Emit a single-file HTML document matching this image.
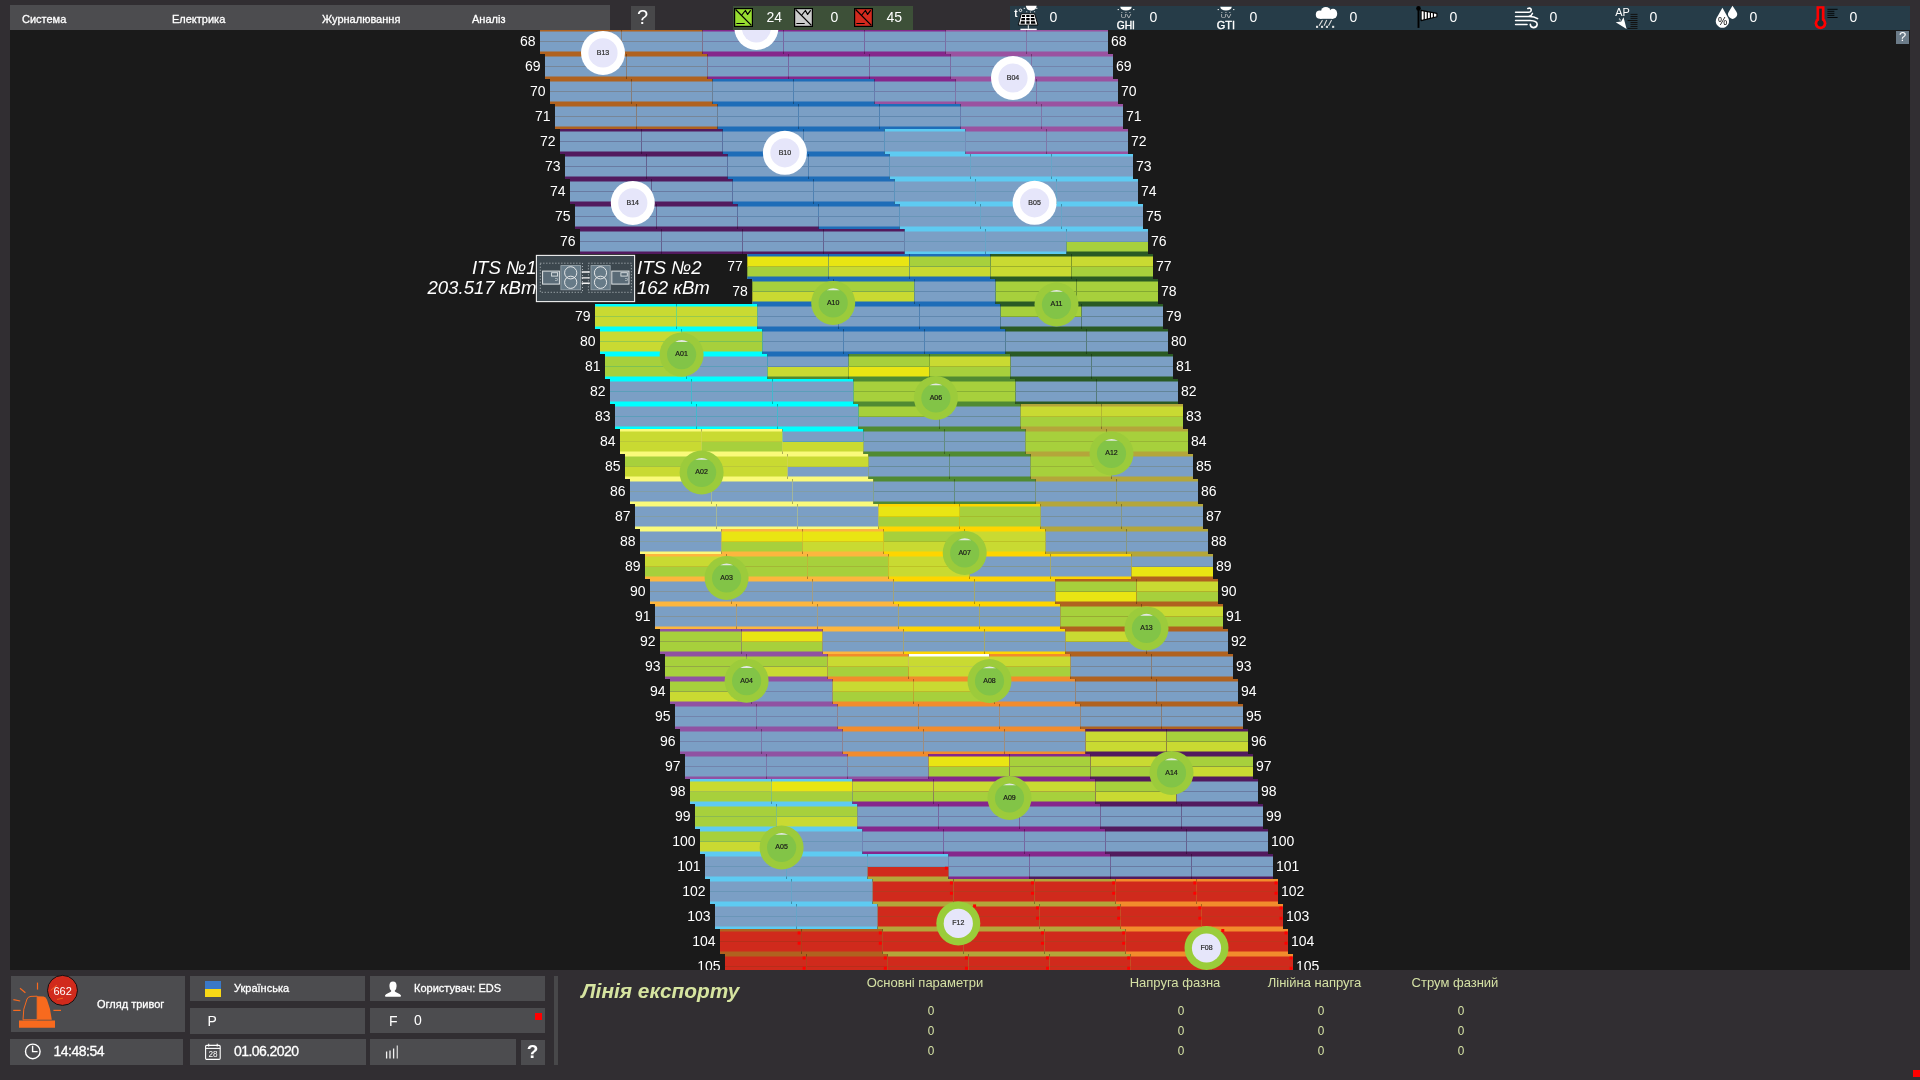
<!DOCTYPE html>
<html><head><meta charset="utf-8"><style>
html,body{margin:0;padding:0}
body{width:1920px;height:1080px;background:#312e32;position:relative;overflow:hidden;font-family:"Liberation Sans", sans-serif}
.s{-webkit-text-stroke:0.3px #fff}
</style></head><body>
<div style="position:absolute;left:0;top:0;width:1920px;height:1080px;will-change:transform">
<div style="position:absolute;left:10px;top:30px;width:1900px;height:940px;background:#1a1a1a"></div>
<svg width="1920" height="1080" style="position:absolute;left:0;top:0;will-change:transform">
<defs><clipPath id="cv"><rect x="10" y="30" width="1900" height="940"/></clipPath></defs>
<g clip-path="url(#cv)">
<rect x="535" y="4" width="81.84" height="12.5" fill="#7b9fc5"/>
<rect x="535" y="16.5" width="81.84" height="12.5" fill="#7b9fc5"/>
<rect x="535" y="16" width="81.84" height="1" fill="#778698"/>
<rect x="535" y="4" width="81.84" height="2.5" fill="#b0621f"/>
<rect x="535" y="26.5" width="81.84" height="2.5" fill="#b0621f"/>
<rect x="616.14" y="4" width="81.84" height="12.5" fill="#7b9fc5"/>
<rect x="616.14" y="16.5" width="81.84" height="12.5" fill="#7b9fc5"/>
<rect x="616.14" y="16" width="81.84" height="1" fill="#778698"/>
<rect x="616.14" y="4" width="81.84" height="2.5" fill="#b0621f"/>
<rect x="616.14" y="26.5" width="81.84" height="2.5" fill="#b0621f"/>
<rect x="697.29" y="4" width="81.84" height="12.5" fill="#7b9fc5"/>
<rect x="697.29" y="16.5" width="81.84" height="12.5" fill="#7b9fc5"/>
<rect x="697.29" y="16" width="81.84" height="1" fill="#707da9"/>
<rect x="697.29" y="4" width="81.84" height="2.5" fill="#85278c"/>
<rect x="697.29" y="26.5" width="81.84" height="2.5" fill="#85278c"/>
<rect x="778.43" y="4" width="81.84" height="12.5" fill="#7b9fc5"/>
<rect x="778.43" y="16.5" width="81.84" height="12.5" fill="#7b9fc5"/>
<rect x="778.43" y="16" width="81.84" height="1" fill="#707da9"/>
<rect x="778.43" y="4" width="81.84" height="2.5" fill="#85278c"/>
<rect x="778.43" y="26.5" width="81.84" height="2.5" fill="#85278c"/>
<rect x="859.57" y="4" width="81.84" height="12.5" fill="#7b9fc5"/>
<rect x="859.57" y="16.5" width="81.84" height="12.5" fill="#7b9fc5"/>
<rect x="859.57" y="16" width="81.84" height="1" fill="#707da9"/>
<rect x="859.57" y="4" width="81.84" height="2.5" fill="#85278c"/>
<rect x="859.57" y="26.5" width="81.84" height="2.5" fill="#85278c"/>
<rect x="940.71" y="4" width="81.84" height="12.5" fill="#7b9fc5"/>
<rect x="940.71" y="16.5" width="81.84" height="12.5" fill="#7b9fc5"/>
<rect x="940.71" y="16" width="81.84" height="1" fill="#7384ac"/>
<rect x="940.71" y="4" width="81.84" height="2.5" fill="#9a52a0"/>
<rect x="940.71" y="26.5" width="81.84" height="2.5" fill="#9a52a0"/>
<rect x="1021.86" y="4" width="81.14" height="12.5" fill="#7b9fc5"/>
<rect x="1021.86" y="16.5" width="81.14" height="12.5" fill="#7b9fc5"/>
<rect x="1021.86" y="16" width="81.14" height="1" fill="#7384ac"/>
<rect x="1021.86" y="4" width="81.14" height="2.5" fill="#9a52a0"/>
<rect x="1021.86" y="26.5" width="81.14" height="2.5" fill="#9a52a0"/>
<rect x="616" y="6.5" width="1" height="10" fill="#877d78"/>
<rect x="616" y="16.5" width="1" height="10" fill="#877d78"/>
<rect x="616" y="4" width="1" height="2.5" fill="#7b4516"/>
<rect x="616" y="26.5" width="1" height="2.5" fill="#7b4516"/>
<rect x="697" y="6.5" width="1" height="10" fill="#7e718d"/>
<rect x="697" y="16.5" width="1" height="10" fill="#7e718d"/>
<rect x="697" y="4" width="1" height="2.5" fill="#6c303c"/>
<rect x="697" y="26.5" width="1" height="2.5" fill="#6c303c"/>
<rect x="778" y="6.5" width="1" height="10" fill="#7666a2"/>
<rect x="778" y="16.5" width="1" height="10" fill="#7666a2"/>
<rect x="778" y="4" width="1" height="2.5" fill="#5d1b62"/>
<rect x="778" y="26.5" width="1" height="2.5" fill="#5d1b62"/>
<rect x="859" y="6.5" width="1" height="10" fill="#7666a2"/>
<rect x="859" y="16.5" width="1" height="10" fill="#7666a2"/>
<rect x="859" y="4" width="1" height="2.5" fill="#5d1b62"/>
<rect x="859" y="26.5" width="1" height="2.5" fill="#5d1b62"/>
<rect x="940" y="6.5" width="1" height="10" fill="#7a6ea5"/>
<rect x="940" y="16.5" width="1" height="10" fill="#7a6ea5"/>
<rect x="940" y="4" width="1" height="2.5" fill="#652a69"/>
<rect x="940" y="26.5" width="1" height="2.5" fill="#652a69"/>
<rect x="1021" y="6.5" width="1" height="10" fill="#7e77a9"/>
<rect x="1021" y="16.5" width="1" height="10" fill="#7e77a9"/>
<rect x="1021" y="4" width="1" height="2.5" fill="#6c3970"/>
<rect x="1021" y="26.5" width="1" height="2.5" fill="#6c3970"/>
<rect x="540" y="29" width="81.84" height="12.5" fill="#7b9fc5"/>
<rect x="540" y="41.5" width="81.84" height="12.5" fill="#7b9fc5"/>
<rect x="540" y="41" width="81.84" height="1" fill="#778698"/>
<rect x="540" y="29" width="81.84" height="2.5" fill="#b0621f"/>
<rect x="540" y="51.5" width="81.84" height="2.5" fill="#b0621f"/>
<rect x="621.14" y="29" width="81.84" height="12.5" fill="#7b9fc5"/>
<rect x="621.14" y="41.5" width="81.84" height="12.5" fill="#7b9fc5"/>
<rect x="621.14" y="41" width="81.84" height="1" fill="#778698"/>
<rect x="621.14" y="29" width="81.84" height="2.5" fill="#b0621f"/>
<rect x="621.14" y="51.5" width="81.84" height="2.5" fill="#b0621f"/>
<rect x="702.29" y="29" width="81.84" height="12.5" fill="#7b9fc5"/>
<rect x="702.29" y="41.5" width="81.84" height="12.5" fill="#7b9fc5"/>
<rect x="702.29" y="41" width="81.84" height="1" fill="#707da9"/>
<rect x="702.29" y="29" width="81.84" height="2.5" fill="#85278c"/>
<rect x="702.29" y="51.5" width="81.84" height="2.5" fill="#85278c"/>
<rect x="783.43" y="29" width="81.84" height="12.5" fill="#7b9fc5"/>
<rect x="783.43" y="41.5" width="81.84" height="12.5" fill="#7b9fc5"/>
<rect x="783.43" y="41" width="81.84" height="1" fill="#707da9"/>
<rect x="783.43" y="29" width="81.84" height="2.5" fill="#85278c"/>
<rect x="783.43" y="51.5" width="81.84" height="2.5" fill="#85278c"/>
<rect x="864.57" y="29" width="81.84" height="12.5" fill="#7b9fc5"/>
<rect x="864.57" y="41.5" width="81.84" height="12.5" fill="#7b9fc5"/>
<rect x="864.57" y="41" width="81.84" height="1" fill="#707da9"/>
<rect x="864.57" y="29" width="81.84" height="2.5" fill="#85278c"/>
<rect x="864.57" y="51.5" width="81.84" height="2.5" fill="#85278c"/>
<rect x="945.71" y="29" width="81.84" height="12.5" fill="#7b9fc5"/>
<rect x="945.71" y="41.5" width="81.84" height="12.5" fill="#7b9fc5"/>
<rect x="945.71" y="41" width="81.84" height="1" fill="#7384ac"/>
<rect x="945.71" y="29" width="81.84" height="2.5" fill="#9a52a0"/>
<rect x="945.71" y="51.5" width="81.84" height="2.5" fill="#9a52a0"/>
<rect x="1026.86" y="29" width="81.14" height="12.5" fill="#7b9fc5"/>
<rect x="1026.86" y="41.5" width="81.14" height="12.5" fill="#7b9fc5"/>
<rect x="1026.86" y="41" width="81.14" height="1" fill="#7384ac"/>
<rect x="1026.86" y="29" width="81.14" height="2.5" fill="#9a52a0"/>
<rect x="1026.86" y="51.5" width="81.14" height="2.5" fill="#9a52a0"/>
<rect x="621" y="31.5" width="1" height="10" fill="#877d78"/>
<rect x="621" y="41.5" width="1" height="10" fill="#877d78"/>
<rect x="621" y="29" width="1" height="2.5" fill="#7b4516"/>
<rect x="621" y="51.5" width="1" height="2.5" fill="#7b4516"/>
<rect x="702" y="31.5" width="1" height="10" fill="#7e718d"/>
<rect x="702" y="41.5" width="1" height="10" fill="#7e718d"/>
<rect x="702" y="29" width="1" height="2.5" fill="#6c303c"/>
<rect x="702" y="51.5" width="1" height="2.5" fill="#6c303c"/>
<rect x="783" y="31.5" width="1" height="10" fill="#7666a2"/>
<rect x="783" y="41.5" width="1" height="10" fill="#7666a2"/>
<rect x="783" y="29" width="1" height="2.5" fill="#5d1b62"/>
<rect x="783" y="51.5" width="1" height="2.5" fill="#5d1b62"/>
<rect x="864" y="31.5" width="1" height="10" fill="#7666a2"/>
<rect x="864" y="41.5" width="1" height="10" fill="#7666a2"/>
<rect x="864" y="29" width="1" height="2.5" fill="#5d1b62"/>
<rect x="864" y="51.5" width="1" height="2.5" fill="#5d1b62"/>
<rect x="945" y="31.5" width="1" height="10" fill="#7a6ea5"/>
<rect x="945" y="41.5" width="1" height="10" fill="#7a6ea5"/>
<rect x="945" y="29" width="1" height="2.5" fill="#652a69"/>
<rect x="945" y="51.5" width="1" height="2.5" fill="#652a69"/>
<rect x="1026" y="31.5" width="1" height="10" fill="#7e77a9"/>
<rect x="1026" y="41.5" width="1" height="10" fill="#7e77a9"/>
<rect x="1026" y="29" width="1" height="2.5" fill="#6c3970"/>
<rect x="1026" y="51.5" width="1" height="2.5" fill="#6c3970"/>
<rect x="545" y="54" width="81.84" height="12.5" fill="#7b9fc5"/>
<rect x="545" y="66.5" width="81.84" height="12.5" fill="#7b9fc5"/>
<rect x="545" y="66" width="81.84" height="1" fill="#778698"/>
<rect x="545" y="54" width="81.84" height="2.5" fill="#b0621f"/>
<rect x="545" y="76.5" width="81.84" height="2.5" fill="#b0621f"/>
<rect x="626.14" y="54" width="81.84" height="12.5" fill="#7b9fc5"/>
<rect x="626.14" y="66.5" width="81.84" height="12.5" fill="#7b9fc5"/>
<rect x="626.14" y="66" width="81.84" height="1" fill="#778698"/>
<rect x="626.14" y="54" width="81.84" height="2.5" fill="#b0621f"/>
<rect x="626.14" y="76.5" width="81.84" height="2.5" fill="#b0621f"/>
<rect x="707.29" y="54" width="81.84" height="12.5" fill="#7b9fc5"/>
<rect x="707.29" y="66.5" width="81.84" height="12.5" fill="#7b9fc5"/>
<rect x="707.29" y="66" width="81.84" height="1" fill="#707da9"/>
<rect x="707.29" y="54" width="81.84" height="2.5" fill="#85278c"/>
<rect x="707.29" y="76.5" width="81.84" height="2.5" fill="#85278c"/>
<rect x="788.43" y="54" width="81.84" height="12.5" fill="#7b9fc5"/>
<rect x="788.43" y="66.5" width="81.84" height="12.5" fill="#7b9fc5"/>
<rect x="788.43" y="66" width="81.84" height="1" fill="#707da9"/>
<rect x="788.43" y="54" width="81.84" height="2.5" fill="#85278c"/>
<rect x="788.43" y="76.5" width="81.84" height="2.5" fill="#85278c"/>
<rect x="869.57" y="54" width="81.84" height="12.5" fill="#7b9fc5"/>
<rect x="869.57" y="66.5" width="81.84" height="12.5" fill="#7b9fc5"/>
<rect x="869.57" y="66" width="81.84" height="1" fill="#707da9"/>
<rect x="869.57" y="54" width="81.84" height="2.5" fill="#85278c"/>
<rect x="869.57" y="76.5" width="81.84" height="2.5" fill="#85278c"/>
<rect x="950.71" y="54" width="81.84" height="12.5" fill="#7b9fc5"/>
<rect x="950.71" y="66.5" width="81.84" height="12.5" fill="#7b9fc5"/>
<rect x="950.71" y="66" width="81.84" height="1" fill="#7384ac"/>
<rect x="950.71" y="54" width="81.84" height="2.5" fill="#9a52a0"/>
<rect x="950.71" y="76.5" width="81.84" height="2.5" fill="#9a52a0"/>
<rect x="1031.86" y="54" width="81.14" height="12.5" fill="#7b9fc5"/>
<rect x="1031.86" y="66.5" width="81.14" height="12.5" fill="#7b9fc5"/>
<rect x="1031.86" y="66" width="81.14" height="1" fill="#7384ac"/>
<rect x="1031.86" y="54" width="81.14" height="2.5" fill="#9a52a0"/>
<rect x="1031.86" y="76.5" width="81.14" height="2.5" fill="#9a52a0"/>
<rect x="626" y="56.5" width="1" height="10" fill="#877d78"/>
<rect x="626" y="66.5" width="1" height="10" fill="#877d78"/>
<rect x="626" y="54" width="1" height="2.5" fill="#7b4516"/>
<rect x="626" y="76.5" width="1" height="2.5" fill="#7b4516"/>
<rect x="707" y="56.5" width="1" height="10" fill="#7e718d"/>
<rect x="707" y="66.5" width="1" height="10" fill="#7e718d"/>
<rect x="707" y="54" width="1" height="2.5" fill="#6c303c"/>
<rect x="707" y="76.5" width="1" height="2.5" fill="#6c303c"/>
<rect x="788" y="56.5" width="1" height="10" fill="#7666a2"/>
<rect x="788" y="66.5" width="1" height="10" fill="#7666a2"/>
<rect x="788" y="54" width="1" height="2.5" fill="#5d1b62"/>
<rect x="788" y="76.5" width="1" height="2.5" fill="#5d1b62"/>
<rect x="869" y="56.5" width="1" height="10" fill="#7666a2"/>
<rect x="869" y="66.5" width="1" height="10" fill="#7666a2"/>
<rect x="869" y="54" width="1" height="2.5" fill="#5d1b62"/>
<rect x="869" y="76.5" width="1" height="2.5" fill="#5d1b62"/>
<rect x="950" y="56.5" width="1" height="10" fill="#7a6ea5"/>
<rect x="950" y="66.5" width="1" height="10" fill="#7a6ea5"/>
<rect x="950" y="54" width="1" height="2.5" fill="#652a69"/>
<rect x="950" y="76.5" width="1" height="2.5" fill="#652a69"/>
<rect x="1031" y="56.5" width="1" height="10" fill="#7e77a9"/>
<rect x="1031" y="66.5" width="1" height="10" fill="#7e77a9"/>
<rect x="1031" y="54" width="1" height="2.5" fill="#6c3970"/>
<rect x="1031" y="76.5" width="1" height="2.5" fill="#6c3970"/>
<rect x="550" y="79" width="81.84" height="12.5" fill="#7b9fc5"/>
<rect x="550" y="91.5" width="81.84" height="12.5" fill="#7b9fc5"/>
<rect x="550" y="91" width="81.84" height="1" fill="#778698"/>
<rect x="550" y="79" width="81.84" height="2.5" fill="#b0621f"/>
<rect x="550" y="101.5" width="81.84" height="2.5" fill="#b0621f"/>
<rect x="631.14" y="79" width="81.84" height="12.5" fill="#7b9fc5"/>
<rect x="631.14" y="91.5" width="81.84" height="12.5" fill="#7b9fc5"/>
<rect x="631.14" y="91" width="81.84" height="1" fill="#778698"/>
<rect x="631.14" y="79" width="81.84" height="2.5" fill="#b0621f"/>
<rect x="631.14" y="101.5" width="81.84" height="2.5" fill="#b0621f"/>
<rect x="712.29" y="79" width="81.84" height="12.5" fill="#7b9fc5"/>
<rect x="712.29" y="91.5" width="81.84" height="12.5" fill="#7b9fc5"/>
<rect x="712.29" y="91" width="81.84" height="1" fill="#6188af"/>
<rect x="712.29" y="79" width="81.84" height="2.5" fill="#1e6db8"/>
<rect x="712.29" y="101.5" width="81.84" height="2.5" fill="#1e6db8"/>
<rect x="793.43" y="79" width="81.84" height="12.5" fill="#7b9fc5"/>
<rect x="793.43" y="91.5" width="81.84" height="12.5" fill="#7b9fc5"/>
<rect x="793.43" y="91" width="81.84" height="1" fill="#6188af"/>
<rect x="793.43" y="79" width="81.84" height="2.5" fill="#1e6db8"/>
<rect x="793.43" y="101.5" width="81.84" height="2.5" fill="#1e6db8"/>
<rect x="874.57" y="79" width="81.84" height="12.5" fill="#7b9fc5"/>
<rect x="874.57" y="91.5" width="81.84" height="12.5" fill="#7b9fc5"/>
<rect x="874.57" y="91" width="81.84" height="1" fill="#707da9"/>
<rect x="874.57" y="79" width="81.84" height="2.5" fill="#85278c"/>
<rect x="874.57" y="101.5" width="81.84" height="2.5" fill="#9a52a0"/>
<rect x="955.71" y="79" width="81.84" height="12.5" fill="#7b9fc5"/>
<rect x="955.71" y="91.5" width="81.84" height="12.5" fill="#7b9fc5"/>
<rect x="955.71" y="91" width="81.84" height="1" fill="#7384ac"/>
<rect x="955.71" y="79" width="81.84" height="2.5" fill="#9a52a0"/>
<rect x="955.71" y="101.5" width="81.84" height="2.5" fill="#9a52a0"/>
<rect x="1036.86" y="79" width="81.14" height="12.5" fill="#7b9fc5"/>
<rect x="1036.86" y="91.5" width="81.14" height="12.5" fill="#7b9fc5"/>
<rect x="1036.86" y="91" width="81.14" height="1" fill="#7384ac"/>
<rect x="1036.86" y="79" width="81.14" height="2.5" fill="#9a52a0"/>
<rect x="1036.86" y="101.5" width="81.14" height="2.5" fill="#9a52a0"/>
<rect x="631" y="81.5" width="1" height="10" fill="#877d78"/>
<rect x="631" y="91.5" width="1" height="10" fill="#877d78"/>
<rect x="631" y="79" width="1" height="2.5" fill="#7b4516"/>
<rect x="631" y="101.5" width="1" height="2.5" fill="#7b4516"/>
<rect x="712" y="81.5" width="1" height="10" fill="#6b7f95"/>
<rect x="712" y="91.5" width="1" height="10" fill="#6b7f95"/>
<rect x="712" y="79" width="1" height="2.5" fill="#48494c"/>
<rect x="712" y="101.5" width="1" height="2.5" fill="#48494c"/>
<rect x="793" y="81.5" width="1" height="10" fill="#4f81b2"/>
<rect x="793" y="91.5" width="1" height="10" fill="#4f81b2"/>
<rect x="793" y="79" width="1" height="2.5" fill="#154c81"/>
<rect x="793" y="101.5" width="1" height="2.5" fill="#154c81"/>
<rect x="874" y="81.5" width="1" height="10" fill="#6374aa"/>
<rect x="874" y="91.5" width="1" height="10" fill="#677cae"/>
<rect x="874" y="79" width="1" height="2.5" fill="#393471"/>
<rect x="874" y="101.5" width="1" height="2.5" fill="#404378"/>
<rect x="955" y="81.5" width="1" height="10" fill="#7a6ea5"/>
<rect x="955" y="91.5" width="1" height="10" fill="#7e77a9"/>
<rect x="955" y="79" width="1" height="2.5" fill="#652a69"/>
<rect x="955" y="101.5" width="1" height="2.5" fill="#6c3970"/>
<rect x="1036" y="81.5" width="1" height="10" fill="#7e77a9"/>
<rect x="1036" y="91.5" width="1" height="10" fill="#7e77a9"/>
<rect x="1036" y="79" width="1" height="2.5" fill="#6c3970"/>
<rect x="1036" y="101.5" width="1" height="2.5" fill="#6c3970"/>
<rect x="555" y="104" width="81.84" height="12.5" fill="#7b9fc5"/>
<rect x="555" y="116.5" width="81.84" height="12.5" fill="#7b9fc5"/>
<rect x="555" y="116" width="81.84" height="1" fill="#778698"/>
<rect x="555" y="104" width="81.84" height="2.5" fill="#b0621f"/>
<rect x="555" y="126.5" width="81.84" height="2.5" fill="#b0621f"/>
<rect x="636.14" y="104" width="81.84" height="12.5" fill="#7b9fc5"/>
<rect x="636.14" y="116.5" width="81.84" height="12.5" fill="#7b9fc5"/>
<rect x="636.14" y="116" width="81.84" height="1" fill="#778698"/>
<rect x="636.14" y="104" width="81.84" height="2.5" fill="#b0621f"/>
<rect x="636.14" y="126.5" width="81.84" height="2.5" fill="#b0621f"/>
<rect x="717.29" y="104" width="81.84" height="12.5" fill="#7b9fc5"/>
<rect x="717.29" y="116.5" width="81.84" height="12.5" fill="#7b9fc5"/>
<rect x="717.29" y="116" width="81.84" height="1" fill="#6188af"/>
<rect x="717.29" y="104" width="81.84" height="2.5" fill="#1e6db8"/>
<rect x="717.29" y="126.5" width="81.84" height="2.5" fill="#1e6db8"/>
<rect x="798.43" y="104" width="81.84" height="12.5" fill="#7b9fc5"/>
<rect x="798.43" y="116.5" width="81.84" height="12.5" fill="#7b9fc5"/>
<rect x="798.43" y="116" width="81.84" height="1" fill="#6188af"/>
<rect x="798.43" y="104" width="81.84" height="2.5" fill="#1e6db8"/>
<rect x="798.43" y="126.5" width="81.84" height="2.5" fill="#1e6db8"/>
<rect x="879.57" y="104" width="81.84" height="12.5" fill="#7b9fc5"/>
<rect x="879.57" y="116.5" width="81.84" height="12.5" fill="#7b9fc5"/>
<rect x="879.57" y="116" width="81.84" height="1" fill="#6188af"/>
<rect x="879.57" y="104" width="81.84" height="2.5" fill="#1e6db8"/>
<rect x="879.57" y="126.5" width="81.84" height="2.5" fill="#1e6db8"/>
<rect x="960.71" y="104" width="81.84" height="12.5" fill="#7b9fc5"/>
<rect x="960.71" y="116.5" width="81.84" height="12.5" fill="#7b9fc5"/>
<rect x="960.71" y="116" width="81.84" height="1" fill="#7384ac"/>
<rect x="960.71" y="104" width="81.84" height="2.5" fill="#9a52a0"/>
<rect x="960.71" y="126.5" width="81.84" height="2.5" fill="#9a52a0"/>
<rect x="1041.86" y="104" width="81.14" height="12.5" fill="#7b9fc5"/>
<rect x="1041.86" y="116.5" width="81.14" height="12.5" fill="#7b9fc5"/>
<rect x="1041.86" y="116" width="81.14" height="1" fill="#7384ac"/>
<rect x="1041.86" y="104" width="81.14" height="2.5" fill="#9a52a0"/>
<rect x="1041.86" y="126.5" width="81.14" height="2.5" fill="#9a52a0"/>
<rect x="636" y="106.5" width="1" height="10" fill="#877d78"/>
<rect x="636" y="116.5" width="1" height="10" fill="#877d78"/>
<rect x="636" y="104" width="1" height="2.5" fill="#7b4516"/>
<rect x="636" y="126.5" width="1" height="2.5" fill="#7b4516"/>
<rect x="717" y="106.5" width="1" height="10" fill="#6b7f95"/>
<rect x="717" y="116.5" width="1" height="10" fill="#6b7f95"/>
<rect x="717" y="104" width="1" height="2.5" fill="#48494c"/>
<rect x="717" y="126.5" width="1" height="2.5" fill="#48494c"/>
<rect x="798" y="106.5" width="1" height="10" fill="#4f81b2"/>
<rect x="798" y="116.5" width="1" height="10" fill="#4f81b2"/>
<rect x="798" y="104" width="1" height="2.5" fill="#154c81"/>
<rect x="798" y="126.5" width="1" height="2.5" fill="#154c81"/>
<rect x="879" y="106.5" width="1" height="10" fill="#4f81b2"/>
<rect x="879" y="116.5" width="1" height="10" fill="#4f81b2"/>
<rect x="879" y="104" width="1" height="2.5" fill="#154c81"/>
<rect x="879" y="126.5" width="1" height="2.5" fill="#154c81"/>
<rect x="960" y="106.5" width="1" height="10" fill="#677cae"/>
<rect x="960" y="116.5" width="1" height="10" fill="#677cae"/>
<rect x="960" y="104" width="1" height="2.5" fill="#404378"/>
<rect x="960" y="126.5" width="1" height="2.5" fill="#404378"/>
<rect x="1041" y="106.5" width="1" height="10" fill="#7e77a9"/>
<rect x="1041" y="116.5" width="1" height="10" fill="#7e77a9"/>
<rect x="1041" y="104" width="1" height="2.5" fill="#6c3970"/>
<rect x="1041" y="126.5" width="1" height="2.5" fill="#6c3970"/>
<rect x="560" y="129" width="81.84" height="12.5" fill="#7b9fc5"/>
<rect x="560" y="141.5" width="81.84" height="12.5" fill="#7b9fc5"/>
<rect x="560" y="141" width="81.84" height="1" fill="#697ba2"/>
<rect x="560" y="129" width="81.84" height="2.5" fill="#521a5e"/>
<rect x="560" y="151.5" width="81.84" height="2.5" fill="#521a5e"/>
<rect x="641.14" y="129" width="81.84" height="12.5" fill="#7b9fc5"/>
<rect x="641.14" y="141.5" width="81.84" height="12.5" fill="#7b9fc5"/>
<rect x="641.14" y="141" width="81.84" height="1" fill="#697ba2"/>
<rect x="641.14" y="129" width="81.84" height="2.5" fill="#521a5e"/>
<rect x="641.14" y="151.5" width="81.84" height="2.5" fill="#521a5e"/>
<rect x="722.29" y="129" width="81.84" height="12.5" fill="#7b9fc5"/>
<rect x="722.29" y="141.5" width="81.84" height="12.5" fill="#7b9fc5"/>
<rect x="722.29" y="141" width="81.84" height="1" fill="#6188af"/>
<rect x="722.29" y="129" width="81.84" height="2.5" fill="#1e6db8"/>
<rect x="722.29" y="151.5" width="81.84" height="2.5" fill="#1e6db8"/>
<rect x="803.43" y="129" width="81.84" height="12.5" fill="#7b9fc5"/>
<rect x="803.43" y="141.5" width="81.84" height="12.5" fill="#7b9fc5"/>
<rect x="803.43" y="141" width="81.84" height="1" fill="#6188af"/>
<rect x="803.43" y="129" width="81.84" height="2.5" fill="#1e6db8"/>
<rect x="803.43" y="151.5" width="81.84" height="2.5" fill="#1e6db8"/>
<rect x="884.57" y="129" width="81.84" height="12.5" fill="#7b9fc5"/>
<rect x="884.57" y="141.5" width="81.84" height="12.5" fill="#7b9fc5"/>
<rect x="884.57" y="141" width="81.84" height="1" fill="#6a96b8"/>
<rect x="884.57" y="129" width="81.84" height="2.5" fill="#5ecbf2"/>
<rect x="884.57" y="151.5" width="81.84" height="2.5" fill="#5ecbf2"/>
<rect x="965.71" y="129" width="81.84" height="12.5" fill="#7b9fc5"/>
<rect x="965.71" y="141.5" width="81.84" height="12.5" fill="#7b9fc5"/>
<rect x="965.71" y="141" width="81.84" height="1" fill="#7384ac"/>
<rect x="965.71" y="129" width="81.84" height="2.5" fill="#9a52a0"/>
<rect x="965.71" y="151.5" width="81.84" height="2.5" fill="#9a52a0"/>
<rect x="1046.86" y="129" width="81.14" height="12.5" fill="#7b9fc5"/>
<rect x="1046.86" y="141.5" width="81.14" height="12.5" fill="#7b9fc5"/>
<rect x="1046.86" y="141" width="81.14" height="1" fill="#7384ac"/>
<rect x="1046.86" y="129" width="81.14" height="2.5" fill="#9a52a0"/>
<rect x="1046.86" y="151.5" width="81.14" height="2.5" fill="#9a52a0"/>
<rect x="641" y="131.5" width="1" height="10" fill="#636190"/>
<rect x="641" y="141.5" width="1" height="10" fill="#636190"/>
<rect x="641" y="129" width="1" height="2.5" fill="#391242"/>
<rect x="641" y="151.5" width="1" height="2.5" fill="#391242"/>
<rect x="722" y="131.5" width="1" height="10" fill="#5971a1"/>
<rect x="722" y="141.5" width="1" height="10" fill="#5971a1"/>
<rect x="722" y="129" width="1" height="2.5" fill="#273061"/>
<rect x="722" y="151.5" width="1" height="2.5" fill="#273061"/>
<rect x="803" y="131.5" width="1" height="10" fill="#4f81b2"/>
<rect x="803" y="141.5" width="1" height="10" fill="#4f81b2"/>
<rect x="803" y="129" width="1" height="2.5" fill="#154c81"/>
<rect x="803" y="151.5" width="1" height="2.5" fill="#154c81"/>
<rect x="884" y="131.5" width="1" height="10" fill="#5b93bd"/>
<rect x="884" y="141.5" width="1" height="10" fill="#5b93bd"/>
<rect x="884" y="129" width="1" height="2.5" fill="#2b6d95"/>
<rect x="884" y="151.5" width="1" height="2.5" fill="#2b6d95"/>
<rect x="965" y="131.5" width="1" height="10" fill="#738db9"/>
<rect x="965" y="141.5" width="1" height="10" fill="#738db9"/>
<rect x="965" y="129" width="1" height="2.5" fill="#57638d"/>
<rect x="965" y="151.5" width="1" height="2.5" fill="#57638d"/>
<rect x="1046" y="131.5" width="1" height="10" fill="#7e77a9"/>
<rect x="1046" y="141.5" width="1" height="10" fill="#7e77a9"/>
<rect x="1046" y="129" width="1" height="2.5" fill="#6c3970"/>
<rect x="1046" y="151.5" width="1" height="2.5" fill="#6c3970"/>
<rect x="565" y="154" width="81.84" height="12.5" fill="#7b9fc5"/>
<rect x="565" y="166.5" width="81.84" height="12.5" fill="#7b9fc5"/>
<rect x="565" y="166" width="81.84" height="1" fill="#697ba2"/>
<rect x="565" y="154" width="81.84" height="2.5" fill="#521a5e"/>
<rect x="565" y="176.5" width="81.84" height="2.5" fill="#521a5e"/>
<rect x="646.14" y="154" width="81.84" height="12.5" fill="#7b9fc5"/>
<rect x="646.14" y="166.5" width="81.84" height="12.5" fill="#7b9fc5"/>
<rect x="646.14" y="166" width="81.84" height="1" fill="#697ba2"/>
<rect x="646.14" y="154" width="81.84" height="2.5" fill="#521a5e"/>
<rect x="646.14" y="176.5" width="81.84" height="2.5" fill="#521a5e"/>
<rect x="727.29" y="154" width="81.84" height="12.5" fill="#7b9fc5"/>
<rect x="727.29" y="166.5" width="81.84" height="12.5" fill="#7b9fc5"/>
<rect x="727.29" y="166" width="81.84" height="1" fill="#6188af"/>
<rect x="727.29" y="154" width="81.84" height="2.5" fill="#1e6db8"/>
<rect x="727.29" y="176.5" width="81.84" height="2.5" fill="#1e6db8"/>
<rect x="808.43" y="154" width="81.84" height="12.5" fill="#7b9fc5"/>
<rect x="808.43" y="166.5" width="81.84" height="12.5" fill="#7b9fc5"/>
<rect x="808.43" y="166" width="81.84" height="1" fill="#6188af"/>
<rect x="808.43" y="154" width="81.84" height="2.5" fill="#1e6db8"/>
<rect x="808.43" y="176.5" width="81.84" height="2.5" fill="#1e6db8"/>
<rect x="889.57" y="154" width="81.84" height="12.5" fill="#7b9fc5"/>
<rect x="889.57" y="166.5" width="81.84" height="12.5" fill="#7b9fc5"/>
<rect x="889.57" y="166" width="81.84" height="1" fill="#6a96b8"/>
<rect x="889.57" y="154" width="81.84" height="2.5" fill="#5ecbf2"/>
<rect x="889.57" y="176.5" width="81.84" height="2.5" fill="#5ecbf2"/>
<rect x="970.71" y="154" width="81.84" height="12.5" fill="#7b9fc5"/>
<rect x="970.71" y="166.5" width="81.84" height="12.5" fill="#7b9fc5"/>
<rect x="970.71" y="166" width="81.84" height="1" fill="#6a96b8"/>
<rect x="970.71" y="154" width="81.84" height="2.5" fill="#5ecbf2"/>
<rect x="970.71" y="176.5" width="81.84" height="2.5" fill="#5ecbf2"/>
<rect x="1051.86" y="154" width="81.14" height="12.5" fill="#7b9fc5"/>
<rect x="1051.86" y="166.5" width="81.14" height="12.5" fill="#7b9fc5"/>
<rect x="1051.86" y="166" width="81.14" height="1" fill="#6a96b8"/>
<rect x="1051.86" y="154" width="81.14" height="2.5" fill="#5ecbf2"/>
<rect x="1051.86" y="176.5" width="81.14" height="2.5" fill="#5ecbf2"/>
<rect x="646" y="156.5" width="1" height="10" fill="#636190"/>
<rect x="646" y="166.5" width="1" height="10" fill="#636190"/>
<rect x="646" y="154" width="1" height="2.5" fill="#391242"/>
<rect x="646" y="176.5" width="1" height="2.5" fill="#391242"/>
<rect x="727" y="156.5" width="1" height="10" fill="#5971a1"/>
<rect x="727" y="166.5" width="1" height="10" fill="#5971a1"/>
<rect x="727" y="154" width="1" height="2.5" fill="#273061"/>
<rect x="727" y="176.5" width="1" height="2.5" fill="#273061"/>
<rect x="808" y="156.5" width="1" height="10" fill="#4f81b2"/>
<rect x="808" y="166.5" width="1" height="10" fill="#4f81b2"/>
<rect x="808" y="154" width="1" height="2.5" fill="#154c81"/>
<rect x="808" y="176.5" width="1" height="2.5" fill="#154c81"/>
<rect x="889" y="156.5" width="1" height="10" fill="#5b93bd"/>
<rect x="889" y="166.5" width="1" height="10" fill="#5b93bd"/>
<rect x="889" y="154" width="1" height="2.5" fill="#2b6d95"/>
<rect x="889" y="176.5" width="1" height="2.5" fill="#2b6d95"/>
<rect x="970" y="156.5" width="1" height="10" fill="#67a5c8"/>
<rect x="970" y="166.5" width="1" height="10" fill="#67a5c8"/>
<rect x="970" y="154" width="1" height="2.5" fill="#428ea9"/>
<rect x="970" y="176.5" width="1" height="2.5" fill="#428ea9"/>
<rect x="1051" y="156.5" width="1" height="10" fill="#67a5c8"/>
<rect x="1051" y="166.5" width="1" height="10" fill="#67a5c8"/>
<rect x="1051" y="154" width="1" height="2.5" fill="#428ea9"/>
<rect x="1051" y="176.5" width="1" height="2.5" fill="#428ea9"/>
<rect x="570" y="179" width="81.84" height="12.5" fill="#7b9fc5"/>
<rect x="570" y="191.5" width="81.84" height="12.5" fill="#7b9fc5"/>
<rect x="570" y="191" width="81.84" height="1" fill="#697ba2"/>
<rect x="570" y="179" width="81.84" height="2.5" fill="#521a5e"/>
<rect x="570" y="201.5" width="81.84" height="2.5" fill="#521a5e"/>
<rect x="651.14" y="179" width="81.84" height="12.5" fill="#7b9fc5"/>
<rect x="651.14" y="191.5" width="81.84" height="12.5" fill="#7b9fc5"/>
<rect x="651.14" y="191" width="81.84" height="1" fill="#697ba2"/>
<rect x="651.14" y="179" width="81.84" height="2.5" fill="#521a5e"/>
<rect x="651.14" y="201.5" width="81.84" height="2.5" fill="#521a5e"/>
<rect x="732.29" y="179" width="81.84" height="12.5" fill="#7b9fc5"/>
<rect x="732.29" y="191.5" width="81.84" height="12.5" fill="#7b9fc5"/>
<rect x="732.29" y="191" width="81.84" height="1" fill="#6188af"/>
<rect x="732.29" y="179" width="81.84" height="2.5" fill="#1e6db8"/>
<rect x="732.29" y="201.5" width="81.84" height="2.5" fill="#1e6db8"/>
<rect x="813.43" y="179" width="81.84" height="12.5" fill="#7b9fc5"/>
<rect x="813.43" y="191.5" width="81.84" height="12.5" fill="#7b9fc5"/>
<rect x="813.43" y="191" width="81.84" height="1" fill="#6188af"/>
<rect x="813.43" y="179" width="81.84" height="2.5" fill="#1e6db8"/>
<rect x="813.43" y="201.5" width="81.84" height="2.5" fill="#1e6db8"/>
<rect x="894.57" y="179" width="81.84" height="12.5" fill="#7b9fc5"/>
<rect x="894.57" y="191.5" width="81.84" height="12.5" fill="#7b9fc5"/>
<rect x="894.57" y="191" width="81.84" height="1" fill="#6a96b8"/>
<rect x="894.57" y="179" width="81.84" height="2.5" fill="#5ecbf2"/>
<rect x="894.57" y="201.5" width="81.84" height="2.5" fill="#5ecbf2"/>
<rect x="975.71" y="179" width="81.84" height="12.5" fill="#7b9fc5"/>
<rect x="975.71" y="191.5" width="81.84" height="12.5" fill="#7b9fc5"/>
<rect x="975.71" y="191" width="81.84" height="1" fill="#6a96b8"/>
<rect x="975.71" y="179" width="81.84" height="2.5" fill="#5ecbf2"/>
<rect x="975.71" y="201.5" width="81.84" height="2.5" fill="#5ecbf2"/>
<rect x="1056.86" y="179" width="81.14" height="12.5" fill="#7b9fc5"/>
<rect x="1056.86" y="191.5" width="81.14" height="12.5" fill="#7b9fc5"/>
<rect x="1056.86" y="191" width="81.14" height="1" fill="#6a96b8"/>
<rect x="1056.86" y="179" width="81.14" height="2.5" fill="#5ecbf2"/>
<rect x="1056.86" y="201.5" width="81.14" height="2.5" fill="#5ecbf2"/>
<rect x="651" y="181.5" width="1" height="10" fill="#636190"/>
<rect x="651" y="191.5" width="1" height="10" fill="#636190"/>
<rect x="651" y="179" width="1" height="2.5" fill="#391242"/>
<rect x="651" y="201.5" width="1" height="2.5" fill="#391242"/>
<rect x="732" y="181.5" width="1" height="10" fill="#5971a1"/>
<rect x="732" y="191.5" width="1" height="10" fill="#5971a1"/>
<rect x="732" y="179" width="1" height="2.5" fill="#273061"/>
<rect x="732" y="201.5" width="1" height="2.5" fill="#273061"/>
<rect x="813" y="181.5" width="1" height="10" fill="#4f81b2"/>
<rect x="813" y="191.5" width="1" height="10" fill="#4f81b2"/>
<rect x="813" y="179" width="1" height="2.5" fill="#154c81"/>
<rect x="813" y="201.5" width="1" height="2.5" fill="#154c81"/>
<rect x="894" y="181.5" width="1" height="10" fill="#5b93bd"/>
<rect x="894" y="191.5" width="1" height="10" fill="#5b93bd"/>
<rect x="894" y="179" width="1" height="2.5" fill="#2b6d95"/>
<rect x="894" y="201.5" width="1" height="2.5" fill="#2b6d95"/>
<rect x="975" y="181.5" width="1" height="10" fill="#67a5c8"/>
<rect x="975" y="191.5" width="1" height="10" fill="#67a5c8"/>
<rect x="975" y="179" width="1" height="2.5" fill="#428ea9"/>
<rect x="975" y="201.5" width="1" height="2.5" fill="#428ea9"/>
<rect x="1056" y="181.5" width="1" height="10" fill="#67a5c8"/>
<rect x="1056" y="191.5" width="1" height="10" fill="#67a5c8"/>
<rect x="1056" y="179" width="1" height="2.5" fill="#428ea9"/>
<rect x="1056" y="201.5" width="1" height="2.5" fill="#428ea9"/>
<rect x="575" y="204" width="81.84" height="12.5" fill="#7b9fc5"/>
<rect x="575" y="216.5" width="81.84" height="12.5" fill="#7b9fc5"/>
<rect x="575" y="216" width="81.84" height="1" fill="#697ba2"/>
<rect x="575" y="204" width="81.84" height="2.5" fill="#521a5e"/>
<rect x="575" y="226.5" width="81.84" height="2.5" fill="#521a5e"/>
<rect x="656.14" y="204" width="81.84" height="12.5" fill="#7b9fc5"/>
<rect x="656.14" y="216.5" width="81.84" height="12.5" fill="#7b9fc5"/>
<rect x="656.14" y="216" width="81.84" height="1" fill="#697ba2"/>
<rect x="656.14" y="204" width="81.84" height="2.5" fill="#521a5e"/>
<rect x="656.14" y="226.5" width="81.84" height="2.5" fill="#521a5e"/>
<rect x="737.29" y="204" width="81.84" height="12.5" fill="#7b9fc5"/>
<rect x="737.29" y="216.5" width="81.84" height="12.5" fill="#7b9fc5"/>
<rect x="737.29" y="216" width="81.84" height="1" fill="#6188af"/>
<rect x="737.29" y="204" width="81.84" height="2.5" fill="#1e6db8"/>
<rect x="737.29" y="226.5" width="81.84" height="2.5" fill="#521a5e"/>
<rect x="818.43" y="204" width="81.84" height="12.5" fill="#7b9fc5"/>
<rect x="818.43" y="216.5" width="81.84" height="12.5" fill="#7b9fc5"/>
<rect x="818.43" y="216" width="81.84" height="1" fill="#6188af"/>
<rect x="818.43" y="204" width="81.84" height="2.5" fill="#1e6db8"/>
<rect x="818.43" y="226.5" width="81.84" height="2.5" fill="#1e6db8"/>
<rect x="899.57" y="204" width="81.84" height="12.5" fill="#7b9fc5"/>
<rect x="899.57" y="216.5" width="81.84" height="12.5" fill="#7b9fc5"/>
<rect x="899.57" y="216" width="81.84" height="1" fill="#6a96b8"/>
<rect x="899.57" y="204" width="81.84" height="2.5" fill="#5ecbf2"/>
<rect x="899.57" y="226.5" width="81.84" height="2.5" fill="#5ecbf2"/>
<rect x="980.71" y="204" width="81.84" height="12.5" fill="#7b9fc5"/>
<rect x="980.71" y="216.5" width="81.84" height="12.5" fill="#7b9fc5"/>
<rect x="980.71" y="216" width="81.84" height="1" fill="#6a96b8"/>
<rect x="980.71" y="204" width="81.84" height="2.5" fill="#5ecbf2"/>
<rect x="980.71" y="226.5" width="81.84" height="2.5" fill="#5ecbf2"/>
<rect x="1061.86" y="204" width="81.14" height="12.5" fill="#7b9fc5"/>
<rect x="1061.86" y="216.5" width="81.14" height="12.5" fill="#7b9fc5"/>
<rect x="1061.86" y="216" width="81.14" height="1" fill="#6a96b8"/>
<rect x="1061.86" y="204" width="81.14" height="2.5" fill="#5ecbf2"/>
<rect x="1061.86" y="226.5" width="81.14" height="2.5" fill="#5ecbf2"/>
<rect x="656" y="206.5" width="1" height="10" fill="#636190"/>
<rect x="656" y="216.5" width="1" height="10" fill="#636190"/>
<rect x="656" y="204" width="1" height="2.5" fill="#391242"/>
<rect x="656" y="226.5" width="1" height="2.5" fill="#391242"/>
<rect x="737" y="206.5" width="1" height="10" fill="#5971a1"/>
<rect x="737" y="216.5" width="1" height="10" fill="#636190"/>
<rect x="737" y="204" width="1" height="2.5" fill="#273061"/>
<rect x="737" y="226.5" width="1" height="2.5" fill="#391242"/>
<rect x="818" y="206.5" width="1" height="10" fill="#4f81b2"/>
<rect x="818" y="216.5" width="1" height="10" fill="#5971a1"/>
<rect x="818" y="204" width="1" height="2.5" fill="#154c81"/>
<rect x="818" y="226.5" width="1" height="2.5" fill="#273061"/>
<rect x="899" y="206.5" width="1" height="10" fill="#5b93bd"/>
<rect x="899" y="216.5" width="1" height="10" fill="#5b93bd"/>
<rect x="899" y="204" width="1" height="2.5" fill="#2b6d95"/>
<rect x="899" y="226.5" width="1" height="2.5" fill="#2b6d95"/>
<rect x="980" y="206.5" width="1" height="10" fill="#67a5c8"/>
<rect x="980" y="216.5" width="1" height="10" fill="#67a5c8"/>
<rect x="980" y="204" width="1" height="2.5" fill="#428ea9"/>
<rect x="980" y="226.5" width="1" height="2.5" fill="#428ea9"/>
<rect x="1061" y="206.5" width="1" height="10" fill="#67a5c8"/>
<rect x="1061" y="216.5" width="1" height="10" fill="#67a5c8"/>
<rect x="1061" y="204" width="1" height="2.5" fill="#428ea9"/>
<rect x="1061" y="226.5" width="1" height="2.5" fill="#428ea9"/>
<rect x="580" y="229" width="81.84" height="12.5" fill="#7b9fc5"/>
<rect x="580" y="241.5" width="81.84" height="12.5" fill="#7b9fc5"/>
<rect x="580" y="241" width="81.84" height="1" fill="#697ba2"/>
<rect x="580" y="229" width="81.84" height="2.5" fill="#521a5e"/>
<rect x="580" y="251.5" width="81.84" height="2.5" fill="#521a5e"/>
<rect x="661.14" y="229" width="81.84" height="12.5" fill="#7b9fc5"/>
<rect x="661.14" y="241.5" width="81.84" height="12.5" fill="#7b9fc5"/>
<rect x="661.14" y="241" width="81.84" height="1" fill="#697ba2"/>
<rect x="661.14" y="229" width="81.84" height="2.5" fill="#521a5e"/>
<rect x="661.14" y="251.5" width="81.84" height="2.5" fill="#521a5e"/>
<rect x="742.29" y="229" width="81.84" height="12.5" fill="#7b9fc5"/>
<rect x="742.29" y="241.5" width="81.84" height="12.5" fill="#7b9fc5"/>
<rect x="742.29" y="241" width="81.84" height="1" fill="#697ba2"/>
<rect x="742.29" y="229" width="81.84" height="2.5" fill="#521a5e"/>
<rect x="742.29" y="251.5" width="81.84" height="2.5" fill="#521a5e"/>
<rect x="823.43" y="229" width="81.84" height="12.5" fill="#7b9fc5"/>
<rect x="823.43" y="241.5" width="81.84" height="12.5" fill="#7b9fc5"/>
<rect x="823.43" y="241" width="81.84" height="1" fill="#697ba2"/>
<rect x="823.43" y="229" width="81.84" height="2.5" fill="#521a5e"/>
<rect x="823.43" y="251.5" width="81.84" height="2.5" fill="#521a5e"/>
<rect x="904.57" y="229" width="81.84" height="12.5" fill="#7b9fc5"/>
<rect x="904.57" y="241.5" width="81.84" height="12.5" fill="#7b9fc5"/>
<rect x="904.57" y="241" width="81.84" height="1" fill="#6a96b8"/>
<rect x="904.57" y="229" width="81.84" height="2.5" fill="#5ecbf2"/>
<rect x="904.57" y="251.5" width="81.84" height="2.5" fill="#5ecbf2"/>
<rect x="985.71" y="229" width="81.84" height="12.5" fill="#7b9fc5"/>
<rect x="985.71" y="241.5" width="81.84" height="12.5" fill="#7b9fc5"/>
<rect x="985.71" y="241" width="81.84" height="1" fill="#6a96b8"/>
<rect x="985.71" y="229" width="81.84" height="2.5" fill="#5ecbf2"/>
<rect x="985.71" y="251.5" width="81.84" height="2.5" fill="#5ecbf2"/>
<rect x="1066.86" y="229" width="81.14" height="12.5" fill="#7b9fc5"/>
<rect x="1066.86" y="241.5" width="81.14" height="12.5" fill="#a7d03c"/>
<rect x="1066.86" y="241" width="81.14" height="1" fill="#6a96b8"/>
<rect x="1066.86" y="229" width="81.14" height="2.5" fill="#5ecbf2"/>
<rect x="1066.86" y="251.5" width="81.14" height="2.5" fill="#2a5a24"/>
<rect x="661" y="231.5" width="1" height="10" fill="#636190"/>
<rect x="661" y="241.5" width="1" height="10" fill="#636190"/>
<rect x="661" y="229" width="1" height="2.5" fill="#391242"/>
<rect x="661" y="251.5" width="1" height="2.5" fill="#391242"/>
<rect x="742" y="231.5" width="1" height="10" fill="#636190"/>
<rect x="742" y="241.5" width="1" height="10" fill="#636190"/>
<rect x="742" y="229" width="1" height="2.5" fill="#391242"/>
<rect x="742" y="251.5" width="1" height="2.5" fill="#391242"/>
<rect x="823" y="231.5" width="1" height="10" fill="#636190"/>
<rect x="823" y="241.5" width="1" height="10" fill="#636190"/>
<rect x="823" y="229" width="1" height="2.5" fill="#391242"/>
<rect x="823" y="251.5" width="1" height="2.5" fill="#391242"/>
<rect x="904" y="231.5" width="1" height="10" fill="#6583ac"/>
<rect x="904" y="241.5" width="1" height="10" fill="#6583ac"/>
<rect x="904" y="229" width="1" height="2.5" fill="#3e5076"/>
<rect x="904" y="251.5" width="1" height="2.5" fill="#3e5076"/>
<rect x="985" y="231.5" width="1" height="10" fill="#67a5c8"/>
<rect x="985" y="241.5" width="1" height="10" fill="#67a5c8"/>
<rect x="985" y="229" width="1" height="2.5" fill="#428ea9"/>
<rect x="985" y="251.5" width="1" height="2.5" fill="#428ea9"/>
<rect x="1066" y="231.5" width="1" height="10" fill="#67a5c8"/>
<rect x="1066" y="241.5" width="1" height="10" fill="#6a9d7b"/>
<rect x="1066" y="229" width="1" height="2.5" fill="#428ea9"/>
<rect x="1066" y="251.5" width="1" height="2.5" fill="#306661"/>
<rect x="747.29" y="254" width="81.84" height="12.5" fill="#e9e513"/>
<rect x="747.29" y="266.5" width="81.84" height="12.5" fill="#a7d03c"/>
<rect x="747.29" y="266" width="81.84" height="1" fill="#b3bc2a"/>
<rect x="747.29" y="254" width="81.84" height="2.5" fill="#1e6db8"/>
<rect x="747.29" y="276.5" width="81.84" height="2.5" fill="#1e6db8"/>
<rect x="828.43" y="254" width="81.84" height="12.5" fill="#e9e513"/>
<rect x="828.43" y="266.5" width="81.84" height="12.5" fill="#c9da32"/>
<rect x="828.43" y="266" width="81.84" height="1" fill="#b3bc2a"/>
<rect x="828.43" y="254" width="81.84" height="2.5" fill="#1e6db8"/>
<rect x="828.43" y="276.5" width="81.84" height="2.5" fill="#1e6db8"/>
<rect x="909.57" y="254" width="81.84" height="12.5" fill="#a7d03c"/>
<rect x="909.57" y="266.5" width="81.84" height="12.5" fill="#c9da32"/>
<rect x="909.57" y="266" width="81.84" height="1" fill="#82ac49"/>
<rect x="909.57" y="254" width="81.84" height="2.5" fill="#1e6db8"/>
<rect x="909.57" y="276.5" width="81.84" height="2.5" fill="#1e6db8"/>
<rect x="990.71" y="254" width="81.84" height="12.5" fill="#c9da32"/>
<rect x="990.71" y="266.5" width="81.84" height="12.5" fill="#c9da32"/>
<rect x="990.71" y="266" width="81.84" height="1" fill="#9db12b"/>
<rect x="990.71" y="254" width="81.84" height="2.5" fill="#2a5a24"/>
<rect x="990.71" y="276.5" width="81.84" height="2.5" fill="#2a5a24"/>
<rect x="1071.86" y="254" width="81.14" height="12.5" fill="#c9da32"/>
<rect x="1071.86" y="266.5" width="81.14" height="12.5" fill="#a7d03c"/>
<rect x="1071.86" y="266" width="81.14" height="1" fill="#9db12b"/>
<rect x="1071.86" y="254" width="81.14" height="2.5" fill="#2a5a24"/>
<rect x="1071.86" y="276.5" width="81.14" height="2.5" fill="#2a5a24"/>
<rect x="828" y="256.5" width="1" height="10" fill="#8ca750"/>
<rect x="828" y="266.5" width="1" height="10" fill="#719f64"/>
<rect x="828" y="254" width="1" height="2.5" fill="#154c81"/>
<rect x="828" y="276.5" width="1" height="2.5" fill="#154c81"/>
<rect x="909" y="256.5" width="1" height="10" fill="#79a15c"/>
<rect x="909" y="266.5" width="1" height="10" fill="#7aa161"/>
<rect x="909" y="254" width="1" height="2.5" fill="#154c81"/>
<rect x="909" y="276.5" width="1" height="2.5" fill="#154c81"/>
<rect x="990" y="256.5" width="1" height="10" fill="#739b48"/>
<rect x="990" y="266.5" width="1" height="10" fill="#7c9e45"/>
<rect x="990" y="254" width="1" height="2.5" fill="#19464d"/>
<rect x="990" y="276.5" width="1" height="2.5" fill="#19464d"/>
<rect x="1071" y="256.5" width="1" height="10" fill="#7f9a29"/>
<rect x="1071" y="266.5" width="1" height="10" fill="#75972c"/>
<rect x="1071" y="254" width="1" height="2.5" fill="#1d3f19"/>
<rect x="1071" y="276.5" width="1" height="2.5" fill="#1d3f19"/>
<rect x="752.29" y="279" width="81.84" height="12.5" fill="#a7d03c"/>
<rect x="752.29" y="291.5" width="81.84" height="12.5" fill="#c9da32"/>
<rect x="752.29" y="291" width="81.84" height="1" fill="#82ac49"/>
<rect x="752.29" y="279" width="81.84" height="2.5" fill="#1e6db8"/>
<rect x="752.29" y="301.5" width="81.84" height="2.5" fill="#1e6db8"/>
<rect x="833.43" y="279" width="81.84" height="12.5" fill="#a7d03c"/>
<rect x="833.43" y="291.5" width="81.84" height="12.5" fill="#c9da32"/>
<rect x="833.43" y="291" width="81.84" height="1" fill="#82ac49"/>
<rect x="833.43" y="279" width="81.84" height="2.5" fill="#1e6db8"/>
<rect x="833.43" y="301.5" width="81.84" height="2.5" fill="#1e6db8"/>
<rect x="914.57" y="279" width="81.84" height="12.5" fill="#7b9fc5"/>
<rect x="914.57" y="291.5" width="81.84" height="12.5" fill="#7b9fc5"/>
<rect x="914.57" y="291" width="81.84" height="1" fill="#6188af"/>
<rect x="914.57" y="279" width="81.84" height="2.5" fill="#1e6db8"/>
<rect x="914.57" y="301.5" width="81.84" height="2.5" fill="#1e6db8"/>
<rect x="995.71" y="279" width="81.84" height="12.5" fill="#a7d03c"/>
<rect x="995.71" y="291.5" width="81.84" height="12.5" fill="#a7d03c"/>
<rect x="995.71" y="291" width="81.84" height="1" fill="#84aa32"/>
<rect x="995.71" y="279" width="81.84" height="2.5" fill="#2a5a24"/>
<rect x="995.71" y="301.5" width="81.84" height="2.5" fill="#2a5a24"/>
<rect x="1076.86" y="279" width="81.14" height="12.5" fill="#a7d03c"/>
<rect x="1076.86" y="291.5" width="81.14" height="12.5" fill="#a7d03c"/>
<rect x="1076.86" y="291" width="81.14" height="1" fill="#84aa32"/>
<rect x="1076.86" y="279" width="81.14" height="2.5" fill="#2a5a24"/>
<rect x="1076.86" y="301.5" width="81.14" height="2.5" fill="#2a5a24"/>
<rect x="833" y="281.5" width="1" height="10" fill="#679c67"/>
<rect x="833" y="291.5" width="1" height="10" fill="#7aa161"/>
<rect x="833" y="279" width="1" height="2.5" fill="#154c81"/>
<rect x="833" y="301.5" width="1" height="2.5" fill="#154c81"/>
<rect x="914" y="281.5" width="1" height="10" fill="#5b8f8c"/>
<rect x="914" y="291.5" width="1" height="10" fill="#65918a"/>
<rect x="914" y="279" width="1" height="2.5" fill="#154c81"/>
<rect x="914" y="301.5" width="1" height="2.5" fill="#154c81"/>
<rect x="995" y="281.5" width="1" height="10" fill="#5d8b70"/>
<rect x="995" y="291.5" width="1" height="10" fill="#5d8b70"/>
<rect x="995" y="279" width="1" height="2.5" fill="#19464d"/>
<rect x="995" y="301.5" width="1" height="2.5" fill="#19464d"/>
<rect x="1076" y="281.5" width="1" height="10" fill="#6c952f"/>
<rect x="1076" y="291.5" width="1" height="10" fill="#6c952f"/>
<rect x="1076" y="279" width="1" height="2.5" fill="#1d3f19"/>
<rect x="1076" y="301.5" width="1" height="2.5" fill="#1d3f19"/>
<rect x="595" y="304" width="81.84" height="12.5" fill="#c9da32"/>
<rect x="595" y="316.5" width="81.84" height="12.5" fill="#c9da32"/>
<rect x="595" y="316" width="81.84" height="1" fill="#97ca4c"/>
<rect x="595" y="304" width="81.84" height="2.5" fill="#00ffff"/>
<rect x="595" y="326.5" width="81.84" height="2.5" fill="#00ffff"/>
<rect x="676.14" y="304" width="81.84" height="12.5" fill="#c9da32"/>
<rect x="676.14" y="316.5" width="81.84" height="12.5" fill="#c9da32"/>
<rect x="676.14" y="316" width="81.84" height="1" fill="#97ca4c"/>
<rect x="676.14" y="304" width="81.84" height="2.5" fill="#00ffff"/>
<rect x="676.14" y="326.5" width="81.84" height="2.5" fill="#00ffff"/>
<rect x="757.29" y="304" width="81.84" height="12.5" fill="#7b9fc5"/>
<rect x="757.29" y="316.5" width="81.84" height="12.5" fill="#7b9fc5"/>
<rect x="757.29" y="316" width="81.84" height="1" fill="#6188af"/>
<rect x="757.29" y="304" width="81.84" height="2.5" fill="#1e6db8"/>
<rect x="757.29" y="326.5" width="81.84" height="2.5" fill="#1e6db8"/>
<rect x="838.43" y="304" width="81.84" height="12.5" fill="#7b9fc5"/>
<rect x="838.43" y="316.5" width="81.84" height="12.5" fill="#7b9fc5"/>
<rect x="838.43" y="316" width="81.84" height="1" fill="#6188af"/>
<rect x="838.43" y="304" width="81.84" height="2.5" fill="#1e6db8"/>
<rect x="838.43" y="326.5" width="81.84" height="2.5" fill="#1e6db8"/>
<rect x="919.57" y="304" width="81.84" height="12.5" fill="#7b9fc5"/>
<rect x="919.57" y="316.5" width="81.84" height="12.5" fill="#7b9fc5"/>
<rect x="919.57" y="316" width="81.84" height="1" fill="#6188af"/>
<rect x="919.57" y="304" width="81.84" height="2.5" fill="#1e6db8"/>
<rect x="919.57" y="326.5" width="81.84" height="2.5" fill="#1e6db8"/>
<rect x="1000.71" y="304" width="81.84" height="12.5" fill="#a7d03c"/>
<rect x="1000.71" y="316.5" width="81.84" height="12.5" fill="#7b9fc5"/>
<rect x="1000.71" y="316" width="81.84" height="1" fill="#84aa32"/>
<rect x="1000.71" y="304" width="81.84" height="2.5" fill="#2a5a24"/>
<rect x="1000.71" y="326.5" width="81.84" height="2.5" fill="#2a5a24"/>
<rect x="1081.86" y="304" width="81.14" height="12.5" fill="#7b9fc5"/>
<rect x="1081.86" y="316.5" width="81.14" height="12.5" fill="#7b9fc5"/>
<rect x="1081.86" y="316" width="81.14" height="1" fill="#638599"/>
<rect x="1081.86" y="304" width="81.14" height="2.5" fill="#2a5a24"/>
<rect x="1081.86" y="326.5" width="81.14" height="2.5" fill="#2a5a24"/>
<rect x="676" y="306.5" width="1" height="10" fill="#6fd97c"/>
<rect x="676" y="316.5" width="1" height="10" fill="#6fd97c"/>
<rect x="676" y="304" width="1" height="2.5" fill="#00b2b2"/>
<rect x="676" y="326.5" width="1" height="2.5" fill="#00b2b2"/>
<rect x="757" y="306.5" width="1" height="10" fill="#5fad98"/>
<rect x="757" y="316.5" width="1" height="10" fill="#5fad98"/>
<rect x="757" y="304" width="1" height="2.5" fill="#0a7f9a"/>
<rect x="757" y="326.5" width="1" height="2.5" fill="#0a7f9a"/>
<rect x="838" y="306.5" width="1" height="10" fill="#4f81b2"/>
<rect x="838" y="316.5" width="1" height="10" fill="#4f81b2"/>
<rect x="838" y="304" width="1" height="2.5" fill="#154c81"/>
<rect x="838" y="326.5" width="1" height="2.5" fill="#154c81"/>
<rect x="919" y="306.5" width="1" height="10" fill="#4f81b2"/>
<rect x="919" y="316.5" width="1" height="10" fill="#4f81b2"/>
<rect x="919" y="304" width="1" height="2.5" fill="#154c81"/>
<rect x="919" y="326.5" width="1" height="2.5" fill="#154c81"/>
<rect x="1000" y="306.5" width="1" height="10" fill="#5d8b70"/>
<rect x="1000" y="316.5" width="1" height="10" fill="#517d96"/>
<rect x="1000" y="304" width="1" height="2.5" fill="#19464d"/>
<rect x="1000" y="326.5" width="1" height="2.5" fill="#19464d"/>
<rect x="1081" y="306.5" width="1" height="10" fill="#608754"/>
<rect x="1081" y="316.5" width="1" height="10" fill="#547a7a"/>
<rect x="1081" y="304" width="1" height="2.5" fill="#1d3f19"/>
<rect x="1081" y="326.5" width="1" height="2.5" fill="#1d3f19"/>
<rect x="600" y="329" width="81.84" height="12.5" fill="#c9da32"/>
<rect x="600" y="341.5" width="81.84" height="12.5" fill="#c9da32"/>
<rect x="600" y="341" width="81.84" height="1" fill="#97ca4c"/>
<rect x="600" y="329" width="81.84" height="2.5" fill="#00ffff"/>
<rect x="600" y="351.5" width="81.84" height="2.5" fill="#00ffff"/>
<rect x="681.14" y="329" width="81.84" height="12.5" fill="#a7d03c"/>
<rect x="681.14" y="341.5" width="81.84" height="12.5" fill="#a7d03c"/>
<rect x="681.14" y="341" width="81.84" height="1" fill="#7dc253"/>
<rect x="681.14" y="329" width="81.84" height="2.5" fill="#00ffff"/>
<rect x="681.14" y="351.5" width="81.84" height="2.5" fill="#00ffff"/>
<rect x="762.29" y="329" width="81.84" height="12.5" fill="#7b9fc5"/>
<rect x="762.29" y="341.5" width="81.84" height="12.5" fill="#7b9fc5"/>
<rect x="762.29" y="341" width="81.84" height="1" fill="#6188af"/>
<rect x="762.29" y="329" width="81.84" height="2.5" fill="#1e6db8"/>
<rect x="762.29" y="351.5" width="81.84" height="2.5" fill="#1e6db8"/>
<rect x="843.43" y="329" width="81.84" height="12.5" fill="#7b9fc5"/>
<rect x="843.43" y="341.5" width="81.84" height="12.5" fill="#7b9fc5"/>
<rect x="843.43" y="341" width="81.84" height="1" fill="#6188af"/>
<rect x="843.43" y="329" width="81.84" height="2.5" fill="#1e6db8"/>
<rect x="843.43" y="351.5" width="81.84" height="2.5" fill="#1e6db8"/>
<rect x="924.57" y="329" width="81.84" height="12.5" fill="#7b9fc5"/>
<rect x="924.57" y="341.5" width="81.84" height="12.5" fill="#7b9fc5"/>
<rect x="924.57" y="341" width="81.84" height="1" fill="#6188af"/>
<rect x="924.57" y="329" width="81.84" height="2.5" fill="#1e6db8"/>
<rect x="924.57" y="351.5" width="81.84" height="2.5" fill="#1e6db8"/>
<rect x="1005.71" y="329" width="81.84" height="12.5" fill="#7b9fc5"/>
<rect x="1005.71" y="341.5" width="81.84" height="12.5" fill="#7b9fc5"/>
<rect x="1005.71" y="341" width="81.84" height="1" fill="#638599"/>
<rect x="1005.71" y="329" width="81.84" height="2.5" fill="#2a5a24"/>
<rect x="1005.71" y="351.5" width="81.84" height="2.5" fill="#2a5a24"/>
<rect x="1086.86" y="329" width="81.14" height="12.5" fill="#7b9fc5"/>
<rect x="1086.86" y="341.5" width="81.14" height="12.5" fill="#7b9fc5"/>
<rect x="1086.86" y="341" width="81.14" height="1" fill="#638599"/>
<rect x="1086.86" y="329" width="81.14" height="2.5" fill="#2a5a24"/>
<rect x="1086.86" y="351.5" width="81.14" height="2.5" fill="#2a5a24"/>
<rect x="681" y="331.5" width="1" height="10" fill="#65d67f"/>
<rect x="681" y="341.5" width="1" height="10" fill="#65d67f"/>
<rect x="681" y="329" width="1" height="2.5" fill="#00b2b2"/>
<rect x="681" y="351.5" width="1" height="2.5" fill="#00b2b2"/>
<rect x="762" y="331.5" width="1" height="10" fill="#55aa9a"/>
<rect x="762" y="341.5" width="1" height="10" fill="#55aa9a"/>
<rect x="762" y="329" width="1" height="2.5" fill="#0a7f9a"/>
<rect x="762" y="351.5" width="1" height="2.5" fill="#0a7f9a"/>
<rect x="843" y="331.5" width="1" height="10" fill="#4f81b2"/>
<rect x="843" y="341.5" width="1" height="10" fill="#4f81b2"/>
<rect x="843" y="329" width="1" height="2.5" fill="#154c81"/>
<rect x="843" y="351.5" width="1" height="2.5" fill="#154c81"/>
<rect x="924" y="331.5" width="1" height="10" fill="#4f81b2"/>
<rect x="924" y="341.5" width="1" height="10" fill="#4f81b2"/>
<rect x="924" y="329" width="1" height="2.5" fill="#154c81"/>
<rect x="924" y="351.5" width="1" height="2.5" fill="#154c81"/>
<rect x="1005" y="331.5" width="1" height="10" fill="#517d96"/>
<rect x="1005" y="341.5" width="1" height="10" fill="#517d96"/>
<rect x="1005" y="329" width="1" height="2.5" fill="#19464d"/>
<rect x="1005" y="351.5" width="1" height="2.5" fill="#19464d"/>
<rect x="1086" y="331.5" width="1" height="10" fill="#547a7a"/>
<rect x="1086" y="341.5" width="1" height="10" fill="#547a7a"/>
<rect x="1086" y="329" width="1" height="2.5" fill="#1d3f19"/>
<rect x="1086" y="351.5" width="1" height="2.5" fill="#1d3f19"/>
<rect x="605" y="354" width="81.84" height="12.5" fill="#a7d03c"/>
<rect x="605" y="366.5" width="81.84" height="12.5" fill="#a7d03c"/>
<rect x="605" y="366" width="81.84" height="1" fill="#7dc253"/>
<rect x="605" y="354" width="81.84" height="2.5" fill="#00ffff"/>
<rect x="605" y="376.5" width="81.84" height="2.5" fill="#00ffff"/>
<rect x="686.14" y="354" width="81.84" height="12.5" fill="#7b9fc5"/>
<rect x="686.14" y="366.5" width="81.84" height="12.5" fill="#7b9fc5"/>
<rect x="686.14" y="366" width="81.84" height="1" fill="#5c9eba"/>
<rect x="686.14" y="354" width="81.84" height="2.5" fill="#00ffff"/>
<rect x="686.14" y="376.5" width="81.84" height="2.5" fill="#00ffff"/>
<rect x="767.29" y="354" width="81.84" height="12.5" fill="#7b9fc5"/>
<rect x="767.29" y="366.5" width="81.84" height="12.5" fill="#c9da32"/>
<rect x="767.29" y="366" width="81.84" height="1" fill="#6188af"/>
<rect x="767.29" y="354" width="81.84" height="2.5" fill="#1e6db8"/>
<rect x="767.29" y="376.5" width="81.84" height="2.5" fill="#508a32"/>
<rect x="848.43" y="354" width="81.84" height="12.5" fill="#a7d03c"/>
<rect x="848.43" y="366.5" width="81.84" height="12.5" fill="#e9e513"/>
<rect x="848.43" y="366" width="81.84" height="1" fill="#89b134"/>
<rect x="848.43" y="354" width="81.84" height="2.5" fill="#508a32"/>
<rect x="848.43" y="376.5" width="81.84" height="2.5" fill="#508a32"/>
<rect x="929.57" y="354" width="81.84" height="12.5" fill="#c9da32"/>
<rect x="929.57" y="366.5" width="81.84" height="12.5" fill="#a7d03c"/>
<rect x="929.57" y="366" width="81.84" height="1" fill="#a3b82d"/>
<rect x="929.57" y="354" width="81.84" height="2.5" fill="#508a32"/>
<rect x="929.57" y="376.5" width="81.84" height="2.5" fill="#508a32"/>
<rect x="1010.71" y="354" width="81.84" height="12.5" fill="#7b9fc5"/>
<rect x="1010.71" y="366.5" width="81.84" height="12.5" fill="#7b9fc5"/>
<rect x="1010.71" y="366" width="81.84" height="1" fill="#638599"/>
<rect x="1010.71" y="354" width="81.84" height="2.5" fill="#2a5a24"/>
<rect x="1010.71" y="376.5" width="81.84" height="2.5" fill="#2a5a24"/>
<rect x="1091.86" y="354" width="81.14" height="12.5" fill="#7b9fc5"/>
<rect x="1091.86" y="366.5" width="81.14" height="12.5" fill="#7b9fc5"/>
<rect x="1091.86" y="366" width="81.14" height="1" fill="#638599"/>
<rect x="1091.86" y="354" width="81.14" height="2.5" fill="#2a5a24"/>
<rect x="1091.86" y="376.5" width="81.14" height="2.5" fill="#2a5a24"/>
<rect x="686" y="356.5" width="1" height="10" fill="#50c6a7"/>
<rect x="686" y="366.5" width="1" height="10" fill="#50c6a7"/>
<rect x="686" y="354" width="1" height="2.5" fill="#00b2b2"/>
<rect x="686" y="376.5" width="1" height="2.5" fill="#00b2b2"/>
<rect x="767" y="356.5" width="1" height="10" fill="#499dc0"/>
<rect x="767" y="366.5" width="1" height="10" fill="#68b27e"/>
<rect x="767" y="354" width="1" height="2.5" fill="#0a7f9a"/>
<rect x="767" y="376.5" width="1" height="2.5" fill="#1c896a"/>
<rect x="848" y="356.5" width="1" height="10" fill="#659473"/>
<rect x="848" y="366.5" width="1" height="10" fill="#96b026"/>
<rect x="848" y="354" width="1" height="2.5" fill="#265752"/>
<rect x="848" y="376.5" width="1" height="2.5" fill="#386123"/>
<rect x="929" y="356.5" width="1" height="10" fill="#84aa31"/>
<rect x="929" y="366.5" width="1" height="10" fill="#8cac29"/>
<rect x="929" y="354" width="1" height="2.5" fill="#386123"/>
<rect x="929" y="376.5" width="1" height="2.5" fill="#386123"/>
<rect x="1010" y="356.5" width="1" height="10" fill="#709355"/>
<rect x="1010" y="366.5" width="1" height="10" fill="#679157"/>
<rect x="1010" y="354" width="1" height="2.5" fill="#2b501e"/>
<rect x="1010" y="376.5" width="1" height="2.5" fill="#2b501e"/>
<rect x="1091" y="356.5" width="1" height="10" fill="#547a7a"/>
<rect x="1091" y="366.5" width="1" height="10" fill="#547a7a"/>
<rect x="1091" y="354" width="1" height="2.5" fill="#1d3f19"/>
<rect x="1091" y="376.5" width="1" height="2.5" fill="#1d3f19"/>
<rect x="610" y="379" width="81.84" height="12.5" fill="#7b9fc5"/>
<rect x="610" y="391.5" width="81.84" height="12.5" fill="#7b9fc5"/>
<rect x="610" y="391" width="81.84" height="1" fill="#5c9eba"/>
<rect x="610" y="379" width="81.84" height="2.5" fill="#00ffff"/>
<rect x="610" y="401.5" width="81.84" height="2.5" fill="#00ffff"/>
<rect x="691.14" y="379" width="81.84" height="12.5" fill="#7b9fc5"/>
<rect x="691.14" y="391.5" width="81.84" height="12.5" fill="#7b9fc5"/>
<rect x="691.14" y="391" width="81.84" height="1" fill="#5c9eba"/>
<rect x="691.14" y="379" width="81.84" height="2.5" fill="#00ffff"/>
<rect x="691.14" y="401.5" width="81.84" height="2.5" fill="#00ffff"/>
<rect x="772.29" y="379" width="81.84" height="12.5" fill="#7b9fc5"/>
<rect x="772.29" y="391.5" width="81.84" height="12.5" fill="#7b9fc5"/>
<rect x="772.29" y="391" width="81.84" height="1" fill="#5c9eba"/>
<rect x="772.29" y="379" width="81.84" height="2.5" fill="#00ffff"/>
<rect x="772.29" y="401.5" width="81.84" height="2.5" fill="#00ffff"/>
<rect x="853.43" y="379" width="81.84" height="12.5" fill="#a7d03c"/>
<rect x="853.43" y="391.5" width="81.84" height="12.5" fill="#a7d03c"/>
<rect x="853.43" y="391" width="81.84" height="1" fill="#89b134"/>
<rect x="853.43" y="379" width="81.84" height="2.5" fill="#508a32"/>
<rect x="853.43" y="401.5" width="81.84" height="2.5" fill="#508a32"/>
<rect x="934.57" y="379" width="81.84" height="12.5" fill="#a7d03c"/>
<rect x="934.57" y="391.5" width="81.84" height="12.5" fill="#a7d03c"/>
<rect x="934.57" y="391" width="81.84" height="1" fill="#89b134"/>
<rect x="934.57" y="379" width="81.84" height="2.5" fill="#508a32"/>
<rect x="934.57" y="401.5" width="81.84" height="2.5" fill="#508a32"/>
<rect x="1015.71" y="379" width="81.84" height="12.5" fill="#7b9fc5"/>
<rect x="1015.71" y="391.5" width="81.84" height="12.5" fill="#7b9fc5"/>
<rect x="1015.71" y="391" width="81.84" height="1" fill="#638599"/>
<rect x="1015.71" y="379" width="81.84" height="2.5" fill="#2a5a24"/>
<rect x="1015.71" y="401.5" width="81.84" height="2.5" fill="#2a5a24"/>
<rect x="1096.86" y="379" width="81.14" height="12.5" fill="#7b9fc5"/>
<rect x="1096.86" y="391.5" width="81.14" height="12.5" fill="#7b9fc5"/>
<rect x="1096.86" y="391" width="81.14" height="1" fill="#638599"/>
<rect x="1096.86" y="379" width="81.14" height="2.5" fill="#2a5a24"/>
<rect x="1096.86" y="401.5" width="81.14" height="2.5" fill="#2a5a24"/>
<rect x="691" y="381.5" width="1" height="10" fill="#44b8cd"/>
<rect x="691" y="391.5" width="1" height="10" fill="#44b8cd"/>
<rect x="691" y="379" width="1" height="2.5" fill="#00b2b2"/>
<rect x="691" y="401.5" width="1" height="2.5" fill="#00b2b2"/>
<rect x="772" y="381.5" width="1" height="10" fill="#44b8cd"/>
<rect x="772" y="391.5" width="1" height="10" fill="#44b8cd"/>
<rect x="772" y="379" width="1" height="2.5" fill="#00b2b2"/>
<rect x="772" y="401.5" width="1" height="2.5" fill="#00b2b2"/>
<rect x="853" y="381.5" width="1" height="10" fill="#5fb080"/>
<rect x="853" y="391.5" width="1" height="10" fill="#5fb080"/>
<rect x="853" y="379" width="1" height="2.5" fill="#1c896a"/>
<rect x="853" y="401.5" width="1" height="2.5" fill="#1c896a"/>
<rect x="934" y="381.5" width="1" height="10" fill="#7aa734"/>
<rect x="934" y="391.5" width="1" height="10" fill="#7aa734"/>
<rect x="934" y="379" width="1" height="2.5" fill="#386123"/>
<rect x="934" y="401.5" width="1" height="2.5" fill="#386123"/>
<rect x="1015" y="381.5" width="1" height="10" fill="#679157"/>
<rect x="1015" y="391.5" width="1" height="10" fill="#679157"/>
<rect x="1015" y="379" width="1" height="2.5" fill="#2b501e"/>
<rect x="1015" y="401.5" width="1" height="2.5" fill="#2b501e"/>
<rect x="1096" y="381.5" width="1" height="10" fill="#547a7a"/>
<rect x="1096" y="391.5" width="1" height="10" fill="#547a7a"/>
<rect x="1096" y="379" width="1" height="2.5" fill="#1d3f19"/>
<rect x="1096" y="401.5" width="1" height="2.5" fill="#1d3f19"/>
<rect x="615" y="404" width="81.84" height="12.5" fill="#7b9fc5"/>
<rect x="615" y="416.5" width="81.84" height="12.5" fill="#7b9fc5"/>
<rect x="615" y="416" width="81.84" height="1" fill="#5c9eba"/>
<rect x="615" y="404" width="81.84" height="2.5" fill="#00ffff"/>
<rect x="615" y="426.5" width="81.84" height="2.5" fill="#00ffff"/>
<rect x="696.14" y="404" width="81.84" height="12.5" fill="#7b9fc5"/>
<rect x="696.14" y="416.5" width="81.84" height="12.5" fill="#7b9fc5"/>
<rect x="696.14" y="416" width="81.84" height="1" fill="#5c9eba"/>
<rect x="696.14" y="404" width="81.84" height="2.5" fill="#00ffff"/>
<rect x="696.14" y="426.5" width="81.84" height="2.5" fill="#00ffff"/>
<rect x="777.29" y="404" width="81.84" height="12.5" fill="#7b9fc5"/>
<rect x="777.29" y="416.5" width="81.84" height="12.5" fill="#7b9fc5"/>
<rect x="777.29" y="416" width="81.84" height="1" fill="#5c9eba"/>
<rect x="777.29" y="404" width="81.84" height="2.5" fill="#00ffff"/>
<rect x="777.29" y="426.5" width="81.84" height="2.5" fill="#00ffff"/>
<rect x="858.43" y="404" width="81.84" height="12.5" fill="#a7d03c"/>
<rect x="858.43" y="416.5" width="81.84" height="12.5" fill="#7b9fc5"/>
<rect x="858.43" y="416" width="81.84" height="1" fill="#89b134"/>
<rect x="858.43" y="404" width="81.84" height="2.5" fill="#508a32"/>
<rect x="858.43" y="426.5" width="81.84" height="2.5" fill="#508a32"/>
<rect x="939.57" y="404" width="81.84" height="12.5" fill="#7b9fc5"/>
<rect x="939.57" y="416.5" width="81.84" height="12.5" fill="#7b9fc5"/>
<rect x="939.57" y="416" width="81.84" height="1" fill="#688c9b"/>
<rect x="939.57" y="404" width="81.84" height="2.5" fill="#508a32"/>
<rect x="939.57" y="426.5" width="81.84" height="2.5" fill="#508a32"/>
<rect x="1020.71" y="404" width="81.84" height="12.5" fill="#c9da32"/>
<rect x="1020.71" y="416.5" width="81.84" height="12.5" fill="#a7d03c"/>
<rect x="1020.71" y="416" width="81.84" height="1" fill="#b2bc2e"/>
<rect x="1020.71" y="404" width="81.84" height="2.5" fill="#b4a63a"/>
<rect x="1020.71" y="426.5" width="81.84" height="2.5" fill="#b4a63a"/>
<rect x="1101.86" y="404" width="81.14" height="12.5" fill="#c9da32"/>
<rect x="1101.86" y="416.5" width="81.14" height="12.5" fill="#a7d03c"/>
<rect x="1101.86" y="416" width="81.14" height="1" fill="#b2bc2e"/>
<rect x="1101.86" y="404" width="81.14" height="2.5" fill="#b4a63a"/>
<rect x="1101.86" y="426.5" width="81.14" height="2.5" fill="#b4a63a"/>
<rect x="696" y="406.5" width="1" height="10" fill="#44b8cd"/>
<rect x="696" y="416.5" width="1" height="10" fill="#44b8cd"/>
<rect x="696" y="404" width="1" height="2.5" fill="#00b2b2"/>
<rect x="696" y="426.5" width="1" height="2.5" fill="#00b2b2"/>
<rect x="777" y="406.5" width="1" height="10" fill="#44b8cd"/>
<rect x="777" y="416.5" width="1" height="10" fill="#44b8cd"/>
<rect x="777" y="404" width="1" height="2.5" fill="#00b2b2"/>
<rect x="777" y="426.5" width="1" height="2.5" fill="#00b2b2"/>
<rect x="858" y="406.5" width="1" height="10" fill="#5fb080"/>
<rect x="858" y="416.5" width="1" height="10" fill="#53a2a6"/>
<rect x="858" y="404" width="1" height="2.5" fill="#1c896a"/>
<rect x="858" y="426.5" width="1" height="2.5" fill="#1c896a"/>
<rect x="939" y="406.5" width="1" height="10" fill="#6e9a59"/>
<rect x="939" y="416.5" width="1" height="10" fill="#628c7f"/>
<rect x="939" y="404" width="1" height="2.5" fill="#386123"/>
<rect x="939" y="426.5" width="1" height="2.5" fill="#386123"/>
<rect x="1020" y="406.5" width="1" height="10" fill="#8aa159"/>
<rect x="1020" y="416.5" width="1" height="10" fill="#819f5b"/>
<rect x="1020" y="404" width="1" height="2.5" fill="#5b6a26"/>
<rect x="1020" y="426.5" width="1" height="2.5" fill="#5b6a26"/>
<rect x="1101" y="406.5" width="1" height="10" fill="#b3b732"/>
<rect x="1101" y="416.5" width="1" height="10" fill="#a0b137"/>
<rect x="1101" y="404" width="1" height="2.5" fill="#7e7429"/>
<rect x="1101" y="426.5" width="1" height="2.5" fill="#7e7429"/>
<rect x="620" y="429" width="81.84" height="12.5" fill="#c9da32"/>
<rect x="620" y="441.5" width="81.84" height="12.5" fill="#c9da32"/>
<rect x="620" y="441" width="81.84" height="1" fill="#bcc938"/>
<rect x="620" y="429" width="81.84" height="2.5" fill="#fafa7a"/>
<rect x="620" y="451.5" width="81.84" height="2.5" fill="#fafa7a"/>
<rect x="701.14" y="429" width="81.84" height="12.5" fill="#c9da32"/>
<rect x="701.14" y="441.5" width="81.84" height="12.5" fill="#a7d03c"/>
<rect x="701.14" y="441" width="81.84" height="1" fill="#bcc938"/>
<rect x="701.14" y="429" width="81.84" height="2.5" fill="#fafa7a"/>
<rect x="701.14" y="451.5" width="81.84" height="2.5" fill="#fafa7a"/>
<rect x="782.29" y="429" width="81.84" height="12.5" fill="#7b9fc5"/>
<rect x="782.29" y="441.5" width="81.84" height="12.5" fill="#c9da32"/>
<rect x="782.29" y="441" width="81.84" height="1" fill="#5c9eba"/>
<rect x="782.29" y="429" width="81.84" height="2.5" fill="#00ffff"/>
<rect x="782.29" y="451.5" width="81.84" height="2.5" fill="#fafa7a"/>
<rect x="863.43" y="429" width="81.84" height="12.5" fill="#7b9fc5"/>
<rect x="863.43" y="441.5" width="81.84" height="12.5" fill="#7b9fc5"/>
<rect x="863.43" y="441" width="81.84" height="1" fill="#688c9b"/>
<rect x="863.43" y="429" width="81.84" height="2.5" fill="#508a32"/>
<rect x="863.43" y="451.5" width="81.84" height="2.5" fill="#508a32"/>
<rect x="944.57" y="429" width="81.84" height="12.5" fill="#7b9fc5"/>
<rect x="944.57" y="441.5" width="81.84" height="12.5" fill="#7b9fc5"/>
<rect x="944.57" y="441" width="81.84" height="1" fill="#688c9b"/>
<rect x="944.57" y="429" width="81.84" height="2.5" fill="#508a32"/>
<rect x="944.57" y="451.5" width="81.84" height="2.5" fill="#508a32"/>
<rect x="1025.71" y="429" width="81.84" height="12.5" fill="#a7d03c"/>
<rect x="1025.71" y="441.5" width="81.84" height="12.5" fill="#a7d03c"/>
<rect x="1025.71" y="441" width="81.84" height="1" fill="#98b536"/>
<rect x="1025.71" y="429" width="81.84" height="2.5" fill="#b4a63a"/>
<rect x="1025.71" y="451.5" width="81.84" height="2.5" fill="#b4a63a"/>
<rect x="1106.86" y="429" width="81.14" height="12.5" fill="#a7d03c"/>
<rect x="1106.86" y="441.5" width="81.14" height="12.5" fill="#a7d03c"/>
<rect x="1106.86" y="441" width="81.14" height="1" fill="#98b536"/>
<rect x="1106.86" y="429" width="81.14" height="2.5" fill="#b4a63a"/>
<rect x="1106.86" y="451.5" width="81.14" height="2.5" fill="#b4a63a"/>
<rect x="701" y="431.5" width="1" height="10" fill="#ced74a"/>
<rect x="701" y="441.5" width="1" height="10" fill="#c4d44d"/>
<rect x="701" y="429" width="1" height="2.5" fill="#afaf55"/>
<rect x="701" y="451.5" width="1" height="2.5" fill="#afaf55"/>
<rect x="782" y="431.5" width="1" height="10" fill="#89c78c"/>
<rect x="782" y="441.5" width="1" height="10" fill="#c4d44d"/>
<rect x="782" y="429" width="1" height="2.5" fill="#58b084"/>
<rect x="782" y="451.5" width="1" height="2.5" fill="#afaf55"/>
<rect x="863" y="431.5" width="1" height="10" fill="#53a2a6"/>
<rect x="863" y="441.5" width="1" height="10" fill="#98b165"/>
<rect x="863" y="429" width="1" height="2.5" fill="#1c896a"/>
<rect x="863" y="451.5" width="1" height="2.5" fill="#73883c"/>
<rect x="944" y="431.5" width="1" height="10" fill="#628c7f"/>
<rect x="944" y="441.5" width="1" height="10" fill="#628c7f"/>
<rect x="944" y="429" width="1" height="2.5" fill="#386123"/>
<rect x="944" y="451.5" width="1" height="2.5" fill="#386123"/>
<rect x="1025" y="431.5" width="1" height="10" fill="#819f5b"/>
<rect x="1025" y="441.5" width="1" height="10" fill="#819f5b"/>
<rect x="1025" y="429" width="1" height="2.5" fill="#5b6a26"/>
<rect x="1025" y="451.5" width="1" height="2.5" fill="#5b6a26"/>
<rect x="1106" y="431.5" width="1" height="10" fill="#a0b137"/>
<rect x="1106" y="441.5" width="1" height="10" fill="#a0b137"/>
<rect x="1106" y="429" width="1" height="2.5" fill="#7e7429"/>
<rect x="1106" y="451.5" width="1" height="2.5" fill="#7e7429"/>
<rect x="625" y="454" width="81.84" height="12.5" fill="#a7d03c"/>
<rect x="625" y="466.5" width="81.84" height="12.5" fill="#c9da32"/>
<rect x="625" y="466" width="81.84" height="1" fill="#a3c23f"/>
<rect x="625" y="454" width="81.84" height="2.5" fill="#fafa7a"/>
<rect x="625" y="476.5" width="81.84" height="2.5" fill="#fafa7a"/>
<rect x="706.14" y="454" width="81.84" height="12.5" fill="#c9da32"/>
<rect x="706.14" y="466.5" width="81.84" height="12.5" fill="#c9da32"/>
<rect x="706.14" y="466" width="81.84" height="1" fill="#bcc938"/>
<rect x="706.14" y="454" width="81.84" height="2.5" fill="#fafa7a"/>
<rect x="706.14" y="476.5" width="81.84" height="2.5" fill="#fafa7a"/>
<rect x="787.29" y="454" width="81.84" height="12.5" fill="#c9da32"/>
<rect x="787.29" y="466.5" width="81.84" height="12.5" fill="#7b9fc5"/>
<rect x="787.29" y="466" width="81.84" height="1" fill="#bcc938"/>
<rect x="787.29" y="454" width="81.84" height="2.5" fill="#fafa7a"/>
<rect x="787.29" y="476.5" width="81.84" height="2.5" fill="#fafa7a"/>
<rect x="868.43" y="454" width="81.84" height="12.5" fill="#7b9fc5"/>
<rect x="868.43" y="466.5" width="81.84" height="12.5" fill="#7b9fc5"/>
<rect x="868.43" y="466" width="81.84" height="1" fill="#688c9b"/>
<rect x="868.43" y="454" width="81.84" height="2.5" fill="#508a32"/>
<rect x="868.43" y="476.5" width="81.84" height="2.5" fill="#508a32"/>
<rect x="949.57" y="454" width="81.84" height="12.5" fill="#7b9fc5"/>
<rect x="949.57" y="466.5" width="81.84" height="12.5" fill="#7b9fc5"/>
<rect x="949.57" y="466" width="81.84" height="1" fill="#688c9b"/>
<rect x="949.57" y="454" width="81.84" height="2.5" fill="#508a32"/>
<rect x="949.57" y="476.5" width="81.84" height="2.5" fill="#508a32"/>
<rect x="1030.71" y="454" width="81.84" height="12.5" fill="#a7d03c"/>
<rect x="1030.71" y="466.5" width="81.84" height="12.5" fill="#a7d03c"/>
<rect x="1030.71" y="466" width="81.84" height="1" fill="#98b536"/>
<rect x="1030.71" y="454" width="81.84" height="2.5" fill="#b4a63a"/>
<rect x="1030.71" y="476.5" width="81.84" height="2.5" fill="#b4a63a"/>
<rect x="1111.86" y="454" width="81.14" height="12.5" fill="#7b9fc5"/>
<rect x="1111.86" y="466.5" width="81.14" height="12.5" fill="#7b9fc5"/>
<rect x="1111.86" y="466" width="81.14" height="1" fill="#77909c"/>
<rect x="1111.86" y="454" width="81.14" height="2.5" fill="#b4a63a"/>
<rect x="1111.86" y="476.5" width="81.14" height="2.5" fill="#b4a63a"/>
<rect x="706" y="456.5" width="1" height="10" fill="#c4d44d"/>
<rect x="706" y="466.5" width="1" height="10" fill="#ced74a"/>
<rect x="706" y="454" width="1" height="2.5" fill="#afaf55"/>
<rect x="706" y="476.5" width="1" height="2.5" fill="#afaf55"/>
<rect x="787" y="456.5" width="1" height="10" fill="#ced74a"/>
<rect x="787" y="466.5" width="1" height="10" fill="#b8c673"/>
<rect x="787" y="454" width="1" height="2.5" fill="#afaf55"/>
<rect x="787" y="476.5" width="1" height="2.5" fill="#afaf55"/>
<rect x="868" y="456.5" width="1" height="10" fill="#98b165"/>
<rect x="868" y="466.5" width="1" height="10" fill="#82a18d"/>
<rect x="868" y="454" width="1" height="2.5" fill="#73883c"/>
<rect x="868" y="476.5" width="1" height="2.5" fill="#73883c"/>
<rect x="949" y="456.5" width="1" height="10" fill="#628c7f"/>
<rect x="949" y="466.5" width="1" height="10" fill="#628c7f"/>
<rect x="949" y="454" width="1" height="2.5" fill="#386123"/>
<rect x="949" y="476.5" width="1" height="2.5" fill="#386123"/>
<rect x="1030" y="456.5" width="1" height="10" fill="#819f5b"/>
<rect x="1030" y="466.5" width="1" height="10" fill="#819f5b"/>
<rect x="1030" y="454" width="1" height="2.5" fill="#5b6a26"/>
<rect x="1030" y="476.5" width="1" height="2.5" fill="#5b6a26"/>
<rect x="1111" y="456.5" width="1" height="10" fill="#94a45c"/>
<rect x="1111" y="466.5" width="1" height="10" fill="#94a45c"/>
<rect x="1111" y="454" width="1" height="2.5" fill="#7e7429"/>
<rect x="1111" y="476.5" width="1" height="2.5" fill="#7e7429"/>
<rect x="630" y="479" width="81.84" height="12.5" fill="#7b9fc5"/>
<rect x="630" y="491.5" width="81.84" height="12.5" fill="#7b9fc5"/>
<rect x="630" y="491" width="81.84" height="1" fill="#829da6"/>
<rect x="630" y="479" width="81.84" height="2.5" fill="#fafa7a"/>
<rect x="630" y="501.5" width="81.84" height="2.5" fill="#fafa7a"/>
<rect x="711.14" y="479" width="81.84" height="12.5" fill="#7b9fc5"/>
<rect x="711.14" y="491.5" width="81.84" height="12.5" fill="#7b9fc5"/>
<rect x="711.14" y="491" width="81.84" height="1" fill="#829da6"/>
<rect x="711.14" y="479" width="81.84" height="2.5" fill="#fafa7a"/>
<rect x="711.14" y="501.5" width="81.84" height="2.5" fill="#fafa7a"/>
<rect x="792.29" y="479" width="81.84" height="12.5" fill="#7b9fc5"/>
<rect x="792.29" y="491.5" width="81.84" height="12.5" fill="#7b9fc5"/>
<rect x="792.29" y="491" width="81.84" height="1" fill="#829da6"/>
<rect x="792.29" y="479" width="81.84" height="2.5" fill="#fafa7a"/>
<rect x="792.29" y="501.5" width="81.84" height="2.5" fill="#fafa7a"/>
<rect x="873.43" y="479" width="81.84" height="12.5" fill="#7b9fc5"/>
<rect x="873.43" y="491.5" width="81.84" height="12.5" fill="#7b9fc5"/>
<rect x="873.43" y="491" width="81.84" height="1" fill="#688c9b"/>
<rect x="873.43" y="479" width="81.84" height="2.5" fill="#508a32"/>
<rect x="873.43" y="501.5" width="81.84" height="2.5" fill="#508a32"/>
<rect x="954.57" y="479" width="81.84" height="12.5" fill="#7b9fc5"/>
<rect x="954.57" y="491.5" width="81.84" height="12.5" fill="#7b9fc5"/>
<rect x="954.57" y="491" width="81.84" height="1" fill="#688c9b"/>
<rect x="954.57" y="479" width="81.84" height="2.5" fill="#508a32"/>
<rect x="954.57" y="501.5" width="81.84" height="2.5" fill="#508a32"/>
<rect x="1035.71" y="479" width="81.84" height="12.5" fill="#7b9fc5"/>
<rect x="1035.71" y="491.5" width="81.84" height="12.5" fill="#7b9fc5"/>
<rect x="1035.71" y="491" width="81.84" height="1" fill="#77909c"/>
<rect x="1035.71" y="479" width="81.84" height="2.5" fill="#b4a63a"/>
<rect x="1035.71" y="501.5" width="81.84" height="2.5" fill="#b4a63a"/>
<rect x="1116.86" y="479" width="81.14" height="12.5" fill="#7b9fc5"/>
<rect x="1116.86" y="491.5" width="81.14" height="12.5" fill="#7b9fc5"/>
<rect x="1116.86" y="491" width="81.14" height="1" fill="#77909c"/>
<rect x="1116.86" y="479" width="81.14" height="2.5" fill="#b4a63a"/>
<rect x="1116.86" y="501.5" width="81.14" height="2.5" fill="#b4a63a"/>
<rect x="711" y="481.5" width="1" height="10" fill="#a3b69b"/>
<rect x="711" y="491.5" width="1" height="10" fill="#a3b69b"/>
<rect x="711" y="479" width="1" height="2.5" fill="#afaf55"/>
<rect x="711" y="501.5" width="1" height="2.5" fill="#afaf55"/>
<rect x="792" y="481.5" width="1" height="10" fill="#a3b69b"/>
<rect x="792" y="491.5" width="1" height="10" fill="#a3b69b"/>
<rect x="792" y="479" width="1" height="2.5" fill="#afaf55"/>
<rect x="792" y="501.5" width="1" height="2.5" fill="#afaf55"/>
<rect x="873" y="481.5" width="1" height="10" fill="#82a18d"/>
<rect x="873" y="491.5" width="1" height="10" fill="#82a18d"/>
<rect x="873" y="479" width="1" height="2.5" fill="#73883c"/>
<rect x="873" y="501.5" width="1" height="2.5" fill="#73883c"/>
<rect x="954" y="481.5" width="1" height="10" fill="#628c7f"/>
<rect x="954" y="491.5" width="1" height="10" fill="#628c7f"/>
<rect x="954" y="479" width="1" height="2.5" fill="#386123"/>
<rect x="954" y="501.5" width="1" height="2.5" fill="#386123"/>
<rect x="1035" y="481.5" width="1" height="10" fill="#759181"/>
<rect x="1035" y="491.5" width="1" height="10" fill="#759181"/>
<rect x="1035" y="479" width="1" height="2.5" fill="#5b6a26"/>
<rect x="1035" y="501.5" width="1" height="2.5" fill="#5b6a26"/>
<rect x="1116" y="481.5" width="1" height="10" fill="#889782"/>
<rect x="1116" y="491.5" width="1" height="10" fill="#889782"/>
<rect x="1116" y="479" width="1" height="2.5" fill="#7e7429"/>
<rect x="1116" y="501.5" width="1" height="2.5" fill="#7e7429"/>
<rect x="635" y="504" width="81.84" height="12.5" fill="#7b9fc5"/>
<rect x="635" y="516.5" width="81.84" height="12.5" fill="#7b9fc5"/>
<rect x="635" y="516" width="81.84" height="1" fill="#829da6"/>
<rect x="635" y="504" width="81.84" height="2.5" fill="#fafa7a"/>
<rect x="635" y="526.5" width="81.84" height="2.5" fill="#fafa7a"/>
<rect x="716.14" y="504" width="81.84" height="12.5" fill="#7b9fc5"/>
<rect x="716.14" y="516.5" width="81.84" height="12.5" fill="#7b9fc5"/>
<rect x="716.14" y="516" width="81.84" height="1" fill="#829da6"/>
<rect x="716.14" y="504" width="81.84" height="2.5" fill="#fafa7a"/>
<rect x="716.14" y="526.5" width="81.84" height="2.5" fill="#fafa7a"/>
<rect x="797.29" y="504" width="81.84" height="12.5" fill="#7b9fc5"/>
<rect x="797.29" y="516.5" width="81.84" height="12.5" fill="#7b9fc5"/>
<rect x="797.29" y="516" width="81.84" height="1" fill="#829da6"/>
<rect x="797.29" y="504" width="81.84" height="2.5" fill="#fafa7a"/>
<rect x="797.29" y="526.5" width="81.84" height="2.5" fill="#fafa7a"/>
<rect x="878.43" y="504" width="81.84" height="12.5" fill="#e9e513"/>
<rect x="878.43" y="516.5" width="81.84" height="12.5" fill="#a7d03c"/>
<rect x="878.43" y="516" width="81.84" height="1" fill="#d5cc0e"/>
<rect x="878.43" y="504" width="81.84" height="2.5" fill="#ffd500"/>
<rect x="878.43" y="526.5" width="81.84" height="2.5" fill="#ffd500"/>
<rect x="959.57" y="504" width="81.84" height="12.5" fill="#a7d03c"/>
<rect x="959.57" y="516.5" width="81.84" height="12.5" fill="#a7d03c"/>
<rect x="959.57" y="516" width="81.84" height="1" fill="#a4bc2d"/>
<rect x="959.57" y="504" width="81.84" height="2.5" fill="#ffd500"/>
<rect x="959.57" y="526.5" width="81.84" height="2.5" fill="#ffd500"/>
<rect x="1040.71" y="504" width="81.84" height="12.5" fill="#7b9fc5"/>
<rect x="1040.71" y="516.5" width="81.84" height="12.5" fill="#7b9fc5"/>
<rect x="1040.71" y="516" width="81.84" height="1" fill="#77909c"/>
<rect x="1040.71" y="504" width="81.84" height="2.5" fill="#b4a63a"/>
<rect x="1040.71" y="526.5" width="81.84" height="2.5" fill="#b4a63a"/>
<rect x="1121.86" y="504" width="81.14" height="12.5" fill="#7b9fc5"/>
<rect x="1121.86" y="516.5" width="81.14" height="12.5" fill="#7b9fc5"/>
<rect x="1121.86" y="516" width="81.14" height="1" fill="#77909c"/>
<rect x="1121.86" y="504" width="81.14" height="2.5" fill="#b4a63a"/>
<rect x="1121.86" y="526.5" width="81.14" height="2.5" fill="#b4a63a"/>
<rect x="716" y="506.5" width="1" height="10" fill="#a3b69b"/>
<rect x="716" y="516.5" width="1" height="10" fill="#a3b69b"/>
<rect x="716" y="504" width="1" height="2.5" fill="#afaf55"/>
<rect x="716" y="526.5" width="1" height="2.5" fill="#afaf55"/>
<rect x="797" y="506.5" width="1" height="10" fill="#a3b69b"/>
<rect x="797" y="516.5" width="1" height="10" fill="#a3b69b"/>
<rect x="797" y="504" width="1" height="2.5" fill="#afaf55"/>
<rect x="797" y="526.5" width="1" height="2.5" fill="#afaf55"/>
<rect x="878" y="506.5" width="1" height="10" fill="#c2c353"/>
<rect x="878" y="516.5" width="1" height="10" fill="#b0bd5e"/>
<rect x="878" y="504" width="1" height="2.5" fill="#b0a22b"/>
<rect x="878" y="526.5" width="1" height="2.5" fill="#b0a22b"/>
<rect x="959" y="506.5" width="1" height="10" fill="#cfc916"/>
<rect x="959" y="516.5" width="1" height="10" fill="#bdc321"/>
<rect x="959" y="504" width="1" height="2.5" fill="#b29500"/>
<rect x="959" y="526.5" width="1" height="2.5" fill="#b29500"/>
<rect x="1040" y="506.5" width="1" height="10" fill="#a3ad51"/>
<rect x="1040" y="516.5" width="1" height="10" fill="#a3ad51"/>
<rect x="1040" y="504" width="1" height="2.5" fill="#998514"/>
<rect x="1040" y="526.5" width="1" height="2.5" fill="#998514"/>
<rect x="1121" y="506.5" width="1" height="10" fill="#889782"/>
<rect x="1121" y="516.5" width="1" height="10" fill="#889782"/>
<rect x="1121" y="504" width="1" height="2.5" fill="#7e7429"/>
<rect x="1121" y="526.5" width="1" height="2.5" fill="#7e7429"/>
<rect x="640" y="529" width="81.84" height="12.5" fill="#7b9fc5"/>
<rect x="640" y="541.5" width="81.84" height="12.5" fill="#7b9fc5"/>
<rect x="640" y="541" width="81.84" height="1" fill="#829da6"/>
<rect x="640" y="529" width="81.84" height="2.5" fill="#fafa7a"/>
<rect x="640" y="551.5" width="81.84" height="2.5" fill="#fafa7a"/>
<rect x="721.14" y="529" width="81.84" height="12.5" fill="#e9e513"/>
<rect x="721.14" y="541.5" width="81.84" height="12.5" fill="#a7d03c"/>
<rect x="721.14" y="541" width="81.84" height="1" fill="#d5c718"/>
<rect x="721.14" y="529" width="81.84" height="2.5" fill="#fdb63e"/>
<rect x="721.14" y="551.5" width="81.84" height="2.5" fill="#fdb63e"/>
<rect x="802.29" y="529" width="81.84" height="12.5" fill="#e9e513"/>
<rect x="802.29" y="541.5" width="81.84" height="12.5" fill="#c9da32"/>
<rect x="802.29" y="541" width="81.84" height="1" fill="#d5c718"/>
<rect x="802.29" y="529" width="81.84" height="2.5" fill="#fdb63e"/>
<rect x="802.29" y="551.5" width="81.84" height="2.5" fill="#fdb63e"/>
<rect x="883.43" y="529" width="81.84" height="12.5" fill="#a7d03c"/>
<rect x="883.43" y="541.5" width="81.84" height="12.5" fill="#c9da32"/>
<rect x="883.43" y="541" width="81.84" height="1" fill="#a4bc2d"/>
<rect x="883.43" y="529" width="81.84" height="2.5" fill="#ffd500"/>
<rect x="883.43" y="551.5" width="81.84" height="2.5" fill="#ffd500"/>
<rect x="964.57" y="529" width="81.84" height="12.5" fill="#c9da32"/>
<rect x="964.57" y="541.5" width="81.84" height="12.5" fill="#c9da32"/>
<rect x="964.57" y="541" width="81.84" height="1" fill="#bdc326"/>
<rect x="964.57" y="529" width="81.84" height="2.5" fill="#ffd500"/>
<rect x="964.57" y="551.5" width="81.84" height="2.5" fill="#ffd500"/>
<rect x="1045.71" y="529" width="81.84" height="12.5" fill="#7b9fc5"/>
<rect x="1045.71" y="541.5" width="81.84" height="12.5" fill="#7b9fc5"/>
<rect x="1045.71" y="541" width="81.84" height="1" fill="#77909c"/>
<rect x="1045.71" y="529" width="81.84" height="2.5" fill="#b4a63a"/>
<rect x="1045.71" y="551.5" width="81.84" height="2.5" fill="#b4a63a"/>
<rect x="1126.86" y="529" width="81.14" height="12.5" fill="#7b9fc5"/>
<rect x="1126.86" y="541.5" width="81.14" height="12.5" fill="#7b9fc5"/>
<rect x="1126.86" y="541" width="81.14" height="1" fill="#77909c"/>
<rect x="1126.86" y="529" width="81.14" height="2.5" fill="#b4a63a"/>
<rect x="1126.86" y="551.5" width="81.14" height="2.5" fill="#b4a63a"/>
<rect x="721" y="531.5" width="1" height="10" fill="#c2bd5e"/>
<rect x="721" y="541.5" width="1" height="10" fill="#b0b769"/>
<rect x="721" y="529" width="1" height="2.5" fill="#b09740"/>
<rect x="721" y="551.5" width="1" height="2.5" fill="#b09740"/>
<rect x="802" y="531.5" width="1" height="10" fill="#e0c322"/>
<rect x="802" y="541.5" width="1" height="10" fill="#c5ba36"/>
<rect x="802" y="529" width="1" height="2.5" fill="#b17f2b"/>
<rect x="802" y="551.5" width="1" height="2.5" fill="#b17f2b"/>
<rect x="883" y="531.5" width="1" height="10" fill="#cfc322"/>
<rect x="883" y="541.5" width="1" height="10" fill="#cfc327"/>
<rect x="883" y="529" width="1" height="2.5" fill="#b28b16"/>
<rect x="883" y="551.5" width="1" height="2.5" fill="#b28b16"/>
<rect x="964" y="531.5" width="1" height="10" fill="#c6c61e"/>
<rect x="964" y="541.5" width="1" height="10" fill="#cfc91c"/>
<rect x="964" y="529" width="1" height="2.5" fill="#b29500"/>
<rect x="964" y="551.5" width="1" height="2.5" fill="#b29500"/>
<rect x="1045" y="531.5" width="1" height="10" fill="#acb04f"/>
<rect x="1045" y="541.5" width="1" height="10" fill="#acb04f"/>
<rect x="1045" y="529" width="1" height="2.5" fill="#998514"/>
<rect x="1045" y="551.5" width="1" height="2.5" fill="#998514"/>
<rect x="1126" y="531.5" width="1" height="10" fill="#889782"/>
<rect x="1126" y="541.5" width="1" height="10" fill="#889782"/>
<rect x="1126" y="529" width="1" height="2.5" fill="#7e7429"/>
<rect x="1126" y="551.5" width="1" height="2.5" fill="#7e7429"/>
<rect x="645" y="554" width="81.84" height="12.5" fill="#c9da32"/>
<rect x="645" y="566.5" width="81.84" height="12.5" fill="#a7d03c"/>
<rect x="645" y="566" width="81.84" height="1" fill="#bdbf2f"/>
<rect x="645" y="554" width="81.84" height="2.5" fill="#fdb63e"/>
<rect x="645" y="576.5" width="81.84" height="2.5" fill="#fdb63e"/>
<rect x="726.14" y="554" width="81.84" height="12.5" fill="#a7d03c"/>
<rect x="726.14" y="566.5" width="81.84" height="12.5" fill="#a7d03c"/>
<rect x="726.14" y="566" width="81.84" height="1" fill="#a3b736"/>
<rect x="726.14" y="554" width="81.84" height="2.5" fill="#fdb63e"/>
<rect x="726.14" y="576.5" width="81.84" height="2.5" fill="#fdb63e"/>
<rect x="807.29" y="554" width="81.84" height="12.5" fill="#a7d03c"/>
<rect x="807.29" y="566.5" width="81.84" height="12.5" fill="#a7d03c"/>
<rect x="807.29" y="566" width="81.84" height="1" fill="#a3b736"/>
<rect x="807.29" y="554" width="81.84" height="2.5" fill="#fdb63e"/>
<rect x="807.29" y="576.5" width="81.84" height="2.5" fill="#fdb63e"/>
<rect x="888.43" y="554" width="81.84" height="12.5" fill="#c9da32"/>
<rect x="888.43" y="566.5" width="81.84" height="12.5" fill="#c9da32"/>
<rect x="888.43" y="566" width="81.84" height="1" fill="#bdc326"/>
<rect x="888.43" y="554" width="81.84" height="2.5" fill="#ffd500"/>
<rect x="888.43" y="576.5" width="81.84" height="2.5" fill="#ffd500"/>
<rect x="969.57" y="554" width="81.84" height="12.5" fill="#7b9fc5"/>
<rect x="969.57" y="566.5" width="81.84" height="12.5" fill="#7b9fc5"/>
<rect x="969.57" y="566" width="81.84" height="1" fill="#829794"/>
<rect x="969.57" y="554" width="81.84" height="2.5" fill="#ffd500"/>
<rect x="969.57" y="576.5" width="81.84" height="2.5" fill="#ffd500"/>
<rect x="1050.71" y="554" width="81.84" height="12.5" fill="#7b9fc5"/>
<rect x="1050.71" y="566.5" width="81.84" height="12.5" fill="#7b9fc5"/>
<rect x="1050.71" y="566" width="81.84" height="1" fill="#829794"/>
<rect x="1050.71" y="554" width="81.84" height="2.5" fill="#ffd500"/>
<rect x="1050.71" y="576.5" width="81.84" height="2.5" fill="#ffd500"/>
<rect x="1131.86" y="554" width="81.14" height="12.5" fill="#7b9fc5"/>
<rect x="1131.86" y="566.5" width="81.14" height="12.5" fill="#e9e513"/>
<rect x="1131.86" y="566" width="81.14" height="1" fill="#77909c"/>
<rect x="1131.86" y="554" width="81.14" height="2.5" fill="#b4a63a"/>
<rect x="1131.86" y="576.5" width="81.14" height="2.5" fill="#b0621f"/>
<rect x="726" y="556.5" width="1" height="10" fill="#c5ba36"/>
<rect x="726" y="566.5" width="1" height="10" fill="#bcb839"/>
<rect x="726" y="554" width="1" height="2.5" fill="#b17f2b"/>
<rect x="726" y="576.5" width="1" height="2.5" fill="#b17f2b"/>
<rect x="807" y="556.5" width="1" height="10" fill="#bcb839"/>
<rect x="807" y="566.5" width="1" height="10" fill="#bcb839"/>
<rect x="807" y="554" width="1" height="2.5" fill="#b17f2b"/>
<rect x="807" y="576.5" width="1" height="2.5" fill="#b17f2b"/>
<rect x="888" y="556.5" width="1" height="10" fill="#c6c02a"/>
<rect x="888" y="566.5" width="1" height="10" fill="#c6c02a"/>
<rect x="888" y="554" width="1" height="2.5" fill="#b28b16"/>
<rect x="888" y="576.5" width="1" height="2.5" fill="#b28b16"/>
<rect x="969" y="556.5" width="1" height="10" fill="#bab844"/>
<rect x="969" y="566.5" width="1" height="10" fill="#bab844"/>
<rect x="969" y="554" width="1" height="2.5" fill="#b29500"/>
<rect x="969" y="576.5" width="1" height="2.5" fill="#b29500"/>
<rect x="1050" y="556.5" width="1" height="10" fill="#a5a86c"/>
<rect x="1050" y="566.5" width="1" height="10" fill="#a5a86c"/>
<rect x="1050" y="554" width="1" height="2.5" fill="#b29500"/>
<rect x="1050" y="576.5" width="1" height="2.5" fill="#b29500"/>
<rect x="1131" y="556.5" width="1" height="10" fill="#96a077"/>
<rect x="1131" y="566.5" width="1" height="10" fill="#b4a641"/>
<rect x="1131" y="554" width="1" height="2.5" fill="#998514"/>
<rect x="1131" y="576.5" width="1" height="2.5" fill="#976d0b"/>
<rect x="650" y="579" width="81.84" height="12.5" fill="#7b9fc5"/>
<rect x="650" y="591.5" width="81.84" height="12.5" fill="#7b9fc5"/>
<rect x="650" y="591" width="81.84" height="1" fill="#82939d"/>
<rect x="650" y="579" width="81.84" height="2.5" fill="#fdb63e"/>
<rect x="650" y="601.5" width="81.84" height="2.5" fill="#fdb63e"/>
<rect x="731.14" y="579" width="81.84" height="12.5" fill="#7b9fc5"/>
<rect x="731.14" y="591.5" width="81.84" height="12.5" fill="#7b9fc5"/>
<rect x="731.14" y="591" width="81.84" height="1" fill="#82939d"/>
<rect x="731.14" y="579" width="81.84" height="2.5" fill="#fdb63e"/>
<rect x="731.14" y="601.5" width="81.84" height="2.5" fill="#fdb63e"/>
<rect x="812.29" y="579" width="81.84" height="12.5" fill="#7b9fc5"/>
<rect x="812.29" y="591.5" width="81.84" height="12.5" fill="#7b9fc5"/>
<rect x="812.29" y="591" width="81.84" height="1" fill="#82939d"/>
<rect x="812.29" y="579" width="81.84" height="2.5" fill="#fdb63e"/>
<rect x="812.29" y="601.5" width="81.84" height="2.5" fill="#fdb63e"/>
<rect x="893.43" y="579" width="81.84" height="12.5" fill="#7b9fc5"/>
<rect x="893.43" y="591.5" width="81.84" height="12.5" fill="#7b9fc5"/>
<rect x="893.43" y="591" width="81.84" height="1" fill="#829794"/>
<rect x="893.43" y="579" width="81.84" height="2.5" fill="#ffd500"/>
<rect x="893.43" y="601.5" width="81.84" height="2.5" fill="#ffd500"/>
<rect x="974.57" y="579" width="81.84" height="12.5" fill="#7b9fc5"/>
<rect x="974.57" y="591.5" width="81.84" height="12.5" fill="#7b9fc5"/>
<rect x="974.57" y="591" width="81.84" height="1" fill="#829794"/>
<rect x="974.57" y="579" width="81.84" height="2.5" fill="#ffd500"/>
<rect x="974.57" y="601.5" width="81.84" height="2.5" fill="#ffd500"/>
<rect x="1055.71" y="579" width="81.84" height="12.5" fill="#a7d03c"/>
<rect x="1055.71" y="591.5" width="81.84" height="12.5" fill="#e9e513"/>
<rect x="1055.71" y="591" width="81.84" height="1" fill="#98ab32"/>
<rect x="1055.71" y="579" width="81.84" height="2.5" fill="#b0621f"/>
<rect x="1055.71" y="601.5" width="81.84" height="2.5" fill="#b0621f"/>
<rect x="1136.86" y="579" width="81.14" height="12.5" fill="#c9da32"/>
<rect x="1136.86" y="591.5" width="81.14" height="12.5" fill="#a7d03c"/>
<rect x="1136.86" y="591" width="81.14" height="1" fill="#b1b22a"/>
<rect x="1136.86" y="579" width="81.14" height="2.5" fill="#b0621f"/>
<rect x="1136.86" y="601.5" width="81.14" height="2.5" fill="#b0621f"/>
<rect x="731" y="581.5" width="1" height="10" fill="#a49d84"/>
<rect x="731" y="591.5" width="1" height="10" fill="#a49d84"/>
<rect x="731" y="579" width="1" height="2.5" fill="#b17f2b"/>
<rect x="731" y="601.5" width="1" height="2.5" fill="#b17f2b"/>
<rect x="812" y="581.5" width="1" height="10" fill="#a49d84"/>
<rect x="812" y="591.5" width="1" height="10" fill="#a49d84"/>
<rect x="812" y="579" width="1" height="2.5" fill="#b17f2b"/>
<rect x="812" y="601.5" width="1" height="2.5" fill="#b17f2b"/>
<rect x="893" y="581.5" width="1" height="10" fill="#a4a378"/>
<rect x="893" y="591.5" width="1" height="10" fill="#a4a378"/>
<rect x="893" y="579" width="1" height="2.5" fill="#b28b16"/>
<rect x="893" y="601.5" width="1" height="2.5" fill="#b28b16"/>
<rect x="974" y="581.5" width="1" height="10" fill="#a5a86c"/>
<rect x="974" y="591.5" width="1" height="10" fill="#a5a86c"/>
<rect x="974" y="579" width="1" height="2.5" fill="#b29500"/>
<rect x="974" y="601.5" width="1" height="2.5" fill="#b29500"/>
<rect x="1055" y="581.5" width="1" height="10" fill="#a2a04c"/>
<rect x="1055" y="591.5" width="1" height="10" fill="#b4a641"/>
<rect x="1055" y="579" width="1" height="2.5" fill="#976d0b"/>
<rect x="1055" y="601.5" width="1" height="2.5" fill="#976d0b"/>
<rect x="1136" y="581.5" width="1" height="10" fill="#a89a2a"/>
<rect x="1136" y="591.5" width="1" height="10" fill="#b19d22"/>
<rect x="1136" y="579" width="1" height="2.5" fill="#7b4516"/>
<rect x="1136" y="601.5" width="1" height="2.5" fill="#7b4516"/>
<rect x="655" y="604" width="81.84" height="12.5" fill="#7b9fc5"/>
<rect x="655" y="616.5" width="81.84" height="12.5" fill="#7b9fc5"/>
<rect x="655" y="616" width="81.84" height="1" fill="#82939d"/>
<rect x="655" y="604" width="81.84" height="2.5" fill="#fdb63e"/>
<rect x="655" y="626.5" width="81.84" height="2.5" fill="#fdb63e"/>
<rect x="736.14" y="604" width="81.84" height="12.5" fill="#7b9fc5"/>
<rect x="736.14" y="616.5" width="81.84" height="12.5" fill="#7b9fc5"/>
<rect x="736.14" y="616" width="81.84" height="1" fill="#82939d"/>
<rect x="736.14" y="604" width="81.84" height="2.5" fill="#fdb63e"/>
<rect x="736.14" y="626.5" width="81.84" height="2.5" fill="#fdb63e"/>
<rect x="817.29" y="604" width="81.84" height="12.5" fill="#7b9fc5"/>
<rect x="817.29" y="616.5" width="81.84" height="12.5" fill="#7b9fc5"/>
<rect x="817.29" y="616" width="81.84" height="1" fill="#82939d"/>
<rect x="817.29" y="604" width="81.84" height="2.5" fill="#fdb63e"/>
<rect x="817.29" y="626.5" width="81.84" height="2.5" fill="#fdb63e"/>
<rect x="898.43" y="604" width="81.84" height="12.5" fill="#7b9fc5"/>
<rect x="898.43" y="616.5" width="81.84" height="12.5" fill="#7b9fc5"/>
<rect x="898.43" y="616" width="81.84" height="1" fill="#829794"/>
<rect x="898.43" y="604" width="81.84" height="2.5" fill="#ffd500"/>
<rect x="898.43" y="626.5" width="81.84" height="2.5" fill="#ffd500"/>
<rect x="979.57" y="604" width="81.84" height="12.5" fill="#7b9fc5"/>
<rect x="979.57" y="616.5" width="81.84" height="12.5" fill="#7b9fc5"/>
<rect x="979.57" y="616" width="81.84" height="1" fill="#829794"/>
<rect x="979.57" y="604" width="81.84" height="2.5" fill="#ffd500"/>
<rect x="979.57" y="626.5" width="81.84" height="2.5" fill="#ffd500"/>
<rect x="1060.71" y="604" width="81.84" height="12.5" fill="#a7d03c"/>
<rect x="1060.71" y="616.5" width="81.84" height="12.5" fill="#a7d03c"/>
<rect x="1060.71" y="616" width="81.84" height="1" fill="#98ab32"/>
<rect x="1060.71" y="604" width="81.84" height="2.5" fill="#b0621f"/>
<rect x="1060.71" y="626.5" width="81.84" height="2.5" fill="#b0621f"/>
<rect x="1141.86" y="604" width="81.14" height="12.5" fill="#c9da32"/>
<rect x="1141.86" y="616.5" width="81.14" height="12.5" fill="#a7d03c"/>
<rect x="1141.86" y="616" width="81.14" height="1" fill="#b1b22a"/>
<rect x="1141.86" y="604" width="81.14" height="2.5" fill="#b0621f"/>
<rect x="1141.86" y="626.5" width="81.14" height="2.5" fill="#b0621f"/>
<rect x="736" y="606.5" width="1" height="10" fill="#a49d84"/>
<rect x="736" y="616.5" width="1" height="10" fill="#a49d84"/>
<rect x="736" y="604" width="1" height="2.5" fill="#b17f2b"/>
<rect x="736" y="626.5" width="1" height="2.5" fill="#b17f2b"/>
<rect x="817" y="606.5" width="1" height="10" fill="#a49d84"/>
<rect x="817" y="616.5" width="1" height="10" fill="#a49d84"/>
<rect x="817" y="604" width="1" height="2.5" fill="#b17f2b"/>
<rect x="817" y="626.5" width="1" height="2.5" fill="#b17f2b"/>
<rect x="898" y="606.5" width="1" height="10" fill="#a4a378"/>
<rect x="898" y="616.5" width="1" height="10" fill="#a4a378"/>
<rect x="898" y="604" width="1" height="2.5" fill="#b28b16"/>
<rect x="898" y="626.5" width="1" height="2.5" fill="#b28b16"/>
<rect x="979" y="606.5" width="1" height="10" fill="#a5a86c"/>
<rect x="979" y="616.5" width="1" height="10" fill="#a5a86c"/>
<rect x="979" y="604" width="1" height="2.5" fill="#b29500"/>
<rect x="979" y="626.5" width="1" height="2.5" fill="#b29500"/>
<rect x="1060" y="606.5" width="1" height="10" fill="#a2a04c"/>
<rect x="1060" y="616.5" width="1" height="10" fill="#a2a04c"/>
<rect x="1060" y="604" width="1" height="2.5" fill="#976d0b"/>
<rect x="1060" y="626.5" width="1" height="2.5" fill="#976d0b"/>
<rect x="1141" y="606.5" width="1" height="10" fill="#a89a2a"/>
<rect x="1141" y="616.5" width="1" height="10" fill="#9f982d"/>
<rect x="1141" y="604" width="1" height="2.5" fill="#7b4516"/>
<rect x="1141" y="626.5" width="1" height="2.5" fill="#7b4516"/>
<rect x="660" y="629" width="81.84" height="12.5" fill="#a7d03c"/>
<rect x="660" y="641.5" width="81.84" height="12.5" fill="#a7d03c"/>
<rect x="660" y="641" width="81.84" height="1" fill="#93a845"/>
<rect x="660" y="629" width="81.84" height="2.5" fill="#9052a2"/>
<rect x="660" y="651.5" width="81.84" height="2.5" fill="#9052a2"/>
<rect x="741.14" y="629" width="81.84" height="12.5" fill="#e9e513"/>
<rect x="741.14" y="641.5" width="81.84" height="12.5" fill="#a7d03c"/>
<rect x="741.14" y="641" width="81.84" height="1" fill="#c4b827"/>
<rect x="741.14" y="629" width="81.84" height="2.5" fill="#9052a2"/>
<rect x="741.14" y="651.5" width="81.84" height="2.5" fill="#9052a2"/>
<rect x="822.29" y="629" width="81.84" height="12.5" fill="#7b9fc5"/>
<rect x="822.29" y="641.5" width="81.84" height="12.5" fill="#7b9fc5"/>
<rect x="822.29" y="641" width="81.84" height="1" fill="#82939d"/>
<rect x="822.29" y="629" width="81.84" height="2.5" fill="#fdb63e"/>
<rect x="822.29" y="651.5" width="81.84" height="2.5" fill="#fdb63e"/>
<rect x="903.43" y="629" width="81.84" height="12.5" fill="#7b9fc5"/>
<rect x="903.43" y="641.5" width="81.84" height="12.5" fill="#7b9fc5"/>
<rect x="903.43" y="641" width="81.84" height="1" fill="#829794"/>
<rect x="903.43" y="629" width="81.84" height="2.5" fill="#ffd500"/>
<rect x="903.43" y="651.5" width="81.84" height="2.5" fill="#ffd500"/>
<rect x="984.57" y="629" width="81.84" height="12.5" fill="#7b9fc5"/>
<rect x="984.57" y="641.5" width="81.84" height="12.5" fill="#7b9fc5"/>
<rect x="984.57" y="641" width="81.84" height="1" fill="#829794"/>
<rect x="984.57" y="629" width="81.84" height="2.5" fill="#ffd500"/>
<rect x="984.57" y="651.5" width="81.84" height="2.5" fill="#ffd500"/>
<rect x="1065.71" y="629" width="81.84" height="12.5" fill="#c9da32"/>
<rect x="1065.71" y="641.5" width="81.84" height="12.5" fill="#7b9fc5"/>
<rect x="1065.71" y="641" width="81.84" height="1" fill="#b1b22a"/>
<rect x="1065.71" y="629" width="81.84" height="2.5" fill="#b0621f"/>
<rect x="1065.71" y="651.5" width="81.84" height="2.5" fill="#b0621f"/>
<rect x="1146.86" y="629" width="81.14" height="12.5" fill="#7b9fc5"/>
<rect x="1146.86" y="641.5" width="81.14" height="12.5" fill="#7b9fc5"/>
<rect x="1146.86" y="641" width="81.14" height="1" fill="#778698"/>
<rect x="1146.86" y="629" width="81.14" height="2.5" fill="#b0621f"/>
<rect x="1146.86" y="651.5" width="81.14" height="2.5" fill="#b0621f"/>
<rect x="741" y="631.5" width="1" height="10" fill="#a59754"/>
<rect x="741" y="641.5" width="1" height="10" fill="#93925f"/>
<rect x="741" y="629" width="1" height="2.5" fill="#653971"/>
<rect x="741" y="651.5" width="1" height="2.5" fill="#653971"/>
<rect x="822" y="631.5" width="1" height="10" fill="#ad9d66"/>
<rect x="822" y="641.5" width="1" height="10" fill="#9b9771"/>
<rect x="822" y="629" width="1" height="2.5" fill="#8b5c4e"/>
<rect x="822" y="651.5" width="1" height="2.5" fill="#8b5c4e"/>
<rect x="903" y="631.5" width="1" height="10" fill="#a4a378"/>
<rect x="903" y="641.5" width="1" height="10" fill="#a4a378"/>
<rect x="903" y="629" width="1" height="2.5" fill="#b28b16"/>
<rect x="903" y="651.5" width="1" height="2.5" fill="#b28b16"/>
<rect x="984" y="631.5" width="1" height="10" fill="#a5a86c"/>
<rect x="984" y="641.5" width="1" height="10" fill="#a5a86c"/>
<rect x="984" y="629" width="1" height="2.5" fill="#b29500"/>
<rect x="984" y="651.5" width="1" height="2.5" fill="#b29500"/>
<rect x="1065" y="631.5" width="1" height="10" fill="#aba34a"/>
<rect x="1065" y="641.5" width="1" height="10" fill="#969372"/>
<rect x="1065" y="629" width="1" height="2.5" fill="#976d0b"/>
<rect x="1065" y="651.5" width="1" height="2.5" fill="#976d0b"/>
<rect x="1146" y="631.5" width="1" height="10" fill="#9c8d50"/>
<rect x="1146" y="641.5" width="1" height="10" fill="#877d78"/>
<rect x="1146" y="629" width="1" height="2.5" fill="#7b4516"/>
<rect x="1146" y="651.5" width="1" height="2.5" fill="#7b4516"/>
<rect x="665" y="654" width="81.84" height="12.5" fill="#a7d03c"/>
<rect x="665" y="666.5" width="81.84" height="12.5" fill="#a7d03c"/>
<rect x="665" y="666" width="81.84" height="1" fill="#93a845"/>
<rect x="665" y="654" width="81.84" height="2.5" fill="#9052a2"/>
<rect x="665" y="676.5" width="81.84" height="2.5" fill="#9052a2"/>
<rect x="746.14" y="654" width="81.84" height="12.5" fill="#a7d03c"/>
<rect x="746.14" y="666.5" width="81.84" height="12.5" fill="#c9da32"/>
<rect x="746.14" y="666" width="81.84" height="1" fill="#93a845"/>
<rect x="746.14" y="654" width="81.84" height="2.5" fill="#9052a2"/>
<rect x="746.14" y="676.5" width="81.84" height="2.5" fill="#9052a2"/>
<rect x="827.29" y="654" width="81.84" height="12.5" fill="#c9da32"/>
<rect x="827.29" y="666.5" width="81.84" height="12.5" fill="#a7d03c"/>
<rect x="827.29" y="666" width="81.84" height="1" fill="#bbb82c"/>
<rect x="827.29" y="654" width="81.84" height="2.5" fill="#f28c2c"/>
<rect x="827.29" y="676.5" width="81.84" height="2.5" fill="#f28c2c"/>
<rect x="908.43" y="654" width="81.84" height="12.5" fill="#c9da32"/>
<rect x="908.43" y="666.5" width="81.84" height="12.5" fill="#c9da32"/>
<rect x="908.43" y="666" width="81.84" height="1" fill="#bdca4c"/>
<rect x="908.43" y="654" width="81.84" height="2.5" fill="#ffffff"/>
<rect x="908.43" y="676.5" width="81.84" height="2.5" fill="#f28c2c"/>
<rect x="989.57" y="654" width="81.84" height="12.5" fill="#c9da32"/>
<rect x="989.57" y="666.5" width="81.84" height="12.5" fill="#a7d03c"/>
<rect x="989.57" y="666" width="81.84" height="1" fill="#bbb82c"/>
<rect x="989.57" y="654" width="81.84" height="2.5" fill="#f28c2c"/>
<rect x="989.57" y="676.5" width="81.84" height="2.5" fill="#f28c2c"/>
<rect x="1070.71" y="654" width="81.84" height="12.5" fill="#7b9fc5"/>
<rect x="1070.71" y="666.5" width="81.84" height="12.5" fill="#7b9fc5"/>
<rect x="1070.71" y="666" width="81.84" height="1" fill="#778698"/>
<rect x="1070.71" y="654" width="81.84" height="2.5" fill="#b0621f"/>
<rect x="1070.71" y="676.5" width="81.84" height="2.5" fill="#b0621f"/>
<rect x="1151.86" y="654" width="81.14" height="12.5" fill="#7b9fc5"/>
<rect x="1151.86" y="666.5" width="81.14" height="12.5" fill="#7b9fc5"/>
<rect x="1151.86" y="666" width="81.14" height="1" fill="#778698"/>
<rect x="1151.86" y="654" width="81.14" height="2.5" fill="#b0621f"/>
<rect x="1151.86" y="676.5" width="81.14" height="2.5" fill="#b0621f"/>
<rect x="746" y="656.5" width="1" height="10" fill="#93925f"/>
<rect x="746" y="666.5" width="1" height="10" fill="#9c945c"/>
<rect x="746" y="654" width="1" height="2.5" fill="#653971"/>
<rect x="746" y="676.5" width="1" height="2.5" fill="#653971"/>
<rect x="827" y="656.5" width="1" height="10" fill="#af9f45"/>
<rect x="827" y="666.5" width="1" height="10" fill="#af9f45"/>
<rect x="827" y="654" width="1" height="2.5" fill="#874e48"/>
<rect x="827" y="676.5" width="1" height="2.5" fill="#874e48"/>
<rect x="908" y="656.5" width="1" height="10" fill="#cdc354"/>
<rect x="908" y="666.5" width="1" height="10" fill="#c1aa2f"/>
<rect x="908" y="654" width="1" height="2.5" fill="#ae8b69"/>
<rect x="908" y="676.5" width="1" height="2.5" fill="#a9621f"/>
<rect x="989" y="656.5" width="1" height="10" fill="#cdc354"/>
<rect x="989" y="666.5" width="1" height="10" fill="#c1aa2f"/>
<rect x="989" y="654" width="1" height="2.5" fill="#ae8b69"/>
<rect x="989" y="676.5" width="1" height="2.5" fill="#a9621f"/>
<rect x="1070" y="656.5" width="1" height="10" fill="#a99553"/>
<rect x="1070" y="666.5" width="1" height="10" fill="#9f9255"/>
<rect x="1070" y="654" width="1" height="2.5" fill="#92531b"/>
<rect x="1070" y="676.5" width="1" height="2.5" fill="#92531b"/>
<rect x="1151" y="656.5" width="1" height="10" fill="#877d78"/>
<rect x="1151" y="666.5" width="1" height="10" fill="#877d78"/>
<rect x="1151" y="654" width="1" height="2.5" fill="#7b4516"/>
<rect x="1151" y="676.5" width="1" height="2.5" fill="#7b4516"/>
<rect x="670" y="679" width="81.84" height="12.5" fill="#a7d03c"/>
<rect x="670" y="691.5" width="81.84" height="12.5" fill="#c9da32"/>
<rect x="670" y="691" width="81.84" height="1" fill="#93a845"/>
<rect x="670" y="679" width="81.84" height="2.5" fill="#9052a2"/>
<rect x="670" y="701.5" width="81.84" height="2.5" fill="#9052a2"/>
<rect x="751.14" y="679" width="81.84" height="12.5" fill="#7b9fc5"/>
<rect x="751.14" y="691.5" width="81.84" height="12.5" fill="#7b9fc5"/>
<rect x="751.14" y="691" width="81.84" height="1" fill="#7284ac"/>
<rect x="751.14" y="679" width="81.84" height="2.5" fill="#9052a2"/>
<rect x="751.14" y="701.5" width="81.84" height="2.5" fill="#9052a2"/>
<rect x="832.29" y="679" width="81.84" height="12.5" fill="#c9da32"/>
<rect x="832.29" y="691.5" width="81.84" height="12.5" fill="#a7d03c"/>
<rect x="832.29" y="691" width="81.84" height="1" fill="#bbb82c"/>
<rect x="832.29" y="679" width="81.84" height="2.5" fill="#f28c2c"/>
<rect x="832.29" y="701.5" width="81.84" height="2.5" fill="#f28c2c"/>
<rect x="913.43" y="679" width="81.84" height="12.5" fill="#c9da32"/>
<rect x="913.43" y="691.5" width="81.84" height="12.5" fill="#a7d03c"/>
<rect x="913.43" y="691" width="81.84" height="1" fill="#bbb82c"/>
<rect x="913.43" y="679" width="81.84" height="2.5" fill="#f28c2c"/>
<rect x="913.43" y="701.5" width="81.84" height="2.5" fill="#f28c2c"/>
<rect x="994.57" y="679" width="81.84" height="12.5" fill="#7b9fc5"/>
<rect x="994.57" y="691.5" width="81.84" height="12.5" fill="#7b9fc5"/>
<rect x="994.57" y="691" width="81.84" height="1" fill="#818c9a"/>
<rect x="994.57" y="679" width="81.84" height="2.5" fill="#f28c2c"/>
<rect x="994.57" y="701.5" width="81.84" height="2.5" fill="#f28c2c"/>
<rect x="1075.71" y="679" width="81.84" height="12.5" fill="#7b9fc5"/>
<rect x="1075.71" y="691.5" width="81.84" height="12.5" fill="#7b9fc5"/>
<rect x="1075.71" y="691" width="81.84" height="1" fill="#778698"/>
<rect x="1075.71" y="679" width="81.84" height="2.5" fill="#b0621f"/>
<rect x="1075.71" y="701.5" width="81.84" height="2.5" fill="#b0621f"/>
<rect x="1156.86" y="679" width="81.14" height="12.5" fill="#7b9fc5"/>
<rect x="1156.86" y="691.5" width="81.14" height="12.5" fill="#7b9fc5"/>
<rect x="1156.86" y="691" width="81.14" height="1" fill="#778698"/>
<rect x="1156.86" y="679" width="81.14" height="2.5" fill="#b0621f"/>
<rect x="1156.86" y="701.5" width="81.14" height="2.5" fill="#b0621f"/>
<rect x="751" y="681.5" width="1" height="10" fill="#868484"/>
<rect x="751" y="691.5" width="1" height="10" fill="#908782"/>
<rect x="751" y="679" width="1" height="2.5" fill="#653971"/>
<rect x="751" y="701.5" width="1" height="2.5" fill="#653971"/>
<rect x="832" y="681.5" width="1" height="10" fill="#a2926b"/>
<rect x="832" y="691.5" width="1" height="10" fill="#998f6e"/>
<rect x="832" y="679" width="1" height="2.5" fill="#874e48"/>
<rect x="832" y="701.5" width="1" height="2.5" fill="#874e48"/>
<rect x="913" y="681.5" width="1" height="10" fill="#cbad2c"/>
<rect x="913" y="691.5" width="1" height="10" fill="#b8a832"/>
<rect x="913" y="679" width="1" height="2.5" fill="#a9621f"/>
<rect x="913" y="701.5" width="1" height="2.5" fill="#a9621f"/>
<rect x="994" y="681.5" width="1" height="10" fill="#b59d55"/>
<rect x="994" y="691.5" width="1" height="10" fill="#ac9a57"/>
<rect x="994" y="679" width="1" height="2.5" fill="#a9621f"/>
<rect x="994" y="701.5" width="1" height="2.5" fill="#a9621f"/>
<rect x="1075" y="681.5" width="1" height="10" fill="#93857b"/>
<rect x="1075" y="691.5" width="1" height="10" fill="#93857b"/>
<rect x="1075" y="679" width="1" height="2.5" fill="#92531b"/>
<rect x="1075" y="701.5" width="1" height="2.5" fill="#92531b"/>
<rect x="1156" y="681.5" width="1" height="10" fill="#877d78"/>
<rect x="1156" y="691.5" width="1" height="10" fill="#877d78"/>
<rect x="1156" y="679" width="1" height="2.5" fill="#7b4516"/>
<rect x="1156" y="701.5" width="1" height="2.5" fill="#7b4516"/>
<rect x="675" y="704" width="81.84" height="12.5" fill="#7b9fc5"/>
<rect x="675" y="716.5" width="81.84" height="12.5" fill="#7b9fc5"/>
<rect x="675" y="716" width="81.84" height="1" fill="#7284ac"/>
<rect x="675" y="704" width="81.84" height="2.5" fill="#9052a2"/>
<rect x="675" y="726.5" width="81.84" height="2.5" fill="#9052a2"/>
<rect x="756.14" y="704" width="81.84" height="12.5" fill="#7b9fc5"/>
<rect x="756.14" y="716.5" width="81.84" height="12.5" fill="#7b9fc5"/>
<rect x="756.14" y="716" width="81.84" height="1" fill="#7284ac"/>
<rect x="756.14" y="704" width="81.84" height="2.5" fill="#9052a2"/>
<rect x="756.14" y="726.5" width="81.84" height="2.5" fill="#9052a2"/>
<rect x="837.29" y="704" width="81.84" height="12.5" fill="#7b9fc5"/>
<rect x="837.29" y="716.5" width="81.84" height="12.5" fill="#7b9fc5"/>
<rect x="837.29" y="716" width="81.84" height="1" fill="#818c9a"/>
<rect x="837.29" y="704" width="81.84" height="2.5" fill="#f28c2c"/>
<rect x="837.29" y="726.5" width="81.84" height="2.5" fill="#f28c2c"/>
<rect x="918.43" y="704" width="81.84" height="12.5" fill="#7b9fc5"/>
<rect x="918.43" y="716.5" width="81.84" height="12.5" fill="#7b9fc5"/>
<rect x="918.43" y="716" width="81.84" height="1" fill="#818c9a"/>
<rect x="918.43" y="704" width="81.84" height="2.5" fill="#f28c2c"/>
<rect x="918.43" y="726.5" width="81.84" height="2.5" fill="#f28c2c"/>
<rect x="999.57" y="704" width="81.84" height="12.5" fill="#7b9fc5"/>
<rect x="999.57" y="716.5" width="81.84" height="12.5" fill="#7b9fc5"/>
<rect x="999.57" y="716" width="81.84" height="1" fill="#818c9a"/>
<rect x="999.57" y="704" width="81.84" height="2.5" fill="#f28c2c"/>
<rect x="999.57" y="726.5" width="81.84" height="2.5" fill="#f28c2c"/>
<rect x="1080.71" y="704" width="81.84" height="12.5" fill="#7b9fc5"/>
<rect x="1080.71" y="716.5" width="81.84" height="12.5" fill="#7b9fc5"/>
<rect x="1080.71" y="716" width="81.84" height="1" fill="#778698"/>
<rect x="1080.71" y="704" width="81.84" height="2.5" fill="#b0621f"/>
<rect x="1080.71" y="726.5" width="81.84" height="2.5" fill="#b0621f"/>
<rect x="1161.86" y="704" width="81.14" height="12.5" fill="#7b9fc5"/>
<rect x="1161.86" y="716.5" width="81.14" height="12.5" fill="#7b9fc5"/>
<rect x="1161.86" y="716" width="81.14" height="1" fill="#778698"/>
<rect x="1161.86" y="704" width="81.14" height="2.5" fill="#b0621f"/>
<rect x="1161.86" y="726.5" width="81.14" height="2.5" fill="#b0621f"/>
<rect x="756" y="706.5" width="1" height="10" fill="#7a77aa"/>
<rect x="756" y="716.5" width="1" height="10" fill="#7a77aa"/>
<rect x="756" y="704" width="1" height="2.5" fill="#653971"/>
<rect x="756" y="726.5" width="1" height="2.5" fill="#653971"/>
<rect x="837" y="706.5" width="1" height="10" fill="#8d8293"/>
<rect x="837" y="716.5" width="1" height="10" fill="#8d8293"/>
<rect x="837" y="704" width="1" height="2.5" fill="#874e48"/>
<rect x="837" y="726.5" width="1" height="2.5" fill="#874e48"/>
<rect x="918" y="706.5" width="1" height="10" fill="#a08d7d"/>
<rect x="918" y="716.5" width="1" height="10" fill="#a08d7d"/>
<rect x="918" y="704" width="1" height="2.5" fill="#a9621f"/>
<rect x="918" y="726.5" width="1" height="2.5" fill="#a9621f"/>
<rect x="999" y="706.5" width="1" height="10" fill="#a08d7d"/>
<rect x="999" y="716.5" width="1" height="10" fill="#a08d7d"/>
<rect x="999" y="704" width="1" height="2.5" fill="#a9621f"/>
<rect x="999" y="726.5" width="1" height="2.5" fill="#a9621f"/>
<rect x="1080" y="706.5" width="1" height="10" fill="#93857b"/>
<rect x="1080" y="716.5" width="1" height="10" fill="#93857b"/>
<rect x="1080" y="704" width="1" height="2.5" fill="#92531b"/>
<rect x="1080" y="726.5" width="1" height="2.5" fill="#92531b"/>
<rect x="1161" y="706.5" width="1" height="10" fill="#877d78"/>
<rect x="1161" y="716.5" width="1" height="10" fill="#877d78"/>
<rect x="1161" y="704" width="1" height="2.5" fill="#7b4516"/>
<rect x="1161" y="726.5" width="1" height="2.5" fill="#7b4516"/>
<rect x="680" y="729" width="81.84" height="12.5" fill="#7b9fc5"/>
<rect x="680" y="741.5" width="81.84" height="12.5" fill="#7b9fc5"/>
<rect x="680" y="741" width="81.84" height="1" fill="#7284ac"/>
<rect x="680" y="729" width="81.84" height="2.5" fill="#9052a2"/>
<rect x="680" y="751.5" width="81.84" height="2.5" fill="#9052a2"/>
<rect x="761.14" y="729" width="81.84" height="12.5" fill="#7b9fc5"/>
<rect x="761.14" y="741.5" width="81.84" height="12.5" fill="#7b9fc5"/>
<rect x="761.14" y="741" width="81.84" height="1" fill="#7284ac"/>
<rect x="761.14" y="729" width="81.84" height="2.5" fill="#9052a2"/>
<rect x="761.14" y="751.5" width="81.84" height="2.5" fill="#9052a2"/>
<rect x="842.29" y="729" width="81.84" height="12.5" fill="#7b9fc5"/>
<rect x="842.29" y="741.5" width="81.84" height="12.5" fill="#7b9fc5"/>
<rect x="842.29" y="741" width="81.84" height="1" fill="#818c9a"/>
<rect x="842.29" y="729" width="81.84" height="2.5" fill="#f28c2c"/>
<rect x="842.29" y="751.5" width="81.84" height="2.5" fill="#f28c2c"/>
<rect x="923.43" y="729" width="81.84" height="12.5" fill="#7b9fc5"/>
<rect x="923.43" y="741.5" width="81.84" height="12.5" fill="#7b9fc5"/>
<rect x="923.43" y="741" width="81.84" height="1" fill="#818c9a"/>
<rect x="923.43" y="729" width="81.84" height="2.5" fill="#f28c2c"/>
<rect x="923.43" y="751.5" width="81.84" height="2.5" fill="#f28c2c"/>
<rect x="1004.57" y="729" width="81.84" height="12.5" fill="#7b9fc5"/>
<rect x="1004.57" y="741.5" width="81.84" height="12.5" fill="#7b9fc5"/>
<rect x="1004.57" y="741" width="81.84" height="1" fill="#818c9a"/>
<rect x="1004.57" y="729" width="81.84" height="2.5" fill="#f28c2c"/>
<rect x="1004.57" y="751.5" width="81.84" height="2.5" fill="#f28c2c"/>
<rect x="1085.71" y="729" width="81.84" height="12.5" fill="#c9da32"/>
<rect x="1085.71" y="741.5" width="81.84" height="12.5" fill="#c9da32"/>
<rect x="1085.71" y="741" width="81.84" height="1" fill="#a3a734"/>
<rect x="1085.71" y="729" width="81.84" height="2.5" fill="#521a5e"/>
<rect x="1085.71" y="751.5" width="81.84" height="2.5" fill="#521a5e"/>
<rect x="1166.86" y="729" width="81.14" height="12.5" fill="#a7d03c"/>
<rect x="1166.86" y="741.5" width="81.14" height="12.5" fill="#c9da32"/>
<rect x="1166.86" y="741" width="81.14" height="1" fill="#8aa03b"/>
<rect x="1166.86" y="729" width="81.14" height="2.5" fill="#521a5e"/>
<rect x="1166.86" y="751.5" width="81.14" height="2.5" fill="#521a5e"/>
<rect x="761" y="731.5" width="1" height="10" fill="#7a77aa"/>
<rect x="761" y="741.5" width="1" height="10" fill="#7a77aa"/>
<rect x="761" y="729" width="1" height="2.5" fill="#653971"/>
<rect x="761" y="751.5" width="1" height="2.5" fill="#653971"/>
<rect x="842" y="731.5" width="1" height="10" fill="#8d8293"/>
<rect x="842" y="741.5" width="1" height="10" fill="#8d8293"/>
<rect x="842" y="729" width="1" height="2.5" fill="#874e48"/>
<rect x="842" y="751.5" width="1" height="2.5" fill="#874e48"/>
<rect x="923" y="731.5" width="1" height="10" fill="#a08d7d"/>
<rect x="923" y="741.5" width="1" height="10" fill="#a08d7d"/>
<rect x="923" y="729" width="1" height="2.5" fill="#a9621f"/>
<rect x="923" y="751.5" width="1" height="2.5" fill="#a9621f"/>
<rect x="1004" y="731.5" width="1" height="10" fill="#a08d7d"/>
<rect x="1004" y="741.5" width="1" height="10" fill="#a08d7d"/>
<rect x="1004" y="729" width="1" height="2.5" fill="#a9621f"/>
<rect x="1004" y="751.5" width="1" height="2.5" fill="#a9621f"/>
<rect x="1085" y="731.5" width="1" height="10" fill="#97875e"/>
<rect x="1085" y="741.5" width="1" height="10" fill="#97875e"/>
<rect x="1085" y="729" width="1" height="2.5" fill="#713a30"/>
<rect x="1085" y="751.5" width="1" height="2.5" fill="#713a30"/>
<rect x="1166" y="731.5" width="1" height="10" fill="#847f42"/>
<rect x="1166" y="741.5" width="1" height="10" fill="#8e823f"/>
<rect x="1166" y="729" width="1" height="2.5" fill="#391242"/>
<rect x="1166" y="751.5" width="1" height="2.5" fill="#391242"/>
<rect x="685" y="754" width="81.84" height="12.5" fill="#7b9fc5"/>
<rect x="685" y="766.5" width="81.84" height="12.5" fill="#7b9fc5"/>
<rect x="685" y="766" width="81.84" height="1" fill="#7284ac"/>
<rect x="685" y="754" width="81.84" height="2.5" fill="#9052a2"/>
<rect x="685" y="776.5" width="81.84" height="2.5" fill="#9052a2"/>
<rect x="766.14" y="754" width="81.84" height="12.5" fill="#7b9fc5"/>
<rect x="766.14" y="766.5" width="81.84" height="12.5" fill="#7b9fc5"/>
<rect x="766.14" y="766" width="81.84" height="1" fill="#7284ac"/>
<rect x="766.14" y="754" width="81.84" height="2.5" fill="#9052a2"/>
<rect x="766.14" y="776.5" width="81.84" height="2.5" fill="#9052a2"/>
<rect x="847.29" y="754" width="81.84" height="12.5" fill="#7b9fc5"/>
<rect x="847.29" y="766.5" width="81.84" height="12.5" fill="#7b9fc5"/>
<rect x="847.29" y="766" width="81.84" height="1" fill="#818c9a"/>
<rect x="847.29" y="754" width="81.84" height="2.5" fill="#f28c2c"/>
<rect x="847.29" y="776.5" width="81.84" height="2.5" fill="#9052a2"/>
<rect x="928.43" y="754" width="81.84" height="12.5" fill="#e9e513"/>
<rect x="928.43" y="766.5" width="81.84" height="12.5" fill="#a7d03c"/>
<rect x="928.43" y="766" width="81.84" height="1" fill="#c3b223"/>
<rect x="928.43" y="754" width="81.84" height="2.5" fill="#85278c"/>
<rect x="928.43" y="776.5" width="81.84" height="2.5" fill="#85278c"/>
<rect x="1009.57" y="754" width="81.84" height="12.5" fill="#a7d03c"/>
<rect x="1009.57" y="766.5" width="81.84" height="12.5" fill="#a7d03c"/>
<rect x="1009.57" y="766" width="81.84" height="1" fill="#91a242"/>
<rect x="1009.57" y="754" width="81.84" height="2.5" fill="#85278c"/>
<rect x="1009.57" y="776.5" width="81.84" height="2.5" fill="#85278c"/>
<rect x="1090.71" y="754" width="81.84" height="12.5" fill="#c9da32"/>
<rect x="1090.71" y="766.5" width="81.84" height="12.5" fill="#a7d03c"/>
<rect x="1090.71" y="766" width="81.84" height="1" fill="#a3a734"/>
<rect x="1090.71" y="754" width="81.84" height="2.5" fill="#521a5e"/>
<rect x="1090.71" y="776.5" width="81.84" height="2.5" fill="#521a5e"/>
<rect x="1171.86" y="754" width="81.14" height="12.5" fill="#a7d03c"/>
<rect x="1171.86" y="766.5" width="81.14" height="12.5" fill="#c9da32"/>
<rect x="1171.86" y="766" width="81.14" height="1" fill="#8aa03b"/>
<rect x="1171.86" y="754" width="81.14" height="2.5" fill="#521a5e"/>
<rect x="1171.86" y="776.5" width="81.14" height="2.5" fill="#521a5e"/>
<rect x="766" y="756.5" width="1" height="10" fill="#7a77aa"/>
<rect x="766" y="766.5" width="1" height="10" fill="#7a77aa"/>
<rect x="766" y="754" width="1" height="2.5" fill="#653971"/>
<rect x="766" y="776.5" width="1" height="2.5" fill="#653971"/>
<rect x="847" y="756.5" width="1" height="10" fill="#8d8293"/>
<rect x="847" y="766.5" width="1" height="10" fill="#7a77aa"/>
<rect x="847" y="754" width="1" height="2.5" fill="#874e48"/>
<rect x="847" y="776.5" width="1" height="2.5" fill="#653971"/>
<rect x="928" y="756.5" width="1" height="10" fill="#a98d5e"/>
<rect x="928" y="766.5" width="1" height="10" fill="#847c80"/>
<rect x="928" y="754" width="1" height="2.5" fill="#843f40"/>
<rect x="928" y="776.5" width="1" height="2.5" fill="#612a6a"/>
<rect x="1009" y="756.5" width="1" height="10" fill="#a1874b"/>
<rect x="1009" y="766.5" width="1" height="10" fill="#8e8156"/>
<rect x="1009" y="754" width="1" height="2.5" fill="#5d1b62"/>
<rect x="1009" y="776.5" width="1" height="2.5" fill="#5d1b62"/>
<rect x="1090" y="756.5" width="1" height="10" fill="#8e814b"/>
<rect x="1090" y="766.5" width="1" height="10" fill="#857f4d"/>
<rect x="1090" y="754" width="1" height="2.5" fill="#4c1652"/>
<rect x="1090" y="776.5" width="1" height="2.5" fill="#4c1652"/>
<rect x="1171" y="756.5" width="1" height="10" fill="#847f42"/>
<rect x="1171" y="766.5" width="1" height="10" fill="#847f42"/>
<rect x="1171" y="754" width="1" height="2.5" fill="#391242"/>
<rect x="1171" y="776.5" width="1" height="2.5" fill="#391242"/>
<rect x="690" y="779" width="81.84" height="12.5" fill="#c9da32"/>
<rect x="690" y="791.5" width="81.84" height="12.5" fill="#a7d03c"/>
<rect x="690" y="791" width="81.84" height="1" fill="#a5c24a"/>
<rect x="690" y="779" width="81.84" height="2.5" fill="#5ecbf2"/>
<rect x="690" y="801.5" width="81.84" height="2.5" fill="#5ecbf2"/>
<rect x="771.14" y="779" width="81.84" height="12.5" fill="#e9e513"/>
<rect x="771.14" y="791.5" width="81.84" height="12.5" fill="#a7d03c"/>
<rect x="771.14" y="791" width="81.84" height="1" fill="#bdca33"/>
<rect x="771.14" y="779" width="81.84" height="2.5" fill="#5ecbf2"/>
<rect x="771.14" y="801.5" width="81.84" height="2.5" fill="#5ecbf2"/>
<rect x="852.29" y="779" width="81.84" height="12.5" fill="#c9da32"/>
<rect x="852.29" y="791.5" width="81.84" height="12.5" fill="#a7d03c"/>
<rect x="852.29" y="791" width="81.84" height="1" fill="#aba93a"/>
<rect x="852.29" y="779" width="81.84" height="2.5" fill="#85278c"/>
<rect x="852.29" y="801.5" width="81.84" height="2.5" fill="#85278c"/>
<rect x="933.43" y="779" width="81.84" height="12.5" fill="#c9da32"/>
<rect x="933.43" y="791.5" width="81.84" height="12.5" fill="#a7d03c"/>
<rect x="933.43" y="791" width="81.84" height="1" fill="#aba93a"/>
<rect x="933.43" y="779" width="81.84" height="2.5" fill="#85278c"/>
<rect x="933.43" y="801.5" width="81.84" height="2.5" fill="#85278c"/>
<rect x="1014.57" y="779" width="81.84" height="12.5" fill="#c9da32"/>
<rect x="1014.57" y="791.5" width="81.84" height="12.5" fill="#a7d03c"/>
<rect x="1014.57" y="791" width="81.84" height="1" fill="#aba93a"/>
<rect x="1014.57" y="779" width="81.84" height="2.5" fill="#85278c"/>
<rect x="1014.57" y="801.5" width="81.84" height="2.5" fill="#85278c"/>
<rect x="1095.71" y="779" width="81.84" height="12.5" fill="#a7d03c"/>
<rect x="1095.71" y="791.5" width="81.84" height="12.5" fill="#c9da32"/>
<rect x="1095.71" y="791" width="81.84" height="1" fill="#8aa03b"/>
<rect x="1095.71" y="779" width="81.84" height="2.5" fill="#521a5e"/>
<rect x="1095.71" y="801.5" width="81.84" height="2.5" fill="#521a5e"/>
<rect x="1176.86" y="779" width="81.14" height="12.5" fill="#7b9fc5"/>
<rect x="1176.86" y="791.5" width="81.14" height="12.5" fill="#7b9fc5"/>
<rect x="1176.86" y="791" width="81.14" height="1" fill="#697ba2"/>
<rect x="1176.86" y="779" width="81.14" height="2.5" fill="#521a5e"/>
<rect x="1176.86" y="801.5" width="81.14" height="2.5" fill="#521a5e"/>
<rect x="771" y="781.5" width="1" height="10" fill="#9bc86f"/>
<rect x="771" y="791.5" width="1" height="10" fill="#80c07d"/>
<rect x="771" y="779" width="1" height="2.5" fill="#428ea9"/>
<rect x="771" y="801.5" width="1" height="2.5" fill="#428ea9"/>
<rect x="852" y="781.5" width="1" height="10" fill="#a3a95b"/>
<rect x="852" y="791.5" width="1" height="10" fill="#87a06a"/>
<rect x="852" y="779" width="1" height="2.5" fill="#505586"/>
<rect x="852" y="801.5" width="1" height="2.5" fill="#505586"/>
<rect x="933" y="781.5" width="1" height="10" fill="#a18751"/>
<rect x="933" y="791.5" width="1" height="10" fill="#8e8156"/>
<rect x="933" y="779" width="1" height="2.5" fill="#5d1b62"/>
<rect x="933" y="801.5" width="1" height="2.5" fill="#5d1b62"/>
<rect x="1014" y="781.5" width="1" height="10" fill="#a18751"/>
<rect x="1014" y="791.5" width="1" height="10" fill="#8e8156"/>
<rect x="1014" y="779" width="1" height="2.5" fill="#5d1b62"/>
<rect x="1014" y="801.5" width="1" height="2.5" fill="#5d1b62"/>
<rect x="1095" y="781.5" width="1" height="10" fill="#8e814b"/>
<rect x="1095" y="791.5" width="1" height="10" fill="#8e814b"/>
<rect x="1095" y="779" width="1" height="2.5" fill="#4c1652"/>
<rect x="1095" y="801.5" width="1" height="2.5" fill="#4c1652"/>
<rect x="1176" y="781.5" width="1" height="10" fill="#6f6f6a"/>
<rect x="1176" y="791.5" width="1" height="10" fill="#787168"/>
<rect x="1176" y="779" width="1" height="2.5" fill="#391242"/>
<rect x="1176" y="801.5" width="1" height="2.5" fill="#391242"/>
<rect x="695" y="804" width="81.84" height="12.5" fill="#a7d03c"/>
<rect x="695" y="816.5" width="81.84" height="12.5" fill="#a7d03c"/>
<rect x="695" y="816" width="81.84" height="1" fill="#8bba51"/>
<rect x="695" y="804" width="81.84" height="2.5" fill="#5ecbf2"/>
<rect x="695" y="826.5" width="81.84" height="2.5" fill="#5ecbf2"/>
<rect x="776.14" y="804" width="81.84" height="12.5" fill="#a7d03c"/>
<rect x="776.14" y="816.5" width="81.84" height="12.5" fill="#c9da32"/>
<rect x="776.14" y="816" width="81.84" height="1" fill="#8bba51"/>
<rect x="776.14" y="804" width="81.84" height="2.5" fill="#5ecbf2"/>
<rect x="776.14" y="826.5" width="81.84" height="2.5" fill="#5ecbf2"/>
<rect x="857.29" y="804" width="81.84" height="12.5" fill="#7b9fc5"/>
<rect x="857.29" y="816.5" width="81.84" height="12.5" fill="#7b9fc5"/>
<rect x="857.29" y="816" width="81.84" height="1" fill="#707da9"/>
<rect x="857.29" y="804" width="81.84" height="2.5" fill="#85278c"/>
<rect x="857.29" y="826.5" width="81.84" height="2.5" fill="#85278c"/>
<rect x="938.43" y="804" width="81.84" height="12.5" fill="#7b9fc5"/>
<rect x="938.43" y="816.5" width="81.84" height="12.5" fill="#7b9fc5"/>
<rect x="938.43" y="816" width="81.84" height="1" fill="#707da9"/>
<rect x="938.43" y="804" width="81.84" height="2.5" fill="#85278c"/>
<rect x="938.43" y="826.5" width="81.84" height="2.5" fill="#85278c"/>
<rect x="1019.57" y="804" width="81.84" height="12.5" fill="#7b9fc5"/>
<rect x="1019.57" y="816.5" width="81.84" height="12.5" fill="#7b9fc5"/>
<rect x="1019.57" y="816" width="81.84" height="1" fill="#707da9"/>
<rect x="1019.57" y="804" width="81.84" height="2.5" fill="#85278c"/>
<rect x="1019.57" y="826.5" width="81.84" height="2.5" fill="#85278c"/>
<rect x="1100.71" y="804" width="81.84" height="12.5" fill="#7b9fc5"/>
<rect x="1100.71" y="816.5" width="81.84" height="12.5" fill="#7b9fc5"/>
<rect x="1100.71" y="816" width="81.84" height="1" fill="#697ba2"/>
<rect x="1100.71" y="804" width="81.84" height="2.5" fill="#521a5e"/>
<rect x="1100.71" y="826.5" width="81.84" height="2.5" fill="#521a5e"/>
<rect x="1181.86" y="804" width="81.14" height="12.5" fill="#7b9fc5"/>
<rect x="1181.86" y="816.5" width="81.14" height="12.5" fill="#7b9fc5"/>
<rect x="1181.86" y="816" width="81.14" height="1" fill="#697ba2"/>
<rect x="1181.86" y="804" width="81.14" height="2.5" fill="#521a5e"/>
<rect x="1181.86" y="826.5" width="81.14" height="2.5" fill="#521a5e"/>
<rect x="776" y="806.5" width="1" height="10" fill="#80c07d"/>
<rect x="776" y="816.5" width="1" height="10" fill="#89c27a"/>
<rect x="776" y="804" width="1" height="2.5" fill="#428ea9"/>
<rect x="776" y="826.5" width="1" height="2.5" fill="#428ea9"/>
<rect x="857" y="806.5" width="1" height="10" fill="#7b938f"/>
<rect x="857" y="816.5" width="1" height="10" fill="#84958d"/>
<rect x="857" y="804" width="1" height="2.5" fill="#505586"/>
<rect x="857" y="826.5" width="1" height="2.5" fill="#505586"/>
<rect x="938" y="806.5" width="1" height="10" fill="#7666a2"/>
<rect x="938" y="816.5" width="1" height="10" fill="#7666a2"/>
<rect x="938" y="804" width="1" height="2.5" fill="#5d1b62"/>
<rect x="938" y="826.5" width="1" height="2.5" fill="#5d1b62"/>
<rect x="1019" y="806.5" width="1" height="10" fill="#7666a2"/>
<rect x="1019" y="816.5" width="1" height="10" fill="#7666a2"/>
<rect x="1019" y="804" width="1" height="2.5" fill="#5d1b62"/>
<rect x="1019" y="826.5" width="1" height="2.5" fill="#5d1b62"/>
<rect x="1100" y="806.5" width="1" height="10" fill="#6d6499"/>
<rect x="1100" y="816.5" width="1" height="10" fill="#6d6499"/>
<rect x="1100" y="804" width="1" height="2.5" fill="#4c1652"/>
<rect x="1100" y="826.5" width="1" height="2.5" fill="#4c1652"/>
<rect x="1181" y="806.5" width="1" height="10" fill="#636190"/>
<rect x="1181" y="816.5" width="1" height="10" fill="#636190"/>
<rect x="1181" y="804" width="1" height="2.5" fill="#391242"/>
<rect x="1181" y="826.5" width="1" height="2.5" fill="#391242"/>
<rect x="700" y="829" width="81.84" height="12.5" fill="#a7d03c"/>
<rect x="700" y="841.5" width="81.84" height="12.5" fill="#c9da32"/>
<rect x="700" y="841" width="81.84" height="1" fill="#8bba51"/>
<rect x="700" y="829" width="81.84" height="2.5" fill="#5ecbf2"/>
<rect x="700" y="851.5" width="81.84" height="2.5" fill="#5ecbf2"/>
<rect x="781.14" y="829" width="81.84" height="12.5" fill="#7b9fc5"/>
<rect x="781.14" y="841.5" width="81.84" height="12.5" fill="#7b9fc5"/>
<rect x="781.14" y="841" width="81.84" height="1" fill="#6a96b8"/>
<rect x="781.14" y="829" width="81.84" height="2.5" fill="#5ecbf2"/>
<rect x="781.14" y="851.5" width="81.84" height="2.5" fill="#5ecbf2"/>
<rect x="862.29" y="829" width="81.84" height="12.5" fill="#7b9fc5"/>
<rect x="862.29" y="841.5" width="81.84" height="12.5" fill="#7b9fc5"/>
<rect x="862.29" y="841" width="81.84" height="1" fill="#707da9"/>
<rect x="862.29" y="829" width="81.84" height="2.5" fill="#85278c"/>
<rect x="862.29" y="851.5" width="81.84" height="2.5" fill="#85278c"/>
<rect x="943.43" y="829" width="81.84" height="12.5" fill="#7b9fc5"/>
<rect x="943.43" y="841.5" width="81.84" height="12.5" fill="#7b9fc5"/>
<rect x="943.43" y="841" width="81.84" height="1" fill="#707da9"/>
<rect x="943.43" y="829" width="81.84" height="2.5" fill="#85278c"/>
<rect x="943.43" y="851.5" width="81.84" height="2.5" fill="#85278c"/>
<rect x="1024.57" y="829" width="81.84" height="12.5" fill="#7b9fc5"/>
<rect x="1024.57" y="841.5" width="81.84" height="12.5" fill="#7b9fc5"/>
<rect x="1024.57" y="841" width="81.84" height="1" fill="#707da9"/>
<rect x="1024.57" y="829" width="81.84" height="2.5" fill="#85278c"/>
<rect x="1024.57" y="851.5" width="81.84" height="2.5" fill="#85278c"/>
<rect x="1105.71" y="829" width="81.84" height="12.5" fill="#7b9fc5"/>
<rect x="1105.71" y="841.5" width="81.84" height="12.5" fill="#7b9fc5"/>
<rect x="1105.71" y="841" width="81.84" height="1" fill="#697ba2"/>
<rect x="1105.71" y="829" width="81.84" height="2.5" fill="#521a5e"/>
<rect x="1105.71" y="851.5" width="81.84" height="2.5" fill="#521a5e"/>
<rect x="1186.86" y="829" width="81.14" height="12.5" fill="#7b9fc5"/>
<rect x="1186.86" y="841.5" width="81.14" height="12.5" fill="#7b9fc5"/>
<rect x="1186.86" y="841" width="81.14" height="1" fill="#697ba2"/>
<rect x="1186.86" y="829" width="81.14" height="2.5" fill="#521a5e"/>
<rect x="1186.86" y="851.5" width="81.14" height="2.5" fill="#521a5e"/>
<rect x="781" y="831.5" width="1" height="10" fill="#73b2a2"/>
<rect x="781" y="841.5" width="1" height="10" fill="#7db5a0"/>
<rect x="781" y="829" width="1" height="2.5" fill="#428ea9"/>
<rect x="781" y="851.5" width="1" height="2.5" fill="#428ea9"/>
<rect x="862" y="831.5" width="1" height="10" fill="#6f85b5"/>
<rect x="862" y="841.5" width="1" height="10" fill="#6f85b5"/>
<rect x="862" y="829" width="1" height="2.5" fill="#505586"/>
<rect x="862" y="851.5" width="1" height="2.5" fill="#505586"/>
<rect x="943" y="831.5" width="1" height="10" fill="#7666a2"/>
<rect x="943" y="841.5" width="1" height="10" fill="#7666a2"/>
<rect x="943" y="829" width="1" height="2.5" fill="#5d1b62"/>
<rect x="943" y="851.5" width="1" height="2.5" fill="#5d1b62"/>
<rect x="1024" y="831.5" width="1" height="10" fill="#7666a2"/>
<rect x="1024" y="841.5" width="1" height="10" fill="#7666a2"/>
<rect x="1024" y="829" width="1" height="2.5" fill="#5d1b62"/>
<rect x="1024" y="851.5" width="1" height="2.5" fill="#5d1b62"/>
<rect x="1105" y="831.5" width="1" height="10" fill="#6d6499"/>
<rect x="1105" y="841.5" width="1" height="10" fill="#6d6499"/>
<rect x="1105" y="829" width="1" height="2.5" fill="#4c1652"/>
<rect x="1105" y="851.5" width="1" height="2.5" fill="#4c1652"/>
<rect x="1186" y="831.5" width="1" height="10" fill="#636190"/>
<rect x="1186" y="841.5" width="1" height="10" fill="#636190"/>
<rect x="1186" y="829" width="1" height="2.5" fill="#391242"/>
<rect x="1186" y="851.5" width="1" height="2.5" fill="#391242"/>
<rect x="705" y="854" width="81.84" height="12.5" fill="#7b9fc5"/>
<rect x="705" y="866.5" width="81.84" height="12.5" fill="#7b9fc5"/>
<rect x="705" y="866" width="81.84" height="1" fill="#6a96b8"/>
<rect x="705" y="854" width="81.84" height="2.5" fill="#5ecbf2"/>
<rect x="705" y="876.5" width="81.84" height="2.5" fill="#5ecbf2"/>
<rect x="786.14" y="854" width="81.84" height="12.5" fill="#7b9fc5"/>
<rect x="786.14" y="866.5" width="81.84" height="12.5" fill="#7b9fc5"/>
<rect x="786.14" y="866" width="81.84" height="1" fill="#6a96b8"/>
<rect x="786.14" y="854" width="81.84" height="2.5" fill="#5ecbf2"/>
<rect x="786.14" y="876.5" width="81.84" height="2.5" fill="#5ecbf2"/>
<rect x="867.29" y="854" width="81.84" height="12.5" fill="#7b9fc5"/>
<rect x="867.29" y="866.5" width="81.84" height="12.5" fill="#d02a1c"/>
<rect x="867.29" y="866" width="81.84" height="1" fill="#6a96b8"/>
<rect x="867.29" y="854" width="81.84" height="2.5" fill="#5ecbf2"/>
<rect x="867.29" y="876.5" width="81.84" height="2.5" fill="#b4a63a"/>
<rect x="948.43" y="854" width="81.84" height="12.5" fill="#7b9fc5"/>
<rect x="948.43" y="866.5" width="81.84" height="12.5" fill="#7b9fc5"/>
<rect x="948.43" y="866" width="81.84" height="1" fill="#707da9"/>
<rect x="948.43" y="854" width="81.84" height="2.5" fill="#85278c"/>
<rect x="948.43" y="876.5" width="81.84" height="2.5" fill="#85278c"/>
<rect x="1029.57" y="854" width="81.84" height="12.5" fill="#7b9fc5"/>
<rect x="1029.57" y="866.5" width="81.84" height="12.5" fill="#7b9fc5"/>
<rect x="1029.57" y="866" width="81.84" height="1" fill="#707da9"/>
<rect x="1029.57" y="854" width="81.84" height="2.5" fill="#85278c"/>
<rect x="1029.57" y="876.5" width="81.84" height="2.5" fill="#521a5e"/>
<rect x="1110.71" y="854" width="81.84" height="12.5" fill="#7b9fc5"/>
<rect x="1110.71" y="866.5" width="81.84" height="12.5" fill="#7b9fc5"/>
<rect x="1110.71" y="866" width="81.84" height="1" fill="#697ba2"/>
<rect x="1110.71" y="854" width="81.84" height="2.5" fill="#521a5e"/>
<rect x="1110.71" y="876.5" width="81.84" height="2.5" fill="#521a5e"/>
<rect x="1191.86" y="854" width="81.14" height="12.5" fill="#7b9fc5"/>
<rect x="1191.86" y="866.5" width="81.14" height="12.5" fill="#7b9fc5"/>
<rect x="1191.86" y="866" width="81.14" height="1" fill="#697ba2"/>
<rect x="1191.86" y="854" width="81.14" height="2.5" fill="#521a5e"/>
<rect x="1191.86" y="876.5" width="81.14" height="2.5" fill="#521a5e"/>
<rect x="786" y="856.5" width="1" height="10" fill="#67a5c8"/>
<rect x="786" y="866.5" width="1" height="10" fill="#67a5c8"/>
<rect x="786" y="854" width="1" height="2.5" fill="#428ea9"/>
<rect x="786" y="876.5" width="1" height="2.5" fill="#428ea9"/>
<rect x="867" y="856.5" width="1" height="10" fill="#67a5c8"/>
<rect x="867" y="866.5" width="1" height="10" fill="#8f7d77"/>
<rect x="867" y="854" width="1" height="2.5" fill="#428ea9"/>
<rect x="867" y="876.5" width="1" height="2.5" fill="#608169"/>
<rect x="948" y="856.5" width="1" height="10" fill="#6f85b5"/>
<rect x="948" y="866.5" width="1" height="10" fill="#975e63"/>
<rect x="948" y="854" width="1" height="2.5" fill="#505586"/>
<rect x="948" y="876.5" width="1" height="2.5" fill="#6d4745"/>
<rect x="1029" y="856.5" width="1" height="10" fill="#7666a2"/>
<rect x="1029" y="866.5" width="1" height="10" fill="#6d6499"/>
<rect x="1029" y="854" width="1" height="2.5" fill="#5d1b62"/>
<rect x="1029" y="876.5" width="1" height="2.5" fill="#4c1652"/>
<rect x="1110" y="856.5" width="1" height="10" fill="#6d6499"/>
<rect x="1110" y="866.5" width="1" height="10" fill="#636190"/>
<rect x="1110" y="854" width="1" height="2.5" fill="#4c1652"/>
<rect x="1110" y="876.5" width="1" height="2.5" fill="#391242"/>
<rect x="1191" y="856.5" width="1" height="10" fill="#636190"/>
<rect x="1191" y="866.5" width="1" height="10" fill="#636190"/>
<rect x="1191" y="854" width="1" height="2.5" fill="#391242"/>
<rect x="1191" y="876.5" width="1" height="2.5" fill="#391242"/>
<rect x="710" y="879" width="81.84" height="12.5" fill="#7b9fc5"/>
<rect x="710" y="891.5" width="81.84" height="12.5" fill="#7b9fc5"/>
<rect x="710" y="891" width="81.84" height="1" fill="#6a96b8"/>
<rect x="710" y="879" width="81.84" height="2.5" fill="#5ecbf2"/>
<rect x="710" y="901.5" width="81.84" height="2.5" fill="#5ecbf2"/>
<rect x="791.14" y="879" width="81.84" height="12.5" fill="#7b9fc5"/>
<rect x="791.14" y="891.5" width="81.84" height="12.5" fill="#7b9fc5"/>
<rect x="791.14" y="891" width="81.84" height="1" fill="#6a96b8"/>
<rect x="791.14" y="879" width="81.84" height="2.5" fill="#5ecbf2"/>
<rect x="791.14" y="901.5" width="81.84" height="2.5" fill="#5ecbf2"/>
<rect x="872.29" y="879" width="81.84" height="12.5" fill="#d02a1c"/>
<rect x="872.29" y="891.5" width="81.84" height="12.5" fill="#d02a1c"/>
<rect x="872.29" y="891" width="81.84" height="1" fill="#b7381e"/>
<rect x="872.29" y="879" width="81.84" height="2.5" fill="#b4a63a"/>
<rect x="872.29" y="901.5" width="81.84" height="2.5" fill="#b4a63a"/>
<rect x="953.43" y="879" width="81.84" height="12.5" fill="#d02a1c"/>
<rect x="953.43" y="891.5" width="81.84" height="12.5" fill="#d02a1c"/>
<rect x="953.43" y="891" width="81.84" height="1" fill="#b7381e"/>
<rect x="953.43" y="879" width="81.84" height="2.5" fill="#b4a63a"/>
<rect x="953.43" y="901.5" width="81.84" height="2.5" fill="#b4a63a"/>
<rect x="1034.57" y="879" width="81.84" height="12.5" fill="#d02a1c"/>
<rect x="1034.57" y="891.5" width="81.84" height="12.5" fill="#d02a1c"/>
<rect x="1034.57" y="891" width="81.84" height="1" fill="#b7381e"/>
<rect x="1034.57" y="879" width="81.84" height="2.5" fill="#b4a63a"/>
<rect x="1034.57" y="901.5" width="81.84" height="2.5" fill="#b4a63a"/>
<rect x="1115.71" y="879" width="81.84" height="12.5" fill="#d02a1c"/>
<rect x="1115.71" y="891.5" width="81.84" height="12.5" fill="#d02a1c"/>
<rect x="1115.71" y="891" width="81.84" height="1" fill="#c0341c"/>
<rect x="1115.71" y="879" width="81.84" height="2.5" fill="#f28c2c"/>
<rect x="1115.71" y="901.5" width="81.84" height="2.5" fill="#f28c2c"/>
<rect x="1196.86" y="879" width="81.14" height="12.5" fill="#d02a1c"/>
<rect x="1196.86" y="891.5" width="81.14" height="12.5" fill="#d02a1c"/>
<rect x="1196.86" y="891" width="81.14" height="1" fill="#c0341c"/>
<rect x="1196.86" y="879" width="81.14" height="2.5" fill="#f28c2c"/>
<rect x="1196.86" y="901.5" width="81.14" height="2.5" fill="#f28c2c"/>
<rect x="791" y="881.5" width="1" height="10" fill="#67a5c8"/>
<rect x="791" y="891.5" width="1" height="10" fill="#67a5c8"/>
<rect x="791" y="879" width="1" height="2.5" fill="#428ea9"/>
<rect x="791" y="901.5" width="1" height="2.5" fill="#428ea9"/>
<rect x="872" y="881.5" width="1" height="10" fill="#8f7d77"/>
<rect x="872" y="891.5" width="1" height="10" fill="#8f7d77"/>
<rect x="872" y="879" width="1" height="2.5" fill="#608169"/>
<rect x="872" y="901.5" width="1" height="2.5" fill="#608169"/>
<rect x="953" y="881.5" width="1" height="10" fill="#b75625"/>
<rect x="953" y="891.5" width="1" height="10" fill="#b75625"/>
<rect x="953" y="879" width="1" height="2.5" fill="#7e7429"/>
<rect x="953" y="901.5" width="1" height="2.5" fill="#7e7429"/>
<rect x="1034" y="881.5" width="1" height="10" fill="#b75625"/>
<rect x="1034" y="891.5" width="1" height="10" fill="#b75625"/>
<rect x="1034" y="879" width="1" height="2.5" fill="#7e7429"/>
<rect x="1034" y="901.5" width="1" height="2.5" fill="#7e7429"/>
<rect x="1115" y="881.5" width="1" height="10" fill="#c35123"/>
<rect x="1115" y="891.5" width="1" height="10" fill="#c35123"/>
<rect x="1115" y="879" width="1" height="2.5" fill="#946b24"/>
<rect x="1115" y="901.5" width="1" height="2.5" fill="#946b24"/>
<rect x="1196" y="881.5" width="1" height="10" fill="#ce4c20"/>
<rect x="1196" y="891.5" width="1" height="10" fill="#ce4c20"/>
<rect x="1196" y="879" width="1" height="2.5" fill="#a9621f"/>
<rect x="1196" y="901.5" width="1" height="2.5" fill="#a9621f"/>
<rect x="715" y="904" width="81.84" height="12.5" fill="#7b9fc5"/>
<rect x="715" y="916.5" width="81.84" height="12.5" fill="#7b9fc5"/>
<rect x="715" y="916" width="81.84" height="1" fill="#6a96b8"/>
<rect x="715" y="904" width="81.84" height="2.5" fill="#5ecbf2"/>
<rect x="715" y="926.5" width="81.84" height="2.5" fill="#5ecbf2"/>
<rect x="796.14" y="904" width="81.84" height="12.5" fill="#7b9fc5"/>
<rect x="796.14" y="916.5" width="81.84" height="12.5" fill="#7b9fc5"/>
<rect x="796.14" y="916" width="81.84" height="1" fill="#6a96b8"/>
<rect x="796.14" y="904" width="81.84" height="2.5" fill="#5ecbf2"/>
<rect x="796.14" y="926.5" width="81.84" height="2.5" fill="#5ecbf2"/>
<rect x="877.29" y="904" width="81.84" height="12.5" fill="#d02a1c"/>
<rect x="877.29" y="916.5" width="81.84" height="12.5" fill="#d02a1c"/>
<rect x="877.29" y="916" width="81.84" height="1" fill="#b7381e"/>
<rect x="877.29" y="904" width="81.84" height="2.5" fill="#b4a63a"/>
<rect x="877.29" y="926.5" width="81.84" height="2.5" fill="#b4a63a"/>
<rect x="958.43" y="904" width="81.84" height="12.5" fill="#d02a1c"/>
<rect x="958.43" y="916.5" width="81.84" height="12.5" fill="#d02a1c"/>
<rect x="958.43" y="916" width="81.84" height="1" fill="#b7381e"/>
<rect x="958.43" y="904" width="81.84" height="2.5" fill="#b4a63a"/>
<rect x="958.43" y="926.5" width="81.84" height="2.5" fill="#b4a63a"/>
<rect x="1039.57" y="904" width="81.84" height="12.5" fill="#d02a1c"/>
<rect x="1039.57" y="916.5" width="81.84" height="12.5" fill="#d02a1c"/>
<rect x="1039.57" y="916" width="81.84" height="1" fill="#b7381e"/>
<rect x="1039.57" y="904" width="81.84" height="2.5" fill="#b4a63a"/>
<rect x="1039.57" y="926.5" width="81.84" height="2.5" fill="#b4a63a"/>
<rect x="1120.71" y="904" width="81.84" height="12.5" fill="#d02a1c"/>
<rect x="1120.71" y="916.5" width="81.84" height="12.5" fill="#d02a1c"/>
<rect x="1120.71" y="916" width="81.84" height="1" fill="#c0341c"/>
<rect x="1120.71" y="904" width="81.84" height="2.5" fill="#f28c2c"/>
<rect x="1120.71" y="926.5" width="81.84" height="2.5" fill="#f28c2c"/>
<rect x="1201.86" y="904" width="81.14" height="12.5" fill="#d02a1c"/>
<rect x="1201.86" y="916.5" width="81.14" height="12.5" fill="#d02a1c"/>
<rect x="1201.86" y="916" width="81.14" height="1" fill="#c0341c"/>
<rect x="1201.86" y="904" width="81.14" height="2.5" fill="#f28c2c"/>
<rect x="1201.86" y="926.5" width="81.14" height="2.5" fill="#f28c2c"/>
<rect x="796" y="906.5" width="1" height="10" fill="#67a5c8"/>
<rect x="796" y="916.5" width="1" height="10" fill="#67a5c8"/>
<rect x="796" y="904" width="1" height="2.5" fill="#428ea9"/>
<rect x="796" y="926.5" width="1" height="2.5" fill="#428ea9"/>
<rect x="877" y="906.5" width="1" height="10" fill="#8f7d77"/>
<rect x="877" y="916.5" width="1" height="10" fill="#8f7d77"/>
<rect x="877" y="904" width="1" height="2.5" fill="#608169"/>
<rect x="877" y="926.5" width="1" height="2.5" fill="#608169"/>
<rect x="958" y="906.5" width="1" height="10" fill="#b75625"/>
<rect x="958" y="916.5" width="1" height="10" fill="#b75625"/>
<rect x="958" y="904" width="1" height="2.5" fill="#7e7429"/>
<rect x="958" y="926.5" width="1" height="2.5" fill="#7e7429"/>
<rect x="1039" y="906.5" width="1" height="10" fill="#b75625"/>
<rect x="1039" y="916.5" width="1" height="10" fill="#b75625"/>
<rect x="1039" y="904" width="1" height="2.5" fill="#7e7429"/>
<rect x="1039" y="926.5" width="1" height="2.5" fill="#7e7429"/>
<rect x="1120" y="906.5" width="1" height="10" fill="#c35123"/>
<rect x="1120" y="916.5" width="1" height="10" fill="#c35123"/>
<rect x="1120" y="904" width="1" height="2.5" fill="#946b24"/>
<rect x="1120" y="926.5" width="1" height="2.5" fill="#946b24"/>
<rect x="1201" y="906.5" width="1" height="10" fill="#ce4c20"/>
<rect x="1201" y="916.5" width="1" height="10" fill="#ce4c20"/>
<rect x="1201" y="904" width="1" height="2.5" fill="#a9621f"/>
<rect x="1201" y="926.5" width="1" height="2.5" fill="#a9621f"/>
<rect x="720" y="929" width="81.84" height="12.5" fill="#d02a1c"/>
<rect x="720" y="941.5" width="81.84" height="12.5" fill="#d02a1c"/>
<rect x="720" y="941" width="81.84" height="1" fill="#b62e1a"/>
<rect x="720" y="929" width="81.84" height="2.5" fill="#b0621f"/>
<rect x="720" y="951.5" width="81.84" height="2.5" fill="#b0621f"/>
<rect x="801.14" y="929" width="81.84" height="12.5" fill="#d02a1c"/>
<rect x="801.14" y="941.5" width="81.84" height="12.5" fill="#d02a1c"/>
<rect x="801.14" y="941" width="81.84" height="1" fill="#b62e1a"/>
<rect x="801.14" y="929" width="81.84" height="2.5" fill="#b0621f"/>
<rect x="801.14" y="951.5" width="81.84" height="2.5" fill="#b0621f"/>
<rect x="882.29" y="929" width="81.84" height="12.5" fill="#d02a1c"/>
<rect x="882.29" y="941.5" width="81.84" height="12.5" fill="#d02a1c"/>
<rect x="882.29" y="941" width="81.84" height="1" fill="#b7381e"/>
<rect x="882.29" y="929" width="81.84" height="2.5" fill="#b4a63a"/>
<rect x="882.29" y="951.5" width="81.84" height="2.5" fill="#b4a63a"/>
<rect x="963.43" y="929" width="81.84" height="12.5" fill="#d02a1c"/>
<rect x="963.43" y="941.5" width="81.84" height="12.5" fill="#d02a1c"/>
<rect x="963.43" y="941" width="81.84" height="1" fill="#b7381e"/>
<rect x="963.43" y="929" width="81.84" height="2.5" fill="#b4a63a"/>
<rect x="963.43" y="951.5" width="81.84" height="2.5" fill="#b4a63a"/>
<rect x="1044.57" y="929" width="81.84" height="12.5" fill="#d02a1c"/>
<rect x="1044.57" y="941.5" width="81.84" height="12.5" fill="#d02a1c"/>
<rect x="1044.57" y="941" width="81.84" height="1" fill="#b7381e"/>
<rect x="1044.57" y="929" width="81.84" height="2.5" fill="#b4a63a"/>
<rect x="1044.57" y="951.5" width="81.84" height="2.5" fill="#b4a63a"/>
<rect x="1125.71" y="929" width="81.84" height="12.5" fill="#d02a1c"/>
<rect x="1125.71" y="941.5" width="81.84" height="12.5" fill="#d02a1c"/>
<rect x="1125.71" y="941" width="81.84" height="1" fill="#c0341c"/>
<rect x="1125.71" y="929" width="81.84" height="2.5" fill="#f28c2c"/>
<rect x="1125.71" y="951.5" width="81.84" height="2.5" fill="#f28c2c"/>
<rect x="1206.86" y="929" width="81.14" height="12.5" fill="#d02a1c"/>
<rect x="1206.86" y="941.5" width="81.14" height="12.5" fill="#d02a1c"/>
<rect x="1206.86" y="941" width="81.14" height="1" fill="#c0341c"/>
<rect x="1206.86" y="929" width="81.14" height="2.5" fill="#f28c2c"/>
<rect x="1206.86" y="951.5" width="81.14" height="2.5" fill="#f28c2c"/>
<rect x="801" y="931.5" width="1" height="10" fill="#b53c1b"/>
<rect x="801" y="941.5" width="1" height="10" fill="#b53c1b"/>
<rect x="801" y="929" width="1" height="2.5" fill="#7b4516"/>
<rect x="801" y="951.5" width="1" height="2.5" fill="#7b4516"/>
<rect x="882" y="931.5" width="1" height="10" fill="#b64920"/>
<rect x="882" y="941.5" width="1" height="10" fill="#b64920"/>
<rect x="882" y="929" width="1" height="2.5" fill="#7d5c1f"/>
<rect x="882" y="951.5" width="1" height="2.5" fill="#7d5c1f"/>
<rect x="963" y="931.5" width="1" height="10" fill="#b75625"/>
<rect x="963" y="941.5" width="1" height="10" fill="#b75625"/>
<rect x="963" y="929" width="1" height="2.5" fill="#7e7429"/>
<rect x="963" y="951.5" width="1" height="2.5" fill="#7e7429"/>
<rect x="1044" y="931.5" width="1" height="10" fill="#b75625"/>
<rect x="1044" y="941.5" width="1" height="10" fill="#b75625"/>
<rect x="1044" y="929" width="1" height="2.5" fill="#7e7429"/>
<rect x="1044" y="951.5" width="1" height="2.5" fill="#7e7429"/>
<rect x="1125" y="931.5" width="1" height="10" fill="#c35123"/>
<rect x="1125" y="941.5" width="1" height="10" fill="#c35123"/>
<rect x="1125" y="929" width="1" height="2.5" fill="#946b24"/>
<rect x="1125" y="951.5" width="1" height="2.5" fill="#946b24"/>
<rect x="1206" y="931.5" width="1" height="10" fill="#ce4c20"/>
<rect x="1206" y="941.5" width="1" height="10" fill="#ce4c20"/>
<rect x="1206" y="929" width="1" height="2.5" fill="#a9621f"/>
<rect x="1206" y="951.5" width="1" height="2.5" fill="#a9621f"/>
<rect x="725" y="954" width="81.84" height="12.5" fill="#d02a1c"/>
<rect x="725" y="966.5" width="81.84" height="12.5" fill="#d02a1c"/>
<rect x="725" y="966" width="81.84" height="1" fill="#b62e1a"/>
<rect x="725" y="954" width="81.84" height="2.5" fill="#b0621f"/>
<rect x="725" y="976.5" width="81.84" height="2.5" fill="#b0621f"/>
<rect x="806.14" y="954" width="81.84" height="12.5" fill="#d02a1c"/>
<rect x="806.14" y="966.5" width="81.84" height="12.5" fill="#d02a1c"/>
<rect x="806.14" y="966" width="81.84" height="1" fill="#b62e1a"/>
<rect x="806.14" y="954" width="81.84" height="2.5" fill="#b0621f"/>
<rect x="806.14" y="976.5" width="81.84" height="2.5" fill="#b0621f"/>
<rect x="887.29" y="954" width="81.84" height="12.5" fill="#d02a1c"/>
<rect x="887.29" y="966.5" width="81.84" height="12.5" fill="#d02a1c"/>
<rect x="887.29" y="966" width="81.84" height="1" fill="#b7381e"/>
<rect x="887.29" y="954" width="81.84" height="2.5" fill="#b4a63a"/>
<rect x="887.29" y="976.5" width="81.84" height="2.5" fill="#b4a63a"/>
<rect x="968.43" y="954" width="81.84" height="12.5" fill="#d02a1c"/>
<rect x="968.43" y="966.5" width="81.84" height="12.5" fill="#d02a1c"/>
<rect x="968.43" y="966" width="81.84" height="1" fill="#b7381e"/>
<rect x="968.43" y="954" width="81.84" height="2.5" fill="#b4a63a"/>
<rect x="968.43" y="976.5" width="81.84" height="2.5" fill="#b4a63a"/>
<rect x="1049.57" y="954" width="81.84" height="12.5" fill="#d02a1c"/>
<rect x="1049.57" y="966.5" width="81.84" height="12.5" fill="#d02a1c"/>
<rect x="1049.57" y="966" width="81.84" height="1" fill="#b7381e"/>
<rect x="1049.57" y="954" width="81.84" height="2.5" fill="#b4a63a"/>
<rect x="1049.57" y="976.5" width="81.84" height="2.5" fill="#b4a63a"/>
<rect x="1130.71" y="954" width="81.84" height="12.5" fill="#d02a1c"/>
<rect x="1130.71" y="966.5" width="81.84" height="12.5" fill="#d02a1c"/>
<rect x="1130.71" y="966" width="81.84" height="1" fill="#c0341c"/>
<rect x="1130.71" y="954" width="81.84" height="2.5" fill="#f28c2c"/>
<rect x="1130.71" y="976.5" width="81.84" height="2.5" fill="#f28c2c"/>
<rect x="1211.86" y="954" width="81.14" height="12.5" fill="#d02a1c"/>
<rect x="1211.86" y="966.5" width="81.14" height="12.5" fill="#d02a1c"/>
<rect x="1211.86" y="966" width="81.14" height="1" fill="#c0341c"/>
<rect x="1211.86" y="954" width="81.14" height="2.5" fill="#f28c2c"/>
<rect x="1211.86" y="976.5" width="81.14" height="2.5" fill="#f28c2c"/>
<rect x="806" y="956.5" width="1" height="10" fill="#b53c1b"/>
<rect x="806" y="966.5" width="1" height="10" fill="#b53c1b"/>
<rect x="806" y="954" width="1" height="2.5" fill="#7b4516"/>
<rect x="806" y="976.5" width="1" height="2.5" fill="#7b4516"/>
<rect x="887" y="956.5" width="1" height="10" fill="#b64920"/>
<rect x="887" y="966.5" width="1" height="10" fill="#b64920"/>
<rect x="887" y="954" width="1" height="2.5" fill="#7d5c1f"/>
<rect x="887" y="976.5" width="1" height="2.5" fill="#7d5c1f"/>
<rect x="968" y="956.5" width="1" height="10" fill="#b75625"/>
<rect x="968" y="966.5" width="1" height="10" fill="#b75625"/>
<rect x="968" y="954" width="1" height="2.5" fill="#7e7429"/>
<rect x="968" y="976.5" width="1" height="2.5" fill="#7e7429"/>
<rect x="1049" y="956.5" width="1" height="10" fill="#b75625"/>
<rect x="1049" y="966.5" width="1" height="10" fill="#b75625"/>
<rect x="1049" y="954" width="1" height="2.5" fill="#7e7429"/>
<rect x="1049" y="976.5" width="1" height="2.5" fill="#7e7429"/>
<rect x="1130" y="956.5" width="1" height="10" fill="#c35123"/>
<rect x="1130" y="966.5" width="1" height="10" fill="#c35123"/>
<rect x="1130" y="954" width="1" height="2.5" fill="#946b24"/>
<rect x="1130" y="976.5" width="1" height="2.5" fill="#946b24"/>
<rect x="1211" y="956.5" width="1" height="10" fill="#ce4c20"/>
<rect x="1211" y="966.5" width="1" height="10" fill="#ce4c20"/>
<rect x="1211" y="954" width="1" height="2.5" fill="#a9621f"/>
<rect x="1211" y="976.5" width="1" height="2.5" fill="#a9621f"/>
<rect x="944.93" y="866.7" width="3" height="3" fill="#ff0000"/>
<rect x="949.93" y="881.5" width="3" height="3" fill="#ff0000"/>
<rect x="949.93" y="891.7" width="3" height="3" fill="#ff0000"/>
<rect x="1031.07" y="881.5" width="3" height="3" fill="#ff0000"/>
<rect x="1031.07" y="891.7" width="3" height="3" fill="#ff0000"/>
<rect x="1112.21" y="881.5" width="3" height="3" fill="#ff0000"/>
<rect x="1112.21" y="891.7" width="3" height="3" fill="#ff0000"/>
<rect x="1193.36" y="881.5" width="3" height="3" fill="#ff0000"/>
<rect x="1193.36" y="891.7" width="3" height="3" fill="#ff0000"/>
<rect x="1274.5" y="881.5" width="3" height="3" fill="#ff0000"/>
<rect x="1274.5" y="891.7" width="3" height="3" fill="#ff0000"/>
<rect x="954.93" y="906.5" width="3" height="3" fill="#ff0000"/>
<rect x="954.93" y="916.7" width="3" height="3" fill="#ff0000"/>
<rect x="1036.07" y="906.5" width="3" height="3" fill="#ff0000"/>
<rect x="1036.07" y="916.7" width="3" height="3" fill="#ff0000"/>
<rect x="1117.21" y="906.5" width="3" height="3" fill="#ff0000"/>
<rect x="1117.21" y="916.7" width="3" height="3" fill="#ff0000"/>
<rect x="1198.36" y="906.5" width="3" height="3" fill="#ff0000"/>
<rect x="1198.36" y="916.7" width="3" height="3" fill="#ff0000"/>
<rect x="1279.5" y="906.5" width="3" height="3" fill="#ff0000"/>
<rect x="1279.5" y="916.7" width="3" height="3" fill="#ff0000"/>
<rect x="797.64" y="931.5" width="3" height="3" fill="#ff0000"/>
<rect x="797.64" y="941.7" width="3" height="3" fill="#ff0000"/>
<rect x="878.79" y="931.5" width="3" height="3" fill="#ff0000"/>
<rect x="878.79" y="941.7" width="3" height="3" fill="#ff0000"/>
<rect x="959.93" y="931.5" width="3" height="3" fill="#ff0000"/>
<rect x="959.93" y="941.7" width="3" height="3" fill="#ff0000"/>
<rect x="1041.07" y="931.5" width="3" height="3" fill="#ff0000"/>
<rect x="1041.07" y="941.7" width="3" height="3" fill="#ff0000"/>
<rect x="1122.21" y="931.5" width="3" height="3" fill="#ff0000"/>
<rect x="1122.21" y="941.7" width="3" height="3" fill="#ff0000"/>
<rect x="1203.36" y="931.5" width="3" height="3" fill="#ff0000"/>
<rect x="1203.36" y="941.7" width="3" height="3" fill="#ff0000"/>
<rect x="1284.5" y="931.5" width="3" height="3" fill="#ff0000"/>
<rect x="1284.5" y="941.7" width="3" height="3" fill="#ff0000"/>
<rect x="802.64" y="956.5" width="3" height="3" fill="#ff0000"/>
<rect x="802.64" y="966.7" width="3" height="3" fill="#ff0000"/>
<rect x="883.79" y="956.5" width="3" height="3" fill="#ff0000"/>
<rect x="883.79" y="966.7" width="3" height="3" fill="#ff0000"/>
<rect x="964.93" y="956.5" width="3" height="3" fill="#ff0000"/>
<rect x="964.93" y="966.7" width="3" height="3" fill="#ff0000"/>
<rect x="1046.07" y="956.5" width="3" height="3" fill="#ff0000"/>
<rect x="1046.07" y="966.7" width="3" height="3" fill="#ff0000"/>
<rect x="1127.21" y="956.5" width="3" height="3" fill="#ff0000"/>
<rect x="1127.21" y="966.7" width="3" height="3" fill="#ff0000"/>
<rect x="1208.36" y="956.5" width="3" height="3" fill="#ff0000"/>
<rect x="1208.36" y="966.7" width="3" height="3" fill="#ff0000"/>
<rect x="1289.5" y="956.5" width="3" height="3" fill="#ff0000"/>
<rect x="1289.5" y="966.7" width="3" height="3" fill="#ff0000"/>
<g font-family="Liberation Sans, sans-serif" font-size="14" fill="#ffffff">
<text x="535.5" y="45.8" text-anchor="end">68</text>
<text x="1111" y="45.8">68</text>
<text x="540.5" y="70.8" text-anchor="end">69</text>
<text x="1116" y="70.8">69</text>
<text x="545.5" y="95.8" text-anchor="end">70</text>
<text x="1121" y="95.8">70</text>
<text x="550.5" y="120.8" text-anchor="end">71</text>
<text x="1126" y="120.8">71</text>
<text x="555.5" y="145.8" text-anchor="end">72</text>
<text x="1131" y="145.8">72</text>
<text x="560.5" y="170.8" text-anchor="end">73</text>
<text x="1136" y="170.8">73</text>
<text x="565.5" y="195.8" text-anchor="end">74</text>
<text x="1141" y="195.8">74</text>
<text x="570.5" y="220.8" text-anchor="end">75</text>
<text x="1146" y="220.8">75</text>
<text x="575.5" y="245.8" text-anchor="end">76</text>
<text x="1151" y="245.8">76</text>
<text x="742.79" y="270.8" text-anchor="end">77</text>
<text x="1156" y="270.8">77</text>
<text x="747.79" y="295.8" text-anchor="end">78</text>
<text x="1161" y="295.8">78</text>
<text x="590.5" y="320.8" text-anchor="end">79</text>
<text x="1166" y="320.8">79</text>
<text x="595.5" y="345.8" text-anchor="end">80</text>
<text x="1171" y="345.8">80</text>
<text x="600.5" y="370.8" text-anchor="end">81</text>
<text x="1176" y="370.8">81</text>
<text x="605.5" y="395.8" text-anchor="end">82</text>
<text x="1181" y="395.8">82</text>
<text x="610.5" y="420.8" text-anchor="end">83</text>
<text x="1186" y="420.8">83</text>
<text x="615.5" y="445.8" text-anchor="end">84</text>
<text x="1191" y="445.8">84</text>
<text x="620.5" y="470.8" text-anchor="end">85</text>
<text x="1196" y="470.8">85</text>
<text x="625.5" y="495.8" text-anchor="end">86</text>
<text x="1201" y="495.8">86</text>
<text x="630.5" y="520.8" text-anchor="end">87</text>
<text x="1206" y="520.8">87</text>
<text x="635.5" y="545.8" text-anchor="end">88</text>
<text x="1211" y="545.8">88</text>
<text x="640.5" y="570.8" text-anchor="end">89</text>
<text x="1216" y="570.8">89</text>
<text x="645.5" y="595.8" text-anchor="end">90</text>
<text x="1221" y="595.8">90</text>
<text x="650.5" y="620.8" text-anchor="end">91</text>
<text x="1226" y="620.8">91</text>
<text x="655.5" y="645.8" text-anchor="end">92</text>
<text x="1231" y="645.8">92</text>
<text x="660.5" y="670.8" text-anchor="end">93</text>
<text x="1236" y="670.8">93</text>
<text x="665.5" y="695.8" text-anchor="end">94</text>
<text x="1241" y="695.8">94</text>
<text x="670.5" y="720.8" text-anchor="end">95</text>
<text x="1246" y="720.8">95</text>
<text x="675.5" y="745.8" text-anchor="end">96</text>
<text x="1251" y="745.8">96</text>
<text x="680.5" y="770.8" text-anchor="end">97</text>
<text x="1256" y="770.8">97</text>
<text x="685.5" y="795.8" text-anchor="end">98</text>
<text x="1261" y="795.8">98</text>
<text x="690.5" y="820.8" text-anchor="end">99</text>
<text x="1266" y="820.8">99</text>
<text x="695.5" y="845.8" text-anchor="end">100</text>
<text x="1271" y="845.8">100</text>
<text x="700.5" y="870.8" text-anchor="end">101</text>
<text x="1276" y="870.8">101</text>
<text x="705.5" y="895.8" text-anchor="end">102</text>
<text x="1281" y="895.8">102</text>
<text x="710.5" y="920.8" text-anchor="end">103</text>
<text x="1286" y="920.8">103</text>
<text x="715.5" y="945.8" text-anchor="end">104</text>
<text x="1291" y="945.8">104</text>
<text x="720.5" y="970.8" text-anchor="end">105</text>
<text x="1296" y="970.8">105</text>
</g>
<circle cx="756.4" cy="27.9" r="22" fill="#ffffff"/>
<circle cx="756.4" cy="27.9" r="14.6" fill="#e6e6fa"/>
<circle cx="603" cy="52.9" r="22" fill="#ffffff"/>
<circle cx="603" cy="52.9" r="14.6" fill="#e6e6fa"/>
<text x="603" y="54.7" text-anchor="middle" font-family="Liberation Sans, sans-serif" font-size="7" fill="#2a2a2a" stroke="#2a2a2a" stroke-width="0.2">B13</text>
<circle cx="1013" cy="78" r="22" fill="#ffffff"/>
<circle cx="1013" cy="78" r="14.6" fill="#e6e6fa"/>
<text x="1013" y="79.8" text-anchor="middle" font-family="Liberation Sans, sans-serif" font-size="7" fill="#2a2a2a" stroke="#2a2a2a" stroke-width="0.2">B04</text>
<circle cx="784.9" cy="152.8" r="22" fill="#ffffff"/>
<circle cx="784.9" cy="152.8" r="14.6" fill="#e6e6fa"/>
<text x="784.9" y="154.6" text-anchor="middle" font-family="Liberation Sans, sans-serif" font-size="7" fill="#2a2a2a" stroke="#2a2a2a" stroke-width="0.2">B10</text>
<circle cx="632.8" cy="202.9" r="22" fill="#ffffff"/>
<circle cx="632.8" cy="202.9" r="14.6" fill="#e6e6fa"/>
<text x="632.8" y="204.7" text-anchor="middle" font-family="Liberation Sans, sans-serif" font-size="7" fill="#2a2a2a" stroke="#2a2a2a" stroke-width="0.2">B14</text>
<circle cx="1034.6" cy="202.8" r="22" fill="#ffffff"/>
<circle cx="1034.6" cy="202.8" r="14.6" fill="#e6e6fa"/>
<text x="1034.6" y="204.6" text-anchor="middle" font-family="Liberation Sans, sans-serif" font-size="7" fill="#2a2a2a" stroke="#2a2a2a" stroke-width="0.2">B05</text>
<circle cx="833.2" cy="302.9" r="22" fill="#9ccb3b"/>
<circle cx="833.2" cy="302.9" r="14.6" fill="#82c447"/>
<path d="M826.7 290.2 Q833.2 286.4 839.7 290.2 Z" fill="#e4e8e0"/>
<text x="833.2" y="304.7" text-anchor="middle" font-family="Liberation Sans, sans-serif" font-size="7" fill="#1a1a1a" stroke="#1a1a1a" stroke-width="0.2">A10</text>
<circle cx="1056.5" cy="304.5" r="22" fill="#9ccb3b"/>
<circle cx="1056.5" cy="304.5" r="14.6" fill="#82c447"/>
<path d="M1050 291.8 Q1056.5 288 1063 291.8 Z" fill="#e4e8e0"/>
<text x="1056.5" y="306.3" text-anchor="middle" font-family="Liberation Sans, sans-serif" font-size="7" fill="#1a1a1a" stroke="#1a1a1a" stroke-width="0.2">A11</text>
<circle cx="681.6" cy="354.6" r="22" fill="#9ccb3b"/>
<circle cx="681.6" cy="354.6" r="14.6" fill="#82c447"/>
<path d="M675.1 341.9 Q681.6 338.1 688.1 341.9 Z" fill="#e4e8e0"/>
<text x="681.6" y="356.4" text-anchor="middle" font-family="Liberation Sans, sans-serif" font-size="7" fill="#1a1a1a" stroke="#1a1a1a" stroke-width="0.2">A01</text>
<circle cx="935.9" cy="398" r="22" fill="#9ccb3b"/>
<circle cx="935.9" cy="398" r="14.6" fill="#82c447"/>
<path d="M929.4 385.3 Q935.9 381.5 942.4 385.3 Z" fill="#e4e8e0"/>
<text x="935.9" y="399.8" text-anchor="middle" font-family="Liberation Sans, sans-serif" font-size="7" fill="#1a1a1a" stroke="#1a1a1a" stroke-width="0.2">A06</text>
<circle cx="1111.5" cy="453.5" r="22" fill="#9ccb3b"/>
<circle cx="1111.5" cy="453.5" r="14.6" fill="#82c447"/>
<path d="M1105 440.8 Q1111.5 437 1118 440.8 Z" fill="#e4e8e0"/>
<text x="1111.5" y="455.3" text-anchor="middle" font-family="Liberation Sans, sans-serif" font-size="7" fill="#1a1a1a" stroke="#1a1a1a" stroke-width="0.2">A12</text>
<circle cx="701.6" cy="472.5" r="22" fill="#9ccb3b"/>
<circle cx="701.6" cy="472.5" r="14.6" fill="#82c447"/>
<path d="M695.1 459.8 Q701.6 456 708.1 459.8 Z" fill="#e4e8e0"/>
<text x="701.6" y="474.3" text-anchor="middle" font-family="Liberation Sans, sans-serif" font-size="7" fill="#1a1a1a" stroke="#1a1a1a" stroke-width="0.2">A02</text>
<circle cx="964.7" cy="552.9" r="22" fill="#9ccb3b"/>
<circle cx="964.7" cy="552.9" r="14.6" fill="#82c447"/>
<path d="M958.2 540.2 Q964.7 536.4 971.2 540.2 Z" fill="#e4e8e0"/>
<text x="964.7" y="554.7" text-anchor="middle" font-family="Liberation Sans, sans-serif" font-size="7" fill="#1a1a1a" stroke="#1a1a1a" stroke-width="0.2">A07</text>
<circle cx="726.6" cy="578" r="22" fill="#9ccb3b"/>
<circle cx="726.6" cy="578" r="14.6" fill="#82c447"/>
<path d="M720.1 565.3 Q726.6 561.5 733.1 565.3 Z" fill="#e4e8e0"/>
<text x="726.6" y="579.8" text-anchor="middle" font-family="Liberation Sans, sans-serif" font-size="7" fill="#1a1a1a" stroke="#1a1a1a" stroke-width="0.2">A03</text>
<circle cx="1146.5" cy="628.4" r="22" fill="#9ccb3b"/>
<circle cx="1146.5" cy="628.4" r="14.6" fill="#82c447"/>
<path d="M1140 615.7 Q1146.5 611.9 1153 615.7 Z" fill="#e4e8e0"/>
<text x="1146.5" y="630.2" text-anchor="middle" font-family="Liberation Sans, sans-serif" font-size="7" fill="#1a1a1a" stroke="#1a1a1a" stroke-width="0.2">A13</text>
<circle cx="746.6" cy="680.7" r="22" fill="#9ccb3b"/>
<circle cx="746.6" cy="680.7" r="14.6" fill="#82c447"/>
<path d="M740.1 668 Q746.6 664.2 753.1 668 Z" fill="#e4e8e0"/>
<text x="746.6" y="682.5" text-anchor="middle" font-family="Liberation Sans, sans-serif" font-size="7" fill="#1a1a1a" stroke="#1a1a1a" stroke-width="0.2">A04</text>
<circle cx="989.5" cy="681" r="22" fill="#9ccb3b"/>
<circle cx="989.5" cy="681" r="14.6" fill="#82c447"/>
<path d="M983 668.3 Q989.5 664.5 996 668.3 Z" fill="#e4e8e0"/>
<text x="989.5" y="682.8" text-anchor="middle" font-family="Liberation Sans, sans-serif" font-size="7" fill="#1a1a1a" stroke="#1a1a1a" stroke-width="0.2">A08</text>
<circle cx="1171.5" cy="772.9" r="22" fill="#9ccb3b"/>
<circle cx="1171.5" cy="772.9" r="14.6" fill="#82c447"/>
<path d="M1165 760.2 Q1171.5 756.4 1178 760.2 Z" fill="#e4e8e0"/>
<text x="1171.5" y="774.7" text-anchor="middle" font-family="Liberation Sans, sans-serif" font-size="7" fill="#1a1a1a" stroke="#1a1a1a" stroke-width="0.2">A14</text>
<circle cx="1009.5" cy="798" r="22" fill="#9ccb3b"/>
<circle cx="1009.5" cy="798" r="14.6" fill="#82c447"/>
<path d="M1003 785.3 Q1009.5 781.5 1016 785.3 Z" fill="#e4e8e0"/>
<text x="1009.5" y="799.8" text-anchor="middle" font-family="Liberation Sans, sans-serif" font-size="7" fill="#1a1a1a" stroke="#1a1a1a" stroke-width="0.2">A09</text>
<circle cx="781.6" cy="847.5" r="22" fill="#9ccb3b"/>
<circle cx="781.6" cy="847.5" r="14.6" fill="#82c447"/>
<path d="M775.1 834.8 Q781.6 831 788.1 834.8 Z" fill="#e4e8e0"/>
<text x="781.6" y="849.3" text-anchor="middle" font-family="Liberation Sans, sans-serif" font-size="7" fill="#1a1a1a" stroke="#1a1a1a" stroke-width="0.2">A05</text>
<circle cx="958.3" cy="923.4" r="22" fill="#9acd3a"/>
<circle cx="958.3" cy="923.4" r="14.6" fill="#e6e6fa"/>
<rect x="973.1" y="904.4" width="3" height="3" fill="#ff0000"/>
<text x="958.3" y="925.2" text-anchor="middle" font-family="Liberation Sans, sans-serif" font-size="7" fill="#2a2a2a" stroke="#2a2a2a" stroke-width="0.2">F12</text>
<circle cx="1206.5" cy="948" r="22" fill="#9acd3a"/>
<circle cx="1206.5" cy="948" r="14.6" fill="#e6e6fa"/>
<rect x="1221.3" y="929" width="3" height="3" fill="#ff0000"/>
<text x="1206.5" y="949.8" text-anchor="middle" font-family="Liberation Sans, sans-serif" font-size="7" fill="#2a2a2a" stroke="#2a2a2a" stroke-width="0.2">F08</text>
</g>
</svg>
<div style="position:absolute;font-size:18.6px;font-style:italic;color:#fff;white-space:nowrap;line-height:20px;right:1383.5px;top:257.5px">ITS №1</div>
<div style="position:absolute;font-size:18.6px;font-style:italic;color:#fff;white-space:nowrap;line-height:20px;right:1383.5px;top:278px">203.517 кВт</div>
<div style="position:absolute;font-size:18.6px;font-style:italic;color:#fff;white-space:nowrap;line-height:20px;left:637px;top:257.5px">ITS №2</div>
<div style="position:absolute;font-size:18.6px;font-style:italic;color:#fff;white-space:nowrap;line-height:20px;left:637px;top:278px">162 кВт</div>
<svg style="position:absolute;left:535px;top:254px" width="102" height="50" viewBox="535 254 102 50">
<rect x="536.4" y="255.4" width="98.2" height="46.2" fill="#3c474e" stroke="#f2f2f2" stroke-width="1.1"/>
<rect x="540.3" y="263.2" width="42.2" height="29.1" fill="none" stroke="#c9d0d4" stroke-width="0.8" stroke-dasharray="1.1 1.9"/>
<rect x="588.4" y="263.2" width="43" height="29.1" fill="none" stroke="#c9d0d4" stroke-width="0.8" stroke-dasharray="1.1 1.9"/>
<rect x="542.6" y="271.1" width="16.8" height="13" fill="#5a6b77" stroke="#dfe4e6" stroke-width="1"/>
<rect x="551.6" y="272.7" width="6" height="3.4" fill="#5a6b77" stroke="#dfe4e6" stroke-width="0.9"/>
<rect x="555.6" y="278.7" width="2" height="1.8" fill="none" stroke="#c9d0d4" stroke-width="0.6"/>
<rect x="560.9" y="265.6" width="19.8" height="24.2" fill="#677b88" stroke="#9eabb2" stroke-width="0.8"/>
<circle cx="570.7" cy="272.8" r="6.1" fill="none" stroke="#f0f0f0" stroke-width="0.9"/>
<circle cx="570.7" cy="282.3" r="6.1" fill="none" stroke="#f0f0f0" stroke-width="0.9"/>
<path d="M581.7 272 H589.8 M581.7 277.9 H589.8 M581.7 283.3 H589.8" stroke="#f4f4f4" stroke-width="1.4"/>
<rect x="591" y="265.6" width="19.2" height="24.2" fill="#677b88" stroke="#9eabb2" stroke-width="0.8"/>
<circle cx="600.5" cy="272.8" r="6.1" fill="none" stroke="#f0f0f0" stroke-width="0.9"/>
<circle cx="600.5" cy="282.3" r="6.1" fill="none" stroke="#f0f0f0" stroke-width="0.9"/>
<rect x="611.8" y="271.1" width="17.2" height="13" fill="#5a6b77" stroke="#dfe4e6" stroke-width="1"/>
<rect x="620.9" y="272.7" width="6.4" height="3.4" fill="#5a6b77" stroke="#dfe4e6" stroke-width="0.9"/>
<rect x="625.3" y="278.7" width="2" height="1.8" fill="none" stroke="#c9d0d4" stroke-width="0.6"/>
</svg>
<div style="position:absolute;left:10px;top:5px;width:600px;height:25px;background:#4c4c4f"></div>
<div class="s" style="position:absolute;left:22px;top:13px;font-size:11px;color:#fff;white-space:nowrap">Система</div>
<div class="s" style="position:absolute;left:172px;top:13px;font-size:11px;color:#fff;white-space:nowrap">Електрика</div>
<div class="s" style="position:absolute;left:322px;top:13px;font-size:11px;color:#fff;white-space:nowrap">Журналювання</div>
<div class="s" style="position:absolute;left:472px;top:13px;font-size:11px;color:#fff;white-space:nowrap">Аналіз</div>
<div style="position:absolute;left:630.5px;top:5.5px;width:24px;height:24px;background:#48484a"></div>
<div style="position:absolute;left:630.5px;top:6px;width:24px;text-align:center;font-size:20px;line-height:22px;color:#fff">?</div>
<div style="position:absolute;left:732.5px;top:5.5px;width:180px;height:24px;background:#3d5038"></div>
<svg style="position:absolute;left:734px;top:8px" width="19" height="19" viewBox="734 8 19 19">
<rect x="734.6" y="8.6" width="17.8" height="17.8" fill="#98de30" stroke="#000" stroke-width="1.2"/>
<path d="M735.6 9.5 L751.4 25.4" stroke="#000" stroke-width="1.25"/>
<path d="M741.8 15 L745.4 10.5 L747.6 14.4 L750.4 10.7" stroke="#000" stroke-width="1.2" fill="none" stroke-linejoin="round" stroke-linecap="round"/>
<path d="M736.8 23.5 H744.3" stroke="#000" stroke-width="1.1" stroke-linecap="round"/></svg>
<svg style="position:absolute;left:794px;top:8px" width="19" height="19" viewBox="794 8 19 19">
<rect x="794.6" y="8.6" width="17.8" height="17.8" fill="#cccccc" stroke="#000" stroke-width="1.2"/>
<path d="M795.6 9.5 L811.4 25.4" stroke="#000" stroke-width="1.25"/>
<path d="M801.8 15 L805.4 10.5 L807.6 14.4 L810.4 10.7" stroke="#000" stroke-width="1.2" fill="none" stroke-linejoin="round" stroke-linecap="round"/>
<path d="M796.8 23.5 H804.3" stroke="#000" stroke-width="1.1" stroke-linecap="round"/></svg>
<svg style="position:absolute;left:854px;top:8px" width="19" height="19" viewBox="854 8 19 19">
<rect x="854.6" y="8.6" width="17.8" height="17.8" fill="#d42a1e" stroke="#000" stroke-width="1.2"/>
<path d="M855.6 9.5 L871.4 25.4" stroke="#000" stroke-width="1.25"/>
<path d="M861.8 15 L865.4 10.5 L867.6 14.4 L870.4 10.7" stroke="#000" stroke-width="1.2" fill="none" stroke-linejoin="round" stroke-linecap="round"/>
<path d="M856.8 23.5 H864.3" stroke="#000" stroke-width="1.1" stroke-linecap="round"/></svg>
<div style="position:absolute;left:766.5px;top:9px;font-size:14px;color:#fff">24</div>
<div style="position:absolute;left:830.5px;top:9px;font-size:14px;color:#fff">0</div>
<div style="position:absolute;left:886.5px;top:9px;font-size:14px;color:#fff">45</div>
<div style="position:absolute;left:1010px;top:5.5px;width:900px;height:24.5px;background:#263c48"></div>
<div style="position:absolute;left:1049.5px;top:9px;font-size:14px;color:#fff">0</div>
<div style="position:absolute;left:1149.5px;top:9px;font-size:14px;color:#fff">0</div>
<div style="position:absolute;left:1249.5px;top:9px;font-size:14px;color:#fff">0</div>
<div style="position:absolute;left:1349.5px;top:9px;font-size:14px;color:#fff">0</div>
<div style="position:absolute;left:1449.5px;top:9px;font-size:14px;color:#fff">0</div>
<div style="position:absolute;left:1549.5px;top:9px;font-size:14px;color:#fff">0</div>
<div style="position:absolute;left:1649.5px;top:9px;font-size:14px;color:#fff">0</div>
<div style="position:absolute;left:1749.5px;top:9px;font-size:14px;color:#fff">0</div>
<div style="position:absolute;left:1849.5px;top:9px;font-size:14px;color:#fff">0</div>
<svg style="position:absolute;left:1010px;top:4px" width="32" height="28" viewBox="1010 4 32 28">
<text x="1014.3" y="16.8" font-family="Liberation Sans, sans-serif" font-size="10" font-weight="bold" fill="#fff">t</text>
<circle cx="1020.5" cy="10.3" r="1.25" fill="none" stroke="#fff" stroke-width="0.9"/>
<path d="M1025.8 5.8 H1036.7 Q1036 10.6 1031.25 10.8 Q1026.5 10.6 1025.8 5.8 Z" fill="#fff"/>
<path d="M1023.6 8.3 h1.5 M1035.8 8.3 h1.6" stroke="#fff" stroke-width="0.9"/>
<rect x="1026.3" y="11.3" width="0.9" height="0.9" fill="#fff"/><rect x="1030" y="11.6" width="0.9" height="0.9" fill="#fff"/><rect x="1034.2" y="11.3" width="0.9" height="0.9" fill="#fff"/>
<path d="M1021.25 13.75 H1034.6 L1037.9 25 H1018.3 Z" fill="#fff" stroke="#000" stroke-width="0.9"/>
<path d="M1022.1 15 H1025 V17.1 H1021.8 Z M1026.25 15 H1029.6 V17.1 H1026.25 Z M1030.8 15 H1034 L1034.3 17.1 H1030.8 Z" fill="#000"/>
<path d="M1021.5 18 H1025 V20.2 H1021.2 Z M1026.25 18 H1029.6 V20.2 H1026.25 Z M1030.8 18 H1034.4 L1034.8 20.2 H1030.8 Z" fill="#000"/>
<path d="M1020.9 21.2 H1024.8 V23.8 H1020.5 Z M1026.25 21.2 H1029.6 V23.8 H1026.25 Z M1031 21.2 H1035 L1035.5 23.8 H1031 Z" fill="#000"/>
<path d="M1028.3 25.2 V28.8" stroke="#fff" stroke-width="1"/>
<rect x="1020.4" y="28.7" width="16.3" height="1.4" fill="#fff"/></svg>
<svg style="position:absolute;left:1114px;top:4px" width="24" height="27" viewBox="1114 4 24 27">
<path d="M1120.20 6.7 H1131.80 Q1131.20 10.4 1126.00 10.6 Q1120.80 10.4 1120.20 6.7 Z" fill="#fff"/>
<path d="M1117.60 9.6 h1.4 M1133.00 9.6 h1.4" stroke="#fff" stroke-width="0.9"/>
<rect x="1121.40" y="12" width="0.9" height="0.9" fill="#ddd"/><rect x="1125.50" y="12" width="0.9" height="0.9" fill="#ddd"/><rect x="1129.40" y="12" width="0.9" height="0.9" fill="#ddd"/>
<text x="1126.00" y="17.9" text-anchor="middle" font-family="Liberation Sans, sans-serif" font-size="4.8" fill="#c8c8c8" textLength="10.6" lengthAdjust="spacingAndGlyphs">UV</text>
<text x="1116.70" y="28.8" font-family="Liberation Sans, sans-serif" font-size="10.4" fill="#fff" stroke="#fff" stroke-width="0.35" textLength="18.3" lengthAdjust="spacingAndGlyphs">GHI</text></svg>
<svg style="position:absolute;left:1214px;top:4px" width="24" height="27" viewBox="1214 4 24 27">
<path d="M1220.20 6.7 H1231.80 Q1231.20 10.4 1226.00 10.6 Q1220.80 10.4 1220.20 6.7 Z" fill="#fff"/>
<path d="M1217.60 9.6 h1.4 M1233.00 9.6 h1.4" stroke="#fff" stroke-width="0.9"/>
<rect x="1221.40" y="12" width="0.9" height="0.9" fill="#ddd"/><rect x="1225.50" y="12" width="0.9" height="0.9" fill="#ddd"/><rect x="1229.40" y="12" width="0.9" height="0.9" fill="#ddd"/>
<text x="1226.00" y="17.9" text-anchor="middle" font-family="Liberation Sans, sans-serif" font-size="4.8" fill="#c8c8c8" textLength="10.6" lengthAdjust="spacingAndGlyphs">UV</text>
<text x="1216.70" y="28.8" font-family="Liberation Sans, sans-serif" font-size="10.4" fill="#fff" stroke="#fff" stroke-width="0.35" textLength="18.3" lengthAdjust="spacingAndGlyphs">GTI</text></svg>
<svg style="position:absolute;left:1308px;top:3px" width="36" height="28" viewBox="1308 3 36 28">
<g fill="#fff"><circle cx="1319.9" cy="14.7" r="4.1"/><circle cx="1325.8" cy="11.7" r="4.8"/><ellipse cx="1333" cy="13.8" rx="4.2" ry="5"/><rect x="1319.9" y="12" width="13.2" height="6.8"/></g>
<path d="M1322.5 20.1 L1319.1 25.8 M1326.7 20.1 L1324.1 25.8 M1331.6 20.1 L1328.5 25.8" stroke="#dcdcdc" stroke-width="1.1"/>
<g fill="#e2e2e2"><rect x="1316" y="25.8" width="2.1" height="2.1"/><rect x="1321" y="25.8" width="2.1" height="2.1"/><rect x="1325.9" y="25.8" width="2.1" height="2.1"/><rect x="1332.1" y="25.8" width="2.1" height="2.1"/></g></svg>
<svg style="position:absolute;left:1412px;top:3px" width="30" height="28" viewBox="1412 3 30 28">
<path d="M1418.5 8.5 V27.9" stroke="#000" stroke-width="1.9"/>
<circle cx="1418.5" cy="8.4" r="2.3" fill="#000"/>
<path d="M1421.1 10.4 L1436.9 13.4 L1436.9 16.7 L1421.1 20.6 Z" fill="#fff" stroke="#000" stroke-width="1.1" stroke-linejoin="round"/>
<path d="M1424.2 11 V20 M1427.3 11.6 V19.3 M1430.4 12.2 V18.5 M1433.4 12.8 V17.7" stroke="#000" stroke-width="1.2"/></svg>
<svg style="position:absolute;left:1512px;top:3px" width="30" height="28" viewBox="1512 3 30 28">
<g stroke="#fff" stroke-width="1.6" fill="none" stroke-linecap="round">
<path d="M1515.6 12.3 H1528.4 Q1531.4 12.1 1531.2 9.6 Q1530.8 7.4 1527.8 8.4"/>
<path d="M1515.6 16.5 H1529 Q1534 16.4 1537.6 18.6"/>
<path d="M1529.4 16.3 Q1531.8 15.6 1532.4 13.4"/>
<path d="M1515.6 20.5 H1530.2 Q1537.2 20.8 1537.2 24.4 Q1536.8 27.6 1533.4 27.6 Q1530.4 27.3 1530.3 24.4"/>
<path d="M1515.6 24.5 H1527"/>
</g></svg>
<svg style="position:absolute;left:1610px;top:3px" width="34" height="28" viewBox="1610 3 34 28">
<text x="1615.3" y="15.7" font-family="Liberation Sans, sans-serif" font-size="10.8" fill="#fff" textLength="14.6" lengthAdjust="spacingAndGlyphs">AP</text>
<path d="M1630.5 14.4 H1637.5 M1630.5 16.5 H1637.5 M1630.5 18.4 H1637.5 M1627.6 20.5 H1637.5 M1630.5 22.5 H1637.5 M1630.5 24.4 H1637.5 M1630.5 26.5 H1637.5 M1627.6 28.4 H1637.5" stroke="#111" stroke-width="1"/>
<path d="M1615.7 22.2 L1626.6 28.9 L1623.5 17.3 L1621.2 21.6 Z" fill="#fff"/>
<path d="M1619.1 18.6 L1620.9 20.9" stroke="#fff" stroke-width="1.1" stroke-dasharray="0.9 0.5"/></svg>
<svg style="position:absolute;left:1710px;top:3px" width="34" height="28" viewBox="1710 3 34 28">
<path d="M1722.4 7.7 L1728.2 18.1 A6.6 6.6 0 1 1 1716.6 18.1 Z" fill="#fff"/>
<path d="M1732.5 5.85 L1736.4 11.8 A4.5 4.5 0 1 1 1728.8 11.8 Z" fill="#fff"/>
<text x="1722.5" y="24.6" text-anchor="middle" font-family="Liberation Sans, sans-serif" font-size="10.4" fill="#000">%</text></svg>
<svg style="position:absolute;left:1810px;top:3px" width="32" height="28" viewBox="1810 3 32 28">
<rect x="1816.5" y="6.2" width="8" height="15" fill="#ff0000"/>
<circle cx="1820.5" cy="23.3" r="5.9" fill="#ff0000"/>
<rect x="1819.2" y="8.6" width="2.6" height="13" fill="#1b2a31"/>
<circle cx="1820.5" cy="23.3" r="3.1" fill="#1b2a31"/>
<path d="M1827.4 9.3 H1837.6 M1827.4 11.3 H1834.4 M1827.4 13.3 H1834.4 M1827.4 15.3 H1834.4 M1827.4 17.5 H1837.6" stroke="#000" stroke-width="0.9"/></svg>
<div style="position:absolute;left:1896px;top:31px;width:13px;height:13px;background:#6b7b88"></div>
<div style="position:absolute;left:1896px;top:30px;width:13px;text-align:center;font-size:13px;line-height:14px;color:#fff">?</div>
<div style="position:absolute;background:#4c4c4f;left:10.5px;top:976px;width:174px;height:56px"></div>
<svg style="position:absolute;left:10px;top:976px" width="70" height="56" viewBox="0 0 70 56">
<path d="M27.5 6.6 V13.6" stroke="#f86a1e" stroke-width="1.2"/>
<path d="M10 12.2 L15.4 16.8" stroke="#f86a1e" stroke-width="1.2"/>
<path d="M3.4 23.6 L10.2 25" stroke="#f86a1e" stroke-width="1.2"/>
<path d="M3.2 34.4 H10.6" stroke="#f86a1e" stroke-width="1.2"/>
<path d="M43.4 34.4 H51" stroke="#f86a1e" stroke-width="1.2"/>
<path d="M9 44.4 H45 V51.8 H9 Z" fill="#f86a1e"/>
<path d="M13 43.8 Q12.6 33 17 23 Q18 20.6 21 20.4 L27.2 20.2 V43.8 Z" fill="none" stroke="#f86a1e" stroke-width="1"/>
<path d="M27.2 20.2 L33.6 20.6 Q36 21 37 23.8 Q40.8 33 41.8 43.8 H27.2 Z" fill="#f86a1e"/>
</svg>
<svg style="position:absolute;left:46px;top:974px" width="34" height="34" viewBox="0 0 34 34">
<circle cx="16.5" cy="16.4" r="15" fill="#d12a1c" stroke="#111" stroke-width="1"/>
<path d="M4.8 16.4 L11 11" stroke="#f86a1e" stroke-width="0.9"/>
<path d="M11 25.4 L17 24.2" stroke="#f86a1e" stroke-width="0.9"/>
<text x="16.6" y="20.6" text-anchor="middle" font-family="Liberation Sans, sans-serif" font-size="11" fill="#fff">662</text>
</svg>
<div class="s" style="position:absolute;left:97px;top:998px;font-size:11px;color:#fff;white-space:nowrap">Огляд тривог</div>
<div style="position:absolute;background:#4c4c4f;left:10px;top:1039px;width:173px;height:26px"></div>
<svg style="position:absolute;left:24px;top:1043px" width="18" height="18" viewBox="0 0 18 18">
<circle cx="8.8" cy="8.4" r="7.3" fill="none" stroke="#fff" stroke-width="1.4"/>
<path d="M8.6 2.8 V8.6 H13.6" stroke="#fff" stroke-width="1.4" fill="none"/>
</svg>
<div class="s" style="position:absolute;left:53.5px;top:1043px;font-size:14px;letter-spacing:-0.5px;color:#fff;white-space:nowrap">14:48:54</div>
<div style="position:absolute;background:#4c4c4f;left:190px;top:976px;width:175px;height:25px"></div>
<div style="position:absolute;left:205px;top:981px;width:16px;height:8px;background:#3a78c8"></div>
<div style="position:absolute;left:205px;top:989px;width:16px;height:8px;background:#f8d816"></div>
<div class="s" style="position:absolute;left:234px;top:982px;font-size:11px;color:#fff;white-space:nowrap">Українська</div>
<div style="position:absolute;background:#4c4c4f;left:190px;top:1008px;width:175px;height:26px"></div>
<div style="position:absolute;left:207.5px;top:1013px;font-size:14px;color:#fff">P</div>
<div style="position:absolute;background:#4c4c4f;left:190px;top:1039px;width:176px;height:26px"></div>
<svg style="position:absolute;left:204px;top:1043px" width="18" height="18" viewBox="0 0 18 18">
<rect x="1.6" y="2.4" width="14.6" height="14" rx="1.2" fill="none" stroke="#fff" stroke-width="1.1"/>
<path d="M1.6 5.4 H16.2" stroke="#fff" stroke-width="1.1"/>
<path d="M4.7 0.8 V3.4 M13.2 0.8 V3.4" stroke="#fff" stroke-width="1.1"/>
<text x="9" y="14.2" text-anchor="middle" font-family="Liberation Sans, sans-serif" font-size="8.2" fill="#fff">28</text>
</svg>
<div class="s" style="position:absolute;left:234px;top:1043px;font-size:14px;letter-spacing:-0.55px;color:#fff;white-space:nowrap">01.06.2020</div>
<div style="position:absolute;background:#4c4c4f;left:370px;top:976px;width:175px;height:25px"></div>
<svg style="position:absolute;left:384px;top:980px" width="18" height="18" viewBox="0 0 18 18">
<path d="M9 1.6 Q12.6 1.6 12.6 6 Q12.6 9.6 10.6 11 Q11 12.2 13.6 13 Q16.6 14 17 15.6 Q17.2 16.8 16 16.8 H2 Q0.8 16.8 1 15.6 Q1.4 14 4.4 13 Q7 12.2 7.4 11 Q5.4 9.6 5.4 6 Q5.4 1.6 9 1.6 Z" fill="#fff"/>
</svg>
<div class="s" style="position:absolute;left:414px;top:982px;font-size:11px;color:#fff;white-space:nowrap">Користувач: EDS</div>
<div style="position:absolute;background:#4c4c4f;left:370px;top:1008px;width:175px;height:25px"></div>
<div style="position:absolute;left:389px;top:1013px;font-size:14px;color:#fff">F</div>
<div style="position:absolute;left:414px;top:1012px;font-size:14px;color:#fff">0</div>
<div style="position:absolute;left:535px;top:1013px;width:7px;height:7px;background:#ff0000"></div>
<div style="position:absolute;background:#4c4c4f;left:370px;top:1039px;width:146px;height:26px"></div>
<svg style="position:absolute;left:384px;top:1043px" width="18" height="18" viewBox="0 0 18 18">
<path d="M2.6 8.6 V15.6 M6 7.4 V15.6 M9.6 5.6 V15.6" stroke="#f2f2f2" stroke-width="1.3"/>
<path d="M13.3 2.4 V15.6" stroke="#cfcfcf" stroke-width="1.3"/>
</svg>
<div style="position:absolute;background:#4c4c4f;left:520.5px;top:1039.5px;width:24px;height:25px"></div>
<div style="position:absolute;left:520.5px;top:1041px;width:24px;text-align:center;font-size:19px;font-weight:bold;color:#fff">?</div>
<div style="position:absolute;left:553.5px;top:975.5px;width:4px;height:89.5px;background:#48484a"></div>
<div style="position:absolute;left:581.3px;top:978.5px;font-size:20.85px;font-weight:bold;font-style:italic;color:#d6e4a0;white-space:nowrap">Лінія експорту</div>
<div style="position:absolute;left:825px;top:975px;width:200px;text-align:center;font-size:13px;color:#d4e0a4;white-space:nowrap">Основні параметри</div>
<div style="position:absolute;left:1075px;top:975px;width:200px;text-align:center;font-size:13px;color:#d4e0a4;white-space:nowrap">Напруга фазна</div>
<div style="position:absolute;left:1214.5px;top:975px;width:200px;text-align:center;font-size:13px;color:#d4e0a4;white-space:nowrap">Лінійна напруга</div>
<div style="position:absolute;left:1355px;top:975px;width:200px;text-align:center;font-size:13px;color:#d4e0a4;white-space:nowrap">Струм фазний</div>
<div style="position:absolute;left:911px;top:1002.5px;width:40px;text-align:center;font-size:13.4px;color:#d4e0a4;transform:scaleX(0.88)">0</div>
<div style="position:absolute;left:911px;top:1022.5px;width:40px;text-align:center;font-size:13.4px;color:#d4e0a4;transform:scaleX(0.88)">0</div>
<div style="position:absolute;left:911px;top:1042.5px;width:40px;text-align:center;font-size:13.4px;color:#d4e0a4;transform:scaleX(0.88)">0</div>
<div style="position:absolute;left:1161px;top:1002.5px;width:40px;text-align:center;font-size:13.4px;color:#d4e0a4;transform:scaleX(0.88)">0</div>
<div style="position:absolute;left:1161px;top:1022.5px;width:40px;text-align:center;font-size:13.4px;color:#d4e0a4;transform:scaleX(0.88)">0</div>
<div style="position:absolute;left:1161px;top:1042.5px;width:40px;text-align:center;font-size:13.4px;color:#d4e0a4;transform:scaleX(0.88)">0</div>
<div style="position:absolute;left:1301px;top:1002.5px;width:40px;text-align:center;font-size:13.4px;color:#d4e0a4;transform:scaleX(0.88)">0</div>
<div style="position:absolute;left:1301px;top:1022.5px;width:40px;text-align:center;font-size:13.4px;color:#d4e0a4;transform:scaleX(0.88)">0</div>
<div style="position:absolute;left:1301px;top:1042.5px;width:40px;text-align:center;font-size:13.4px;color:#d4e0a4;transform:scaleX(0.88)">0</div>
<div style="position:absolute;left:1441px;top:1002.5px;width:40px;text-align:center;font-size:13.4px;color:#d4e0a4;transform:scaleX(0.88)">0</div>
<div style="position:absolute;left:1441px;top:1022.5px;width:40px;text-align:center;font-size:13.4px;color:#d4e0a4;transform:scaleX(0.88)">0</div>
<div style="position:absolute;left:1441px;top:1042.5px;width:40px;text-align:center;font-size:13.4px;color:#d4e0a4;transform:scaleX(0.88)">0</div>
<div style="position:absolute;left:1913px;top:1070px;width:7px;height:7px;background:#ff0000"></div>
</div>
</body></html>
